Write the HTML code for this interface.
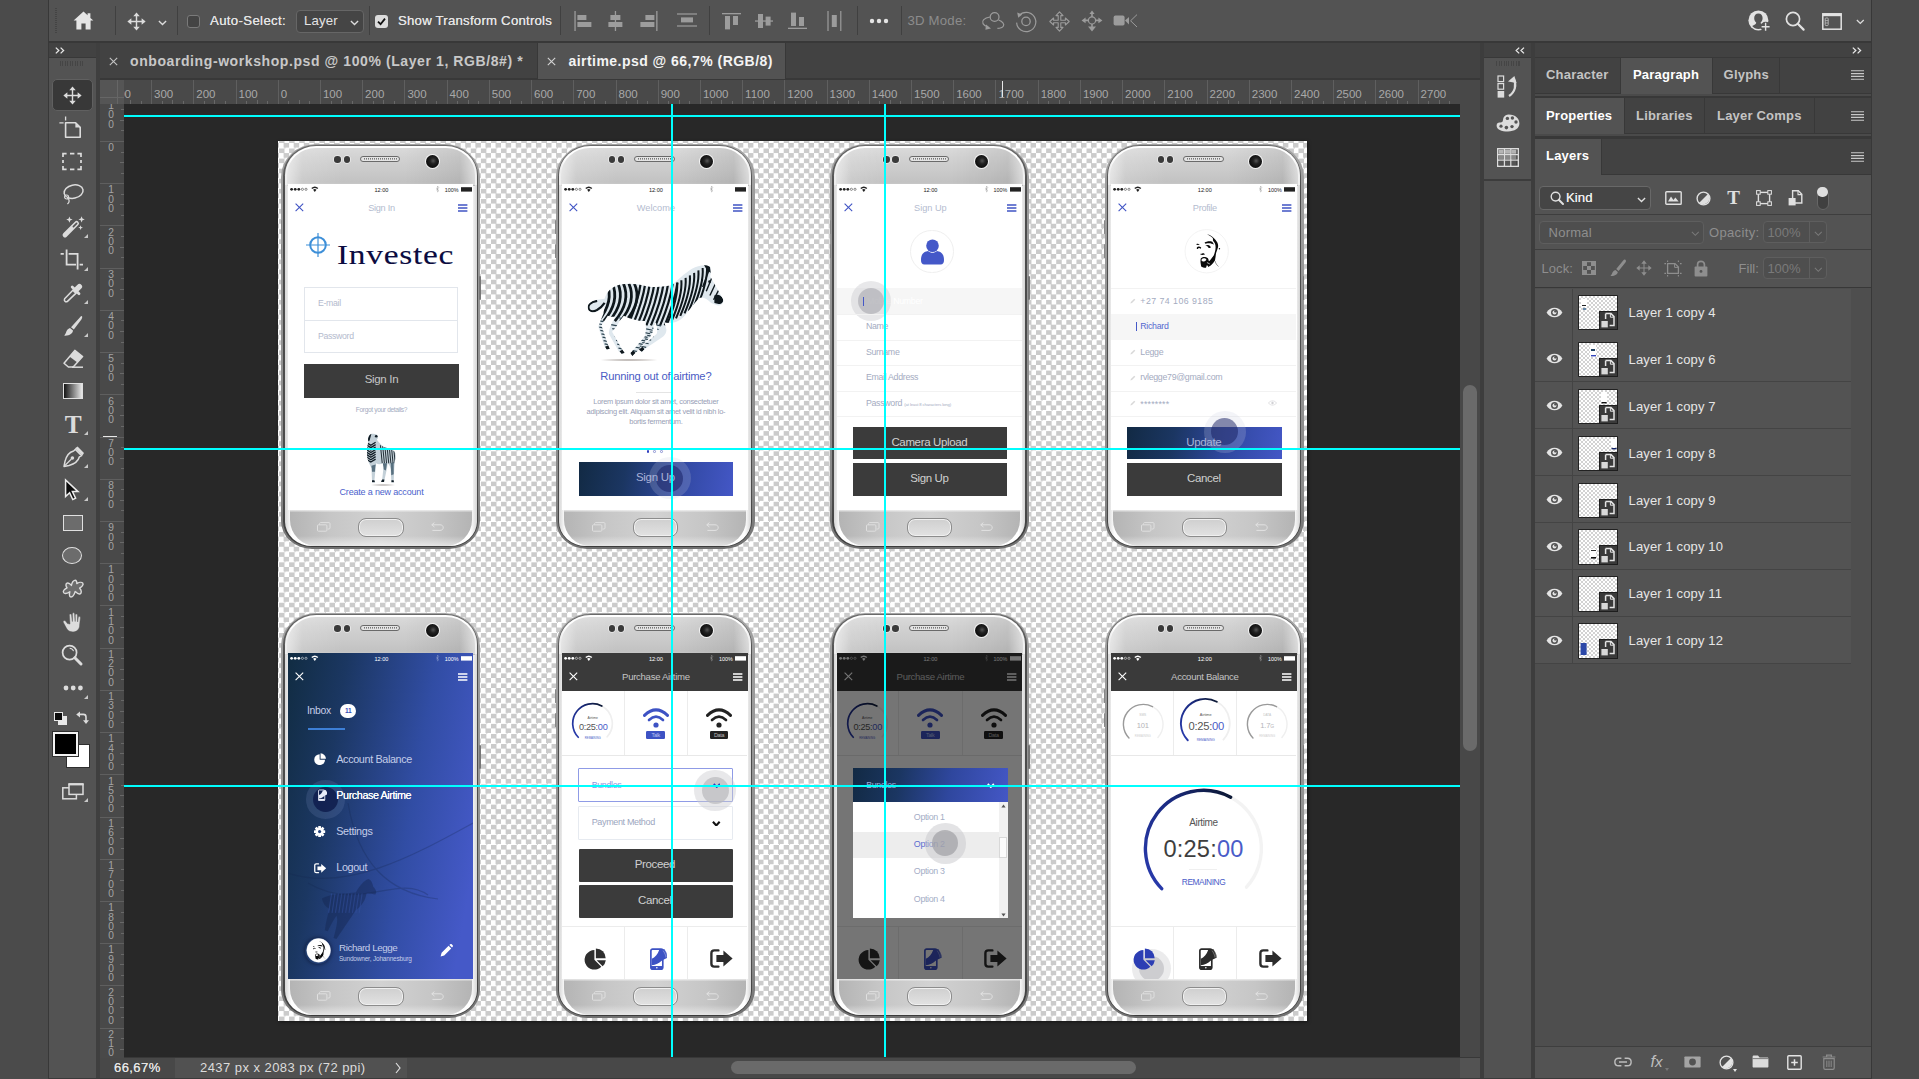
<!DOCTYPE html>
<html><head><meta charset="utf-8"><title>Photoshop</title>
<style>
html,body{margin:0;padding:0}
body{width:1919px;height:1079px;position:relative;overflow:hidden;background:#4b4b4b;font-family:"Liberation Sans",sans-serif}
#canvasclip{position:absolute;left:124px;top:104px;width:1336px;height:953px;overflow:hidden}
#canvasclip>.in{position:absolute;left:-124px;top:-104px}
</style></head>
<body>
<div style="position:absolute;left:48px;top:0px;width:1824px;height:1079px;background:#383838;"></div>
<div style="position:absolute;left:49px;top:0px;width:1822px;height:41px;background:#535353;"></div>
<div style="position:absolute;left:49px;top:43px;width:47px;height:14px;background:#424242;"></div>
<div style="position:absolute;left:49px;top:58px;width:47px;height:1021px;background:#535353;"></div>
<div style="position:absolute;left:96px;top:43px;width:4px;height:1036px;background:#3f3f3f;"></div>
<div style="position:absolute;left:100px;top:43px;width:1380px;height:35px;background:#424242;"></div>
<div style="position:absolute;left:538px;top:43px;width:247px;height:36px;background:#535353;"></div>
<div style="position:absolute;left:537px;top:43px;width:1px;height:35px;background:#383838;"></div>
<div style="position:absolute;left:785px;top:43px;width:1px;height:35px;background:#383838;"></div>
<div style="position:absolute;left:100px;top:80px;width:1360px;height:24px;background:#494949;"></div>
<div style="position:absolute;left:100px;top:104px;width:24px;height:953.6px;background:#494949;"></div>
<div style="position:absolute;left:124px;top:104px;width:1336px;height:953px;background:#282828;"></div>
<div style="position:absolute;left:1460px;top:80px;width:20px;height:977px;background:#484848;"></div>
<div style="position:absolute;left:1463px;top:385px;width:14px;height:366px;background:#6a6a6a;border-radius:7px;"></div>
<div style="position:absolute;left:100px;top:1057.6px;width:1380px;height:22px;background:#484848;"></div>
<div style="position:absolute;left:175.4px;top:1057.6px;width:232px;height:22px;background:#515151;"></div>
<div style="position:absolute;left:1460px;top:1057.6px;width:20px;height:22px;background:#535353;"></div>
<div style="position:absolute;left:731px;top:1061px;width:405px;height:13px;background:#6a6a6a;border-radius:7px;"></div>
<div style="position:absolute;left:1480px;top:43px;width:4px;height:1036px;background:#3d3d3d;"></div>
<div style="position:absolute;left:1484px;top:43px;width:47px;height:14px;background:#424242;"></div>
<div style="position:absolute;left:1484px;top:58px;width:47px;height:121px;background:#535353;"></div>
<div style="position:absolute;left:1484px;top:181px;width:47px;height:898px;background:#525252;"></div>
<div style="position:absolute;left:1531px;top:43px;width:4px;height:1036px;background:#3d3d3d;"></div>
<div style="position:absolute;left:1535px;top:43px;width:336px;height:14px;background:#424242;"></div>
<div style="position:absolute;left:1535px;top:58px;width:336px;height:35px;background:#424242;"></div>
<div style="position:absolute;left:1621px;top:58px;width:91px;height:36px;background:#535353;"></div>
<div style="position:absolute;left:1620px;top:58px;width:1px;height:35px;background:#383838;"></div>
<div style="position:absolute;left:1712px;top:58px;width:1px;height:35px;background:#383838;"></div>
<div style="position:absolute;left:1779px;top:58px;width:1px;height:35px;background:#383838;"></div>
<div style="position:absolute;left:1535px;top:94px;width:336px;height:2px;background:#4a4a4a;"></div>
<div style="position:absolute;left:1535px;top:98px;width:336px;height:35px;background:#424242;"></div>
<div style="position:absolute;left:1535px;top:98px;width:89px;height:36px;background:#535353;"></div>
<div style="position:absolute;left:1624px;top:98px;width:1px;height:35px;background:#383838;"></div>
<div style="position:absolute;left:1704px;top:98px;width:1px;height:35px;background:#383838;"></div>
<div style="position:absolute;left:1814px;top:98px;width:1px;height:35px;background:#383838;"></div>
<div style="position:absolute;left:1535px;top:134px;width:336px;height:2px;background:#4a4a4a;"></div>
<div style="position:absolute;left:1535px;top:139px;width:336px;height:35px;background:#424242;"></div>
<div style="position:absolute;left:1535px;top:139px;width:66px;height:36px;background:#535353;"></div>
<div style="position:absolute;left:1601px;top:139px;width:1px;height:35px;background:#383838;"></div>
<div style="position:absolute;left:1535px;top:175px;width:336px;height:39px;background:#535353;"></div>
<div style="position:absolute;left:1535px;top:215px;width:336px;height:34px;background:#535353;"></div>
<div style="position:absolute;left:1535px;top:250px;width:336px;height:37px;background:#535353;"></div>
<div style="position:absolute;left:1535px;top:288px;width:336px;height:758px;background:#4e4e4e;"></div>
<div style="position:absolute;left:1535px;top:1047px;width:336px;height:32px;background:#535353;"></div>
<div style="position:absolute;left:48px;top:1077.6px;width:1824px;height:1.4px;background:#3a3a3a;"></div>
<div style="position:absolute;left:0px;top:0px;width:48px;height:1079px;background:#4b4b4b;"></div>
<div style="position:absolute;left:1872px;top:0px;width:47px;height:1079px;background:#4b4b4b;"></div>
<div id="canvasclip"><div class="in"><div style="position:absolute;left:277.7px;top:141px;width:1029.4px;height:880px;background:repeating-conic-gradient(#cbcbcb 0 25%,#fff 0 50%) 1px 2px/10.1px 10.1px;box-shadow:1px 1px 3px rgba(0,0,0,.5)"></div><div style="position:absolute;left:281.2px;top:143.6px;width:199px;height:405.6px;background:linear-gradient(#a2a2a2,#949494 40%,#8a8a8a 85%,#707070);border-radius:35px 35px 31px 31px / 33px 33px 28px 28px;"><div style="position:absolute;left:2.1px;top:1.6px;width:194.8px;height:402.20000000000005px;background:linear-gradient(#6a6a6a,#4c4c4c 12%,#4c4c4c 88%,#3c3c3c);border-radius:32.8px 32.8px 28.8px 28.8px / 30.8px 30.8px 25.8px 25.8px;"></div><div style="position:absolute;left:3.6px;top:2.8px;width:191.8px;height:399.8px;background:linear-gradient(90deg,#d6d6d6,#f2f2f2 2.2%,#ffffff 3.4%,#ffffff 96.6%,#f2f2f2 97.8%,#d6d6d6);border-radius:31.3px 31.3px 27.3px 27.3px / 29.3px 29.3px 24.3px 24.3px;"></div><div style="position:absolute;left:5.6px;top:4.6px;width:187.8px;height:37.4px;background:linear-gradient(90deg,rgba(255,255,255,.18),rgba(255,255,255,0) 30%,rgba(0,0,0,0) 62%,rgba(0,0,0,.09)),linear-gradient(#dadada,#d2d2d2 25%,#cacaca 60%,#c2c2c2 90%,#cecece);border-radius:29px 29px 0 0 / 27px 27px 0 0;"></div><div style="position:absolute;left:3.6px;top:2.8px;width:191.8px;height:39px;background:linear-gradient(90deg,rgba(255,255,255,.5),rgba(255,255,255,0) 9%,rgba(255,255,255,0) 91%,rgba(255,255,255,.6));border-radius:31px 31px 0 0 / 29px 29px 0 0;"></div><div style="position:absolute;left:53.2px;top:12.6px;width:6.4px;height:6.4px;border-radius:50%;background:#3a3a3a;box-shadow:0 0 0 0.8px rgba(255,255,255,.55);"></div><div style="position:absolute;left:62.4px;top:12.6px;width:6.4px;height:6.4px;border-radius:50%;background:#3a3a3a;box-shadow:0 0 0 0.8px rgba(255,255,255,.55);"></div><div style="position:absolute;left:78.6px;top:12.4px;width:40.6px;height:6.4px;border-radius:3.4px;background:#e4e4e4;border:1px solid #6a6a6a;box-sizing:border-box;background-image:repeating-linear-gradient(90deg,#777 0,#777 0.9px,transparent 0.9px,transparent 2px);background-size:34px 1.6px;background-position:3px 1.4px;background-repeat:no-repeat;"></div><div style="position:absolute;left:144.6px;top:11.6px;width:13px;height:13px;border-radius:50%;background:radial-gradient(circle at 55% 45%,#555 0,#222 30%,#111 60%,#222 100%);box-shadow:0 0 0 1px #f4f4f4;"></div><div style="position:absolute;left:8.6px;top:366.6px;width:181.8px;height:35.4px;background:linear-gradient(90deg,#b4b4b4,#c6c6c6 22%,#d2d2d2 50%,#c6c6c6 78%,#b4b4b4);border-radius:0 0 27px 27px / 0 0 26px 26px;"></div><div style="position:absolute;left:8.6px;top:366.6px;width:181.8px;height:35.4px;background:linear-gradient(rgba(255,255,255,.7),rgba(255,255,255,0) 7%,rgba(255,255,255,0) 72%,rgba(255,255,255,.55));border-radius:0 0 27px 27px / 0 0 26px 26px;"></div><div style="position:absolute;left:77px;top:374.6px;width:45.4px;height:18.6px;border-radius:8px;border:1.2px solid #8c8c8c;box-sizing:border-box;background:linear-gradient(#cfcfcf,#e2e2e2);box-shadow:inset 0 0 0 1px #f0f0f0;"></div><svg style="position:absolute;left:36px;top:378px;" width="14" height="10" viewBox="0 0 14 10"><rect x="0.5" y="2.8" width="9.4" height="6.4" rx="1" fill="none" stroke="#e2e2e2" stroke-width="0.9"/><path d="M2.6 2.6 V1.6 C2.6 1 3 0.6 3.6 0.6 H12 C12.6 0.6 13 1 13 1.6 V6 C13 6.6 12.6 7 12 7 H10.6" fill="none" stroke="#e2e2e2" stroke-width="0.9"/></svg><svg style="position:absolute;left:150px;top:378.4px;" width="13" height="9" viewBox="0 0 13 9"><path d="M3.4 0.6 L0.8 2.8 L3.4 5 M0.8 2.8 H9 C11 2.8 12.2 4 12.2 5.6 C12.2 7.2 11 8.4 9 8.4 H1.4" fill="none" stroke="#e2e2e2" stroke-width="1"/></svg><div style="position:absolute;left:198px;top:132px;width:1.6px;height:24px;background:#777;border-radius:1px;"></div><div style="position:absolute;left:-0.6px;top:76px;width:1.4px;height:14px;background:#888;border-radius:1px;"></div><div style="position:absolute;left:-0.6px;top:100px;width:1.4px;height:14px;background:#888;border-radius:1px;"></div><div style="position:absolute;left:6.8px;top:40.8px;width:185.4px;height:326px;background:#fff;overflow:hidden"><svg style="position:absolute;left:0px;top:0px;opacity:1.0;" width="185" height="12" viewBox="0 0 185 12"><circle cx="3.6" cy="5.3" r="1.4" fill="#222"/><circle cx="7.2" cy="5.3" r="1.4" fill="#222"/><circle cx="10.8" cy="5.3" r="1.4" fill="#222"/><circle cx="14.4" cy="5.3" r="1.1" fill="none" stroke="#222" stroke-width="0.5"/><circle cx="18.0" cy="5.3" r="1.1" fill="none" stroke="#222" stroke-width="0.5"/><path d="M23.3 3.9 Q26.8 0.9 30.3 3.9 L29.3 5 Q26.8 2.9 24.3 5 Z M25.1 5.8 Q26.8 4.4 28.5 5.8 L26.8 7.9 Z" fill="#222"/><path d="M148 3.8 L151 6.6 L149.5 8 L149.5 2 L151 3.6 L148 6.4" fill="none" stroke="#222" stroke-width="0.4" opacity="0.5"/><rect x="173" y="3.2" width="11" height="4.4" fill="#222"/></svg><div style="position:absolute;left:-56.5px;width:300px;text-align:center;top:2.2px;font-size:5.6px;line-height:6.7px;color:#222;white-space:nowrap;opacity:1.0;">12:00</div><div style="position:absolute;left:-129.5px;width:300px;text-align:right;top:2.2px;font-size:5.4px;line-height:6.5px;color:#222;white-space:nowrap;opacity:1.0;">100%</div><svg style="position:absolute;left:7px;top:19px;" width="9" height="9" viewBox="0 0 9 9"><path d="M0.6 0.6 L8.2 8.2 M8.2 0.6 L0.6 8.2" stroke="#4054c4" stroke-width="1.1" fill="none"/></svg><svg style="position:absolute;left:170.5px;top:19.3px;" width="10" height="8" viewBox="0 0 10 8"><path d="M0 1 H9.4 M0 4 H9.4 M0 7 H9.4" stroke="#4054c4" stroke-width="1.3" fill="none"/></svg><div style="position:absolute;left:-56.5px;width:300px;text-align:center;top:18.5px;font-size:9.2px;line-height:11.0px;color:#b4bccf;white-space:nowrap;letter-spacing:-0.3px;">Sign In</div><svg style="position:absolute;left:18.4px;top:49px;" width="24" height="24" viewBox="0 0 24 24"><circle cx="12" cy="12" r="7.8" fill="none" stroke="#3d8fd8" stroke-width="2"/><path d="M12 0 V24 M0 12 H24" stroke="#3d8fd8" stroke-width="1.2"/></svg><div style="position:absolute;left:48.6px;top:54.6px;font-family:'Liberation Serif',serif;font-size:27.5px;line-height:32px;color:#0b0b40;letter-spacing:0.6px;-webkit-text-stroke:0.1px #0b0b40;transform:scaleX(1.215);transform-origin:0 0">Investec</div><div style="position:absolute;left:16px;top:103px;width:154px;height:66px;border:1px solid #e2e6ec;box-sizing:border-box;"></div><div style="position:absolute;left:16px;top:136px;width:154px;height:1px;background:#e2e6ec;"></div><div style="position:absolute;left:30px;text-align:left;top:113.8px;font-size:8.7px;line-height:10.4px;color:#b3bacd;white-space:nowrap;letter-spacing:-0.3px;">E-mail</div><div style="position:absolute;left:30px;text-align:left;top:146.8px;font-size:8.7px;line-height:10.4px;color:#b3bacd;white-space:nowrap;letter-spacing:-0.3px;">Password</div><div style="position:absolute;left:16px;top:180px;width:154.6px;height:33.4px;background:#3b3b3b;"></div><div style="position:absolute;left:-56.5px;width:300px;text-align:center;top:189.1px;font-size:11.5px;line-height:13.8px;color:#c6c6c6;white-space:nowrap;letter-spacing:-0.3px;">Sign In</div><div style="position:absolute;left:-56.5px;width:300px;text-align:center;top:222.0px;font-size:6.6px;line-height:7.9px;color:#a3abc0;white-space:nowrap;letter-spacing:-0.35px;">Forgot your details?</div><svg style="position:absolute;left:78.3px;top:247.8px;opacity:1;" width="36.1" height="60.2" viewBox="0 0 60 100"><defs><clipPath id="zs"><path d="M5 6 C7 2 14 2 19 5 C21 8 20 11 18 13 C22 18 26 22 28 24 C34 26 42 28 47 32 C50 36 50 42 48 48 L47 60 L46 82 L47 84 L42 84 L42 80 L41 62 C40 56 38 54 36 52 L35 60 L31 78 L30 83 L25 83 L27 78 L29 60 L28 52 C24 54 20 54 17 52 L16 60 L14 80 L15 84 L10 84 L10 80 L9 60 C6 54 3 48 2 42 C1 32 2 22 4 16 C3 12 3 9 5 6 Z"/></clipPath></defs><path d="M5 6 C7 2 14 2 19 5 C21 8 20 11 18 13 C22 18 26 22 28 24 C34 26 42 28 47 32 C50 36 50 42 48 48 L47 60 L46 82 L47 84 L42 84 L42 80 L41 62 C40 56 38 54 36 52 L35 60 L31 78 L30 83 L25 83 L27 78 L29 60 L28 52 C24 54 20 54 17 52 L16 60 L14 80 L15 84 L10 84 L10 80 L9 60 C6 54 3 48 2 42 C1 32 2 22 4 16 C3 12 3 9 5 6 Z" fill="#c3d0d8"/><g clip-path="url(#zs)"><path d="M0 17 L8 22 L16 17" stroke="#101c24" stroke-width="2.2" fill="none"/><path d="M0 21 L8 26 L16 21" stroke="#101c24" stroke-width="2.2" fill="none"/><path d="M0 25 L8 30 L16 25" stroke="#101c24" stroke-width="2.2" fill="none"/><path d="M0 29 L8 34 L16 29" stroke="#101c24" stroke-width="2.2" fill="none"/><path d="M0 33 L8 38 L16 33" stroke="#101c24" stroke-width="2.2" fill="none"/><path d="M0 37 L8 42 L16 37" stroke="#101c24" stroke-width="2.2" fill="none"/><path d="M0 41 L8 46 L16 41" stroke="#101c24" stroke-width="2.2" fill="none"/><path d="M0 45 L8 50 L16 45" stroke="#101c24" stroke-width="2.2" fill="none"/><path d="M24.0 22 L27.0 52" stroke="#101c24" stroke-width="1.5" fill="none"/><path d="M27.6 22 L30.6 52" stroke="#101c24" stroke-width="1.5" fill="none"/><path d="M31.2 22 L34.2 52" stroke="#101c24" stroke-width="1.5" fill="none"/><path d="M34.8 22 L37.8 52" stroke="#101c24" stroke-width="1.5" fill="none"/><path d="M38.4 22 L41.4 52" stroke="#101c24" stroke-width="1.5" fill="none"/><path d="M42.0 22 L45.0 52" stroke="#101c24" stroke-width="1.5" fill="none"/><path d="M45.6 22 L48.6 52" stroke="#101c24" stroke-width="1.5" fill="none"/><path d="M49.2 22 L52.2 52" stroke="#101c24" stroke-width="1.5" fill="none"/><path d="M3 16 C3 9 5 4 9 3 L6 14 Z" fill="#101c24"/><circle cx="17" cy="7" r="2.2" fill="#101c24"/><path d="M10 80 H15 V84 H10 Z M25 79 H31 V83 H25 Z M42 80 H47 V84 H42 Z" fill="#101c24"/><path d="M41 52 L46 50 L46 70 L42 72 Z M28 52 L35 52 L33 64 L29 62 Z M9 56 L16 54 L15 66 L10 66 Z" fill="#3f596a" opacity="0.8"/></g></svg><div style="position:absolute;left:81px;top:299.6px;width:28px;height:1.6px;background:radial-gradient(ellipse,rgba(90,80,75,.6) 0,rgba(138,128,122,0) 70%);"></div><div style="position:absolute;left:-56.5px;width:300px;text-align:center;top:302.2px;font-size:9px;line-height:10.8px;color:#4c5fcc;white-space:nowrap;letter-spacing:-0.18px;">Create a new account</div></div></div><div style="position:absolute;left:555.6px;top:143.6px;width:199px;height:405.6px;background:linear-gradient(#a2a2a2,#949494 40%,#8a8a8a 85%,#707070);border-radius:35px 35px 31px 31px / 33px 33px 28px 28px;"><div style="position:absolute;left:2.1px;top:1.6px;width:194.8px;height:402.20000000000005px;background:linear-gradient(#6a6a6a,#4c4c4c 12%,#4c4c4c 88%,#3c3c3c);border-radius:32.8px 32.8px 28.8px 28.8px / 30.8px 30.8px 25.8px 25.8px;"></div><div style="position:absolute;left:3.6px;top:2.8px;width:191.8px;height:399.8px;background:linear-gradient(90deg,#d6d6d6,#f2f2f2 2.2%,#ffffff 3.4%,#ffffff 96.6%,#f2f2f2 97.8%,#d6d6d6);border-radius:31.3px 31.3px 27.3px 27.3px / 29.3px 29.3px 24.3px 24.3px;"></div><div style="position:absolute;left:5.6px;top:4.6px;width:187.8px;height:37.4px;background:linear-gradient(90deg,rgba(255,255,255,.18),rgba(255,255,255,0) 30%,rgba(0,0,0,0) 62%,rgba(0,0,0,.09)),linear-gradient(#dadada,#d2d2d2 25%,#cacaca 60%,#c2c2c2 90%,#cecece);border-radius:29px 29px 0 0 / 27px 27px 0 0;"></div><div style="position:absolute;left:3.6px;top:2.8px;width:191.8px;height:39px;background:linear-gradient(90deg,rgba(255,255,255,.5),rgba(255,255,255,0) 9%,rgba(255,255,255,0) 91%,rgba(255,255,255,.6));border-radius:31px 31px 0 0 / 29px 29px 0 0;"></div><div style="position:absolute;left:53.2px;top:12.6px;width:6.4px;height:6.4px;border-radius:50%;background:#3a3a3a;box-shadow:0 0 0 0.8px rgba(255,255,255,.55);"></div><div style="position:absolute;left:62.4px;top:12.6px;width:6.4px;height:6.4px;border-radius:50%;background:#3a3a3a;box-shadow:0 0 0 0.8px rgba(255,255,255,.55);"></div><div style="position:absolute;left:78.6px;top:12.4px;width:40.6px;height:6.4px;border-radius:3.4px;background:#e4e4e4;border:1px solid #6a6a6a;box-sizing:border-box;background-image:repeating-linear-gradient(90deg,#777 0,#777 0.9px,transparent 0.9px,transparent 2px);background-size:34px 1.6px;background-position:3px 1.4px;background-repeat:no-repeat;"></div><div style="position:absolute;left:144.6px;top:11.6px;width:13px;height:13px;border-radius:50%;background:radial-gradient(circle at 55% 45%,#555 0,#222 30%,#111 60%,#222 100%);box-shadow:0 0 0 1px #f4f4f4;"></div><div style="position:absolute;left:8.6px;top:366.6px;width:181.8px;height:35.4px;background:linear-gradient(90deg,#b4b4b4,#c6c6c6 22%,#d2d2d2 50%,#c6c6c6 78%,#b4b4b4);border-radius:0 0 27px 27px / 0 0 26px 26px;"></div><div style="position:absolute;left:8.6px;top:366.6px;width:181.8px;height:35.4px;background:linear-gradient(rgba(255,255,255,.7),rgba(255,255,255,0) 7%,rgba(255,255,255,0) 72%,rgba(255,255,255,.55));border-radius:0 0 27px 27px / 0 0 26px 26px;"></div><div style="position:absolute;left:77px;top:374.6px;width:45.4px;height:18.6px;border-radius:8px;border:1.2px solid #8c8c8c;box-sizing:border-box;background:linear-gradient(#cfcfcf,#e2e2e2);box-shadow:inset 0 0 0 1px #f0f0f0;"></div><svg style="position:absolute;left:36px;top:378px;" width="14" height="10" viewBox="0 0 14 10"><rect x="0.5" y="2.8" width="9.4" height="6.4" rx="1" fill="none" stroke="#e2e2e2" stroke-width="0.9"/><path d="M2.6 2.6 V1.6 C2.6 1 3 0.6 3.6 0.6 H12 C12.6 0.6 13 1 13 1.6 V6 C13 6.6 12.6 7 12 7 H10.6" fill="none" stroke="#e2e2e2" stroke-width="0.9"/></svg><svg style="position:absolute;left:150px;top:378.4px;" width="13" height="9" viewBox="0 0 13 9"><path d="M3.4 0.6 L0.8 2.8 L3.4 5 M0.8 2.8 H9 C11 2.8 12.2 4 12.2 5.6 C12.2 7.2 11 8.4 9 8.4 H1.4" fill="none" stroke="#e2e2e2" stroke-width="1"/></svg><div style="position:absolute;left:198px;top:132px;width:1.6px;height:24px;background:#777;border-radius:1px;"></div><div style="position:absolute;left:-0.6px;top:76px;width:1.4px;height:14px;background:#888;border-radius:1px;"></div><div style="position:absolute;left:-0.6px;top:100px;width:1.4px;height:14px;background:#888;border-radius:1px;"></div><div style="position:absolute;left:6.8px;top:40.8px;width:185.4px;height:326px;background:#fff;overflow:hidden"><svg style="position:absolute;left:0px;top:0px;opacity:1.0;" width="185" height="12" viewBox="0 0 185 12"><circle cx="3.6" cy="5.3" r="1.4" fill="#222"/><circle cx="7.2" cy="5.3" r="1.4" fill="#222"/><circle cx="10.8" cy="5.3" r="1.4" fill="#222"/><circle cx="14.4" cy="5.3" r="1.1" fill="none" stroke="#222" stroke-width="0.5"/><circle cx="18.0" cy="5.3" r="1.1" fill="none" stroke="#222" stroke-width="0.5"/><path d="M23.3 3.9 Q26.8 0.9 30.3 3.9 L29.3 5 Q26.8 2.9 24.3 5 Z M25.1 5.8 Q26.8 4.4 28.5 5.8 L26.8 7.9 Z" fill="#222"/><path d="M148 3.8 L151 6.6 L149.5 8 L149.5 2 L151 3.6 L148 6.4" fill="none" stroke="#222" stroke-width="0.4" opacity="0.5"/><rect x="173" y="3.2" width="11" height="4.4" fill="#222"/></svg><div style="position:absolute;left:-56.5px;width:300px;text-align:center;top:2.2px;font-size:5.6px;line-height:6.7px;color:#222;white-space:nowrap;opacity:1.0;">12:00</div><div style="position:absolute;left:-129.5px;width:300px;text-align:right;top:2.2px;font-size:5.4px;line-height:6.5px;color:#222;white-space:nowrap;opacity:1.0;"></div><svg style="position:absolute;left:7px;top:19px;" width="9" height="9" viewBox="0 0 9 9"><path d="M0.6 0.6 L8.2 8.2 M8.2 0.6 L0.6 8.2" stroke="#4054c4" stroke-width="1.1" fill="none"/></svg><svg style="position:absolute;left:170.5px;top:19.3px;" width="10" height="8" viewBox="0 0 10 8"><path d="M0 1 H9.4 M0 4 H9.4 M0 7 H9.4" stroke="#4054c4" stroke-width="1.3" fill="none"/></svg><div style="position:absolute;left:-56.5px;width:300px;text-align:center;top:18.5px;font-size:9.2px;line-height:11.0px;color:#b4bccf;white-space:nowrap;letter-spacing:0.03px;">Welcome</div><svg style="position:absolute;left:17px;top:70.6px;" width="154.6" height="115.1" viewBox="0 0 145 108"><defs><clipPath id="zr"><path d="M135 41 C136.6 44 134 47.6 130 47.4 L124 45 C120 41 116 38.6 113 40.4 C109 44 105 50 100 56 C97 60 93 62 90 63 C86 64 83 64 80 63 L82 70 C82 74 80 76 77 78 L62 88 L59 91 L56 89 L60 85 L73 74 C74 70 73 66 72 63 L70 66 C70 72 68 76 64 80 L53 92 L50 95 L48 92 L52 88 L62 76 C63 70 63 66 62 62 C55 62 48 60 42 57 L38 62 C36 66 33 70 31 72 L40 88 L43 92 L40 93 L37 90 L28 74 C28 68 32 62 34 58 C31 58 29 58 27 57 L21 66 L27 84 L29 88 L26 89 L24 86 L18 67 L23 55 C23 52 24 50 24 48 C20 52 13 56 9 52 C6 47 11 43 17 42 L24 41 C26 35 30 30 38 28 C46 26 54 27 62 29 C72 31 80 30 88 28 C92 24 98 18 106 13 C111 10 117 9 121 10 L123 11 C124 14 124 17 123 20 C127 27 131 34 135 41 Z"/></clipPath></defs><path d="M135 41 C136.6 44 134 47.6 130 47.4 L124 45 C120 41 116 38.6 113 40.4 C109 44 105 50 100 56 C97 60 93 62 90 63 C86 64 83 64 80 63 L82 70 C82 74 80 76 77 78 L62 88 L59 91 L56 89 L60 85 L73 74 C74 70 73 66 72 63 L70 66 C70 72 68 76 64 80 L53 92 L50 95 L48 92 L52 88 L62 76 C63 70 63 66 62 62 C55 62 48 60 42 57 L38 62 C36 66 33 70 31 72 L40 88 L43 92 L40 93 L37 90 L28 74 C28 68 32 62 34 58 C31 58 29 58 27 57 L21 66 L27 84 L29 88 L26 89 L24 86 L18 67 L23 55 C23 52 24 50 24 48 C20 52 13 56 9 52 C6 47 11 43 17 42 L24 41 C26 35 30 30 38 28 C46 26 54 27 62 29 C72 31 80 30 88 28 C92 24 98 18 106 13 C111 10 117 9 121 10 L123 11 C124 14 124 17 123 20 C127 27 131 34 135 41 Z" fill="#dfe8ee"/><g clip-path="url(#zr)"><path d="M26.0 26.0 C31.0 38 28.0 50 18.0 62" stroke="#0e171c" stroke-width="2.6" fill="none"/><path d="M31.2 26.2 C36.2 38 33.2 50 23.2 62" stroke="#0e171c" stroke-width="2.6" fill="none"/><path d="M36.4 26.4 C41.4 38 38.4 50 28.4 62" stroke="#0e171c" stroke-width="2.6" fill="none"/><path d="M41.6 26.6 C46.6 38 43.6 50 33.6 62" stroke="#0e171c" stroke-width="2.6" fill="none"/><path d="M46.8 26.8 C51.8 38 48.8 50 38.8 62" stroke="#0e171c" stroke-width="2.6" fill="none"/><path d="M52.0 27.0 C57.0 38 54.0 50 44.0 62" stroke="#0e171c" stroke-width="2.6" fill="none"/><path d="M58.0 26 C56.0 40 52.0 52 46.0 66" stroke="#0e171c" stroke-width="2.1" fill="none"/><path d="M62.3 26 C60.3 40 56.3 52 50.3 66" stroke="#0e171c" stroke-width="2.1" fill="none"/><path d="M66.6 26 C64.6 40 60.6 52 54.6 66" stroke="#0e171c" stroke-width="2.1" fill="none"/><path d="M70.9 26 C68.9 40 64.9 52 58.9 66" stroke="#0e171c" stroke-width="2.1" fill="none"/><path d="M75.2 26 C73.2 40 69.2 52 63.2 66" stroke="#0e171c" stroke-width="2.1" fill="none"/><path d="M79.5 26 C77.5 40 73.5 52 67.5 66" stroke="#0e171c" stroke-width="2.1" fill="none"/><path d="M83.8 26 C81.8 40 77.8 52 71.8 66" stroke="#0e171c" stroke-width="2.1" fill="none"/><path d="M88.1 26 C86.1 40 82.1 52 76.1 66" stroke="#0e171c" stroke-width="2.1" fill="none"/><path d="M92.4 26 C90.4 40 86.4 52 80.4 66" stroke="#0e171c" stroke-width="2.1" fill="none"/><path d="M92.0 26.0 C93.0 38.0 89.0 50.0 83.0 64.0" stroke="#0e171c" stroke-width="1.9" fill="none"/><path d="M96.0 23.7 C97.0 35.7 93.0 47.7 87.0 61.7" stroke="#0e171c" stroke-width="1.9" fill="none"/><path d="M100.0 21.4 C101.0 33.4 97.0 45.4 91.0 59.4" stroke="#0e171c" stroke-width="1.9" fill="none"/><path d="M104.0 19.1 C105.0 31.1 101.0 43.1 95.0 57.1" stroke="#0e171c" stroke-width="1.9" fill="none"/><path d="M108.0 16.8 C109.0 28.8 105.0 40.8 99.0 54.8" stroke="#0e171c" stroke-width="1.9" fill="none"/><path d="M112.0 14.5 C113.0 26.5 109.0 38.5 103.0 52.5" stroke="#0e171c" stroke-width="1.9" fill="none"/><path d="M116.0 12.2 C117.0 24.2 113.0 36.2 107.0 50.2" stroke="#0e171c" stroke-width="1.9" fill="none"/><path d="M120.0 9.9 C121.0 21.9 117.0 33.9 111.0 47.9" stroke="#0e171c" stroke-width="1.9" fill="none"/><path d="M122.0 14.0 L116.0 30.0" stroke="#0e171c" stroke-width="1.3" fill="none"/><path d="M125.2 20.0 L119.4 34.0" stroke="#0e171c" stroke-width="1.3" fill="none"/><path d="M128.4 26.0 L122.8 38.0" stroke="#0e171c" stroke-width="1.3" fill="none"/><path d="M131.6 32.0 L126.2 42.0" stroke="#0e171c" stroke-width="1.3" fill="none"/><path d="M127 38 C130 36 134 38 135 41 C136 44 134 46 131 46 L127 45 Z" fill="#0e171c"/><path d="M117 9 L121 10 L123 11 L123.6 17 L120 14 Z" fill="#0e171c"/><circle cx="122.5" cy="25" r="1.3" fill="#0e171c"/><path d="M24 45 C20 51 13 55 9.6 51.6 C7 47 11 44 17 43" stroke="#0e171c" stroke-width="2" fill="none"/><path d="M56 89 L59 91 L61.5 88.4 L59.4 86 Z M48 92 L50 95 L53 92 L51 89.4 Z M40 93 L43 92 L41 88.6 L38 90.4 Z M26 89 L29 88 L27.6 84.6 L24.4 86 Z" fill="#0e171c"/><path d="M36 58 C44 60 52 62 60 62 L56 68 C48 66 40 62 36 58 Z" fill="#3c5666" opacity="0.75"/><path d="M17.0 61.4 L23.0 62.6" stroke="#2c424e" stroke-width="1.15"/><path d="M18.0 64.5 L24.0 65.7" stroke="#2c424e" stroke-width="1.15"/><path d="M19.0 67.7 L25.0 68.9" stroke="#2c424e" stroke-width="1.15"/><path d="M20.0 70.8 L26.0 72.0" stroke="#2c424e" stroke-width="1.15"/><path d="M21.0 74.0 L27.0 75.2" stroke="#2c424e" stroke-width="1.15"/><path d="M22.0 77.1 L28.0 78.3" stroke="#2c424e" stroke-width="1.15"/><path d="M23.0 80.3 L29.0 81.5" stroke="#2c424e" stroke-width="1.15"/><path d="M24.0 83.4 L30.0 84.6" stroke="#2c424e" stroke-width="1.15"/><path d="M30.0 65.4 L36.0 66.6" stroke="#2c424e" stroke-width="1.15"/><path d="M31.2 69.1 L37.2 70.3" stroke="#2c424e" stroke-width="1.15"/><path d="M32.3 72.7 L38.3 73.9" stroke="#2c424e" stroke-width="1.15"/><path d="M33.5 76.4 L39.5 77.6" stroke="#2c424e" stroke-width="1.15"/><path d="M34.7 80.1 L40.7 81.3" stroke="#2c424e" stroke-width="1.15"/><path d="M35.8 83.7 L41.8 84.9" stroke="#2c424e" stroke-width="1.15"/><path d="M37.0 87.4 L43.0 88.6" stroke="#2c424e" stroke-width="1.15"/><path d="M71.0 65.4 L77.0 66.6" stroke="#2c424e" stroke-width="1.15"/><path d="M68.7 68.7 L74.7 69.9" stroke="#2c424e" stroke-width="1.15"/><path d="M66.3 72.1 L72.3 73.3" stroke="#2c424e" stroke-width="1.15"/><path d="M64.0 75.4 L70.0 76.6" stroke="#2c424e" stroke-width="1.15"/><path d="M61.7 78.7 L67.7 79.9" stroke="#2c424e" stroke-width="1.15"/><path d="M59.3 82.1 L65.3 83.3" stroke="#2c424e" stroke-width="1.15"/><path d="M57.0 85.4 L63.0 86.6" stroke="#2c424e" stroke-width="1.15"/><path d="M63.0 69.4 L69.0 70.6" stroke="#2c424e" stroke-width="1.15"/><path d="M60.7 72.7 L66.7 73.9" stroke="#2c424e" stroke-width="1.15"/><path d="M58.3 76.1 L64.3 77.3" stroke="#2c424e" stroke-width="1.15"/><path d="M56.0 79.4 L62.0 80.6" stroke="#2c424e" stroke-width="1.15"/><path d="M53.7 82.7 L59.7 83.9" stroke="#2c424e" stroke-width="1.15"/><path d="M51.3 86.1 L57.3 87.3" stroke="#2c424e" stroke-width="1.15"/><path d="M49.0 89.4 L55.0 90.6" stroke="#2c424e" stroke-width="1.15"/></g></svg><div style="position:absolute;left:34px;top:175px;width:66px;height:2px;background:radial-gradient(ellipse,#8a807a 0,rgba(138,128,122,0) 70%);"></div><div style="position:absolute;left:-56.5px;width:300px;text-align:center;top:185.9px;font-size:11.2px;line-height:13.4px;color:#4a5cc4;white-space:nowrap;letter-spacing:-0.2px;">Running out of airtime?</div><div style="position:absolute;left:74px;top:207.5px;width:36px;height:1px;background:#e4e4e4;"></div><div style="position:absolute;left:-56.5px;width:300px;text-align:center;top:214.1px;font-size:7.45px;line-height:8.9px;color:#98a0b6;white-space:nowrap;letter-spacing:-0.28px;">Lorem ipsum dolor sit amet, consectetuer</div><div style="position:absolute;left:-56.5px;width:300px;text-align:center;top:223.9px;font-size:7.45px;line-height:8.9px;color:#98a0b6;white-space:nowrap;letter-spacing:-0.28px;">adipiscing elit. Aliquam sit amet velit id nibh lo-</div><div style="position:absolute;left:-56.5px;width:300px;text-align:center;top:233.7px;font-size:7.45px;line-height:8.9px;color:#98a0b6;white-space:nowrap;letter-spacing:-0.28px;">bortis fermentum.</div><div style="position:absolute;left:84.6px;top:266px;width:2.4px;height:2.4px;border-radius:50%;background:#3040c0;"></div><div style="position:absolute;left:91px;top:266px;width:2.2px;height:2.2px;border-radius:50%;border:0.5px solid #9aa0d8;box-sizing:border-box;"></div><div style="position:absolute;left:98px;top:266px;width:2.2px;height:2.2px;border-radius:50%;border:0.5px solid #9aa0d8;box-sizing:border-box;"></div><div style="position:absolute;left:16.2px;top:278px;width:154.4px;height:33.6px;background:linear-gradient(100deg,#122a44 0%,#1b3662 30%,#2f479e 62%,#4457c6 100%);"></div><div style="position:absolute;left:86.47500000000001px;top:273.075px;width:41.85px;height:41.85px;border-radius:50%;background:rgba(200,204,222,0.2);"></div><div style="position:absolute;left:93.9px;top:280.5px;width:27.0px;height:27.0px;border-radius:50%;background:rgba(20,28,96,0.5);"></div><div style="position:absolute;left:-57px;width:300px;text-align:center;top:287.1px;font-size:11.5px;line-height:13.8px;color:#a9b2d8;white-space:nowrap;letter-spacing:-0.3px;">Sign Up</div></div></div><div style="position:absolute;left:830.1px;top:143.6px;width:199px;height:405.6px;background:linear-gradient(#a2a2a2,#949494 40%,#8a8a8a 85%,#707070);border-radius:35px 35px 31px 31px / 33px 33px 28px 28px;"><div style="position:absolute;left:2.1px;top:1.6px;width:194.8px;height:402.20000000000005px;background:linear-gradient(#6a6a6a,#4c4c4c 12%,#4c4c4c 88%,#3c3c3c);border-radius:32.8px 32.8px 28.8px 28.8px / 30.8px 30.8px 25.8px 25.8px;"></div><div style="position:absolute;left:3.6px;top:2.8px;width:191.8px;height:399.8px;background:linear-gradient(90deg,#d6d6d6,#f2f2f2 2.2%,#ffffff 3.4%,#ffffff 96.6%,#f2f2f2 97.8%,#d6d6d6);border-radius:31.3px 31.3px 27.3px 27.3px / 29.3px 29.3px 24.3px 24.3px;"></div><div style="position:absolute;left:5.6px;top:4.6px;width:187.8px;height:37.4px;background:linear-gradient(90deg,rgba(255,255,255,.18),rgba(255,255,255,0) 30%,rgba(0,0,0,0) 62%,rgba(0,0,0,.09)),linear-gradient(#dadada,#d2d2d2 25%,#cacaca 60%,#c2c2c2 90%,#cecece);border-radius:29px 29px 0 0 / 27px 27px 0 0;"></div><div style="position:absolute;left:3.6px;top:2.8px;width:191.8px;height:39px;background:linear-gradient(90deg,rgba(255,255,255,.5),rgba(255,255,255,0) 9%,rgba(255,255,255,0) 91%,rgba(255,255,255,.6));border-radius:31px 31px 0 0 / 29px 29px 0 0;"></div><div style="position:absolute;left:53.2px;top:12.6px;width:6.4px;height:6.4px;border-radius:50%;background:#3a3a3a;box-shadow:0 0 0 0.8px rgba(255,255,255,.55);"></div><div style="position:absolute;left:62.4px;top:12.6px;width:6.4px;height:6.4px;border-radius:50%;background:#3a3a3a;box-shadow:0 0 0 0.8px rgba(255,255,255,.55);"></div><div style="position:absolute;left:78.6px;top:12.4px;width:40.6px;height:6.4px;border-radius:3.4px;background:#e4e4e4;border:1px solid #6a6a6a;box-sizing:border-box;background-image:repeating-linear-gradient(90deg,#777 0,#777 0.9px,transparent 0.9px,transparent 2px);background-size:34px 1.6px;background-position:3px 1.4px;background-repeat:no-repeat;"></div><div style="position:absolute;left:144.6px;top:11.6px;width:13px;height:13px;border-radius:50%;background:radial-gradient(circle at 55% 45%,#555 0,#222 30%,#111 60%,#222 100%);box-shadow:0 0 0 1px #f4f4f4;"></div><div style="position:absolute;left:8.6px;top:366.6px;width:181.8px;height:35.4px;background:linear-gradient(90deg,#b4b4b4,#c6c6c6 22%,#d2d2d2 50%,#c6c6c6 78%,#b4b4b4);border-radius:0 0 27px 27px / 0 0 26px 26px;"></div><div style="position:absolute;left:8.6px;top:366.6px;width:181.8px;height:35.4px;background:linear-gradient(rgba(255,255,255,.7),rgba(255,255,255,0) 7%,rgba(255,255,255,0) 72%,rgba(255,255,255,.55));border-radius:0 0 27px 27px / 0 0 26px 26px;"></div><div style="position:absolute;left:77px;top:374.6px;width:45.4px;height:18.6px;border-radius:8px;border:1.2px solid #8c8c8c;box-sizing:border-box;background:linear-gradient(#cfcfcf,#e2e2e2);box-shadow:inset 0 0 0 1px #f0f0f0;"></div><svg style="position:absolute;left:36px;top:378px;" width="14" height="10" viewBox="0 0 14 10"><rect x="0.5" y="2.8" width="9.4" height="6.4" rx="1" fill="none" stroke="#e2e2e2" stroke-width="0.9"/><path d="M2.6 2.6 V1.6 C2.6 1 3 0.6 3.6 0.6 H12 C12.6 0.6 13 1 13 1.6 V6 C13 6.6 12.6 7 12 7 H10.6" fill="none" stroke="#e2e2e2" stroke-width="0.9"/></svg><svg style="position:absolute;left:150px;top:378.4px;" width="13" height="9" viewBox="0 0 13 9"><path d="M3.4 0.6 L0.8 2.8 L3.4 5 M0.8 2.8 H9 C11 2.8 12.2 4 12.2 5.6 C12.2 7.2 11 8.4 9 8.4 H1.4" fill="none" stroke="#e2e2e2" stroke-width="1"/></svg><div style="position:absolute;left:198px;top:132px;width:1.6px;height:24px;background:#777;border-radius:1px;"></div><div style="position:absolute;left:-0.6px;top:76px;width:1.4px;height:14px;background:#888;border-radius:1px;"></div><div style="position:absolute;left:-0.6px;top:100px;width:1.4px;height:14px;background:#888;border-radius:1px;"></div><div style="position:absolute;left:6.8px;top:40.8px;width:185.4px;height:326px;background:#fff;overflow:hidden"><svg style="position:absolute;left:0px;top:0px;opacity:1.0;" width="185" height="12" viewBox="0 0 185 12"><circle cx="3.6" cy="5.3" r="1.4" fill="#222"/><circle cx="7.2" cy="5.3" r="1.4" fill="#222"/><circle cx="10.8" cy="5.3" r="1.4" fill="#222"/><circle cx="14.4" cy="5.3" r="1.1" fill="none" stroke="#222" stroke-width="0.5"/><circle cx="18.0" cy="5.3" r="1.1" fill="none" stroke="#222" stroke-width="0.5"/><path d="M23.3 3.9 Q26.8 0.9 30.3 3.9 L29.3 5 Q26.8 2.9 24.3 5 Z M25.1 5.8 Q26.8 4.4 28.5 5.8 L26.8 7.9 Z" fill="#222"/><path d="M148 3.8 L151 6.6 L149.5 8 L149.5 2 L151 3.6 L148 6.4" fill="none" stroke="#222" stroke-width="0.4" opacity="0.5"/><rect x="173" y="3.2" width="11" height="4.4" fill="#222"/></svg><div style="position:absolute;left:-56.5px;width:300px;text-align:center;top:2.2px;font-size:5.6px;line-height:6.7px;color:#222;white-space:nowrap;opacity:1.0;">12:00</div><div style="position:absolute;left:-129.5px;width:300px;text-align:right;top:2.2px;font-size:5.4px;line-height:6.5px;color:#222;white-space:nowrap;opacity:1.0;">100%</div><svg style="position:absolute;left:7px;top:19px;" width="9" height="9" viewBox="0 0 9 9"><path d="M0.6 0.6 L8.2 8.2 M8.2 0.6 L0.6 8.2" stroke="#4054c4" stroke-width="1.1" fill="none"/></svg><svg style="position:absolute;left:170.5px;top:19.3px;" width="10" height="8" viewBox="0 0 10 8"><path d="M0 1 H9.4 M0 4 H9.4 M0 7 H9.4" stroke="#4054c4" stroke-width="1.3" fill="none"/></svg><div style="position:absolute;left:-56.5px;width:300px;text-align:center;top:18.5px;font-size:9.2px;line-height:11.0px;color:#b4bccf;white-space:nowrap;letter-spacing:0px;">Sign Up</div><div style="position:absolute;left:73.4px;top:45.6px;width:43.4px;height:43.4px;border-radius:50%;border:1px solid #efefef;box-sizing:border-box;"></div><svg style="position:absolute;left:83.8px;top:54.4px;" width="23" height="26" viewBox="0 0 23 26"><circle cx="11.5" cy="6.8" r="6.3" fill="#4458c8"/><path d="M0 21 C0 14 4 12.4 7 12 C9.6 14.4 13.4 14.4 16 12 C19 12.4 23 14 23 21 C23 24 22 25.4 19.6 25.4 H3.4 C1 25.4 0 24 0 21 Z" fill="#4458c8"/></svg><div style="position:absolute;left:0px;top:104px;width:185px;height:26px;background:#f6f6f6;"></div><div style="position:absolute;left:30px;text-align:left;top:111.7px;font-size:8.8px;line-height:10.6px;color:#ffffff;white-space:nowrap;letter-spacing:-0.3px;">Mobile Number</div><div style="position:absolute;left:13.849999999999998px;top:96.25px;width:40.300000000000004px;height:40.300000000000004px;border-radius:50%;background:rgba(200,200,204,0.42);"></div><div style="position:absolute;left:21px;top:103.4px;width:26px;height:26px;border-radius:50%;background:rgba(170,170,176,0.62);"></div><div style="position:absolute;left:26.4px;top:112.6px;width:0.9px;height:8.6px;background:#4458c8;"></div><div style="position:absolute;left:0px;top:130px;width:185px;height:1px;background:#f2f2f2;"></div><div style="position:absolute;left:0px;top:155.4px;width:185px;height:1px;background:#f2f2f2;"></div><div style="position:absolute;left:0px;top:181px;width:185px;height:1px;background:#f2f2f2;"></div><div style="position:absolute;left:0px;top:206.4px;width:185px;height:1px;background:#f2f2f2;"></div><div style="position:absolute;left:0px;top:232px;width:185px;height:1px;background:#f2f2f2;"></div><div style="position:absolute;left:29px;text-align:left;top:137.1px;font-size:8.8px;line-height:10.6px;color:#a4abbf;white-space:nowrap;letter-spacing:-0.3px;">Name</div><div style="position:absolute;left:29px;text-align:left;top:162.5px;font-size:8.8px;line-height:10.6px;color:#a4abbf;white-space:nowrap;letter-spacing:-0.3px;">Surname</div><div style="position:absolute;left:29px;text-align:left;top:187.9px;font-size:8.8px;line-height:10.6px;color:#a4abbf;white-space:nowrap;letter-spacing:-0.3px;">Email Address</div><div style="position:absolute;left:29px;text-align:left;top:213.3px;font-size:8.8px;line-height:10.6px;color:#a4abbf;white-space:nowrap;letter-spacing:-0.3px;">Password <span style="font-size:4.2px;letter-spacing:-0.1px">(at least 8 characters long)</span></div><div style="position:absolute;left:16.2px;top:242.6px;width:154.4px;height:32.4px;background:#3b3b3b;"></div><div style="position:absolute;left:-57.5px;width:300px;text-align:center;top:251.5px;font-size:11.5px;line-height:13.8px;color:#d0d0d0;white-space:nowrap;letter-spacing:-0.35px;">Camera Upload</div><div style="position:absolute;left:16.2px;top:278.6px;width:154.4px;height:32.6px;background:#3b3b3b;"></div><div style="position:absolute;left:-57.5px;width:300px;text-align:center;top:287.5px;font-size:11.5px;line-height:13.8px;color:#d0d0d0;white-space:nowrap;letter-spacing:-0.35px;">Sign Up</div></div></div><div style="position:absolute;left:1104.5px;top:143.6px;width:199px;height:405.6px;background:linear-gradient(#a2a2a2,#949494 40%,#8a8a8a 85%,#707070);border-radius:35px 35px 31px 31px / 33px 33px 28px 28px;"><div style="position:absolute;left:2.1px;top:1.6px;width:194.8px;height:402.20000000000005px;background:linear-gradient(#6a6a6a,#4c4c4c 12%,#4c4c4c 88%,#3c3c3c);border-radius:32.8px 32.8px 28.8px 28.8px / 30.8px 30.8px 25.8px 25.8px;"></div><div style="position:absolute;left:3.6px;top:2.8px;width:191.8px;height:399.8px;background:linear-gradient(90deg,#d6d6d6,#f2f2f2 2.2%,#ffffff 3.4%,#ffffff 96.6%,#f2f2f2 97.8%,#d6d6d6);border-radius:31.3px 31.3px 27.3px 27.3px / 29.3px 29.3px 24.3px 24.3px;"></div><div style="position:absolute;left:5.6px;top:4.6px;width:187.8px;height:37.4px;background:linear-gradient(90deg,rgba(255,255,255,.18),rgba(255,255,255,0) 30%,rgba(0,0,0,0) 62%,rgba(0,0,0,.09)),linear-gradient(#dadada,#d2d2d2 25%,#cacaca 60%,#c2c2c2 90%,#cecece);border-radius:29px 29px 0 0 / 27px 27px 0 0;"></div><div style="position:absolute;left:3.6px;top:2.8px;width:191.8px;height:39px;background:linear-gradient(90deg,rgba(255,255,255,.5),rgba(255,255,255,0) 9%,rgba(255,255,255,0) 91%,rgba(255,255,255,.6));border-radius:31px 31px 0 0 / 29px 29px 0 0;"></div><div style="position:absolute;left:53.2px;top:12.6px;width:6.4px;height:6.4px;border-radius:50%;background:#3a3a3a;box-shadow:0 0 0 0.8px rgba(255,255,255,.55);"></div><div style="position:absolute;left:62.4px;top:12.6px;width:6.4px;height:6.4px;border-radius:50%;background:#3a3a3a;box-shadow:0 0 0 0.8px rgba(255,255,255,.55);"></div><div style="position:absolute;left:78.6px;top:12.4px;width:40.6px;height:6.4px;border-radius:3.4px;background:#e4e4e4;border:1px solid #6a6a6a;box-sizing:border-box;background-image:repeating-linear-gradient(90deg,#777 0,#777 0.9px,transparent 0.9px,transparent 2px);background-size:34px 1.6px;background-position:3px 1.4px;background-repeat:no-repeat;"></div><div style="position:absolute;left:144.6px;top:11.6px;width:13px;height:13px;border-radius:50%;background:radial-gradient(circle at 55% 45%,#555 0,#222 30%,#111 60%,#222 100%);box-shadow:0 0 0 1px #f4f4f4;"></div><div style="position:absolute;left:8.6px;top:366.6px;width:181.8px;height:35.4px;background:linear-gradient(90deg,#b4b4b4,#c6c6c6 22%,#d2d2d2 50%,#c6c6c6 78%,#b4b4b4);border-radius:0 0 27px 27px / 0 0 26px 26px;"></div><div style="position:absolute;left:8.6px;top:366.6px;width:181.8px;height:35.4px;background:linear-gradient(rgba(255,255,255,.7),rgba(255,255,255,0) 7%,rgba(255,255,255,0) 72%,rgba(255,255,255,.55));border-radius:0 0 27px 27px / 0 0 26px 26px;"></div><div style="position:absolute;left:77px;top:374.6px;width:45.4px;height:18.6px;border-radius:8px;border:1.2px solid #8c8c8c;box-sizing:border-box;background:linear-gradient(#cfcfcf,#e2e2e2);box-shadow:inset 0 0 0 1px #f0f0f0;"></div><svg style="position:absolute;left:36px;top:378px;" width="14" height="10" viewBox="0 0 14 10"><rect x="0.5" y="2.8" width="9.4" height="6.4" rx="1" fill="none" stroke="#e2e2e2" stroke-width="0.9"/><path d="M2.6 2.6 V1.6 C2.6 1 3 0.6 3.6 0.6 H12 C12.6 0.6 13 1 13 1.6 V6 C13 6.6 12.6 7 12 7 H10.6" fill="none" stroke="#e2e2e2" stroke-width="0.9"/></svg><svg style="position:absolute;left:150px;top:378.4px;" width="13" height="9" viewBox="0 0 13 9"><path d="M3.4 0.6 L0.8 2.8 L3.4 5 M0.8 2.8 H9 C11 2.8 12.2 4 12.2 5.6 C12.2 7.2 11 8.4 9 8.4 H1.4" fill="none" stroke="#e2e2e2" stroke-width="1"/></svg><div style="position:absolute;left:198px;top:132px;width:1.6px;height:24px;background:#777;border-radius:1px;"></div><div style="position:absolute;left:-0.6px;top:76px;width:1.4px;height:14px;background:#888;border-radius:1px;"></div><div style="position:absolute;left:-0.6px;top:100px;width:1.4px;height:14px;background:#888;border-radius:1px;"></div><div style="position:absolute;left:6.8px;top:40.8px;width:185.4px;height:326px;background:#fff;overflow:hidden"><svg style="position:absolute;left:0px;top:0px;opacity:1.0;" width="185" height="12" viewBox="0 0 185 12"><circle cx="3.6" cy="5.3" r="1.4" fill="#222"/><circle cx="7.2" cy="5.3" r="1.4" fill="#222"/><circle cx="10.8" cy="5.3" r="1.4" fill="#222"/><circle cx="14.4" cy="5.3" r="1.1" fill="none" stroke="#222" stroke-width="0.5"/><circle cx="18.0" cy="5.3" r="1.1" fill="none" stroke="#222" stroke-width="0.5"/><path d="M23.3 3.9 Q26.8 0.9 30.3 3.9 L29.3 5 Q26.8 2.9 24.3 5 Z M25.1 5.8 Q26.8 4.4 28.5 5.8 L26.8 7.9 Z" fill="#222"/><path d="M148 3.8 L151 6.6 L149.5 8 L149.5 2 L151 3.6 L148 6.4" fill="none" stroke="#222" stroke-width="0.4" opacity="0.5"/><rect x="173" y="3.2" width="11" height="4.4" fill="#222"/></svg><div style="position:absolute;left:-56.5px;width:300px;text-align:center;top:2.2px;font-size:5.6px;line-height:6.7px;color:#222;white-space:nowrap;opacity:1.0;">12:00</div><div style="position:absolute;left:-129.5px;width:300px;text-align:right;top:2.2px;font-size:5.4px;line-height:6.5px;color:#222;white-space:nowrap;opacity:1.0;">100%</div><svg style="position:absolute;left:7px;top:19px;" width="9" height="9" viewBox="0 0 9 9"><path d="M0.6 0.6 L8.2 8.2 M8.2 0.6 L0.6 8.2" stroke="#4054c4" stroke-width="1.1" fill="none"/></svg><svg style="position:absolute;left:170.5px;top:19.3px;" width="10" height="8" viewBox="0 0 10 8"><path d="M0 1 H9.4 M0 4 H9.4 M0 7 H9.4" stroke="#4054c4" stroke-width="1.3" fill="none"/></svg><div style="position:absolute;left:-56.5px;width:300px;text-align:center;top:18.5px;font-size:9.2px;line-height:11.0px;color:#b4bccf;white-space:nowrap;letter-spacing:-0.3px;">Profile</div><svg style="position:absolute;left:68.28681318681319px;top:40.66813186813188px;" width="51.982417582417575" height="51.982417582417575" viewBox="0 0 108 108"><circle cx="55.5" cy="54.5" r="45" fill="#fff" stroke="#efefef" stroke-width="1.6"/><path d="M56 19 C64 20 70 26 74 31 C78 36 80 40 79 46 C78 50 76 54 75 58 C74 64 74 70 72 74 C68 80 64 84 59 87 L58 84 C62 78 66 72 70 64 C72 58 74 52 74 46 C74 40 72 36 69 33 C68 31 69 29 68 27 C64 23 60 21 56 19 Z" fill="#0a0a0a"/><path d="M51 37 C55 34 62 33 67 35 C69 37 70 39 70 41 C66 38 60 37 53 39 Z" fill="#0a0a0a"/><path d="M53 43 C56 41 60 41 63 44 C64 46 64 47 63 48 C60 48 58 47 58 45 C56 43 54 44 53 43 Z" fill="#0a0a0a"/><path d="M34 40 C36 38 39 39 41 41 L35 41.4 Z" fill="#0a0a0a"/><path d="M35 47 C37 44 41 44 44 47 C44 49 43 50 42 49 C41 47 38 47 37 50 L35 50 Z" fill="#0a0a0a"/><path d="M42 60 C45 61 47 58 50 59 C51 60 52 61 51 62 C48 62 45 63 42 61 Z" fill="#0a0a0a"/><path d="M43 70 C46 65 54 66 58 69 C60 72 59 75 61 75 C64 72 68 66 72 62 L73 72 C70 78 64 84 59 87 L56 83 L54 89 C50 88 46 88 44 86 C43 80 42 75 43 70 Z" fill="#0a0a0a"/><path d="M45 71 C48 68 53 69 55 72 C53 75 49 77 45 75 Z" fill="#fff"/><path d="M56 78 L62 81" stroke="#ddd" stroke-width="1.6"/><path d="M73 75 C74 80 77 84 80 86" stroke="#0a0a0a" stroke-width="0.9" fill="none"/><circle cx="82" cy="49.4" r="1.4" fill="#0a0a0a"/></svg><div style="position:absolute;left:0px;top:104px;width:185px;height:1px;background:#f2f2f2;"></div><div style="position:absolute;left:0px;top:129.4px;width:185px;height:26px;background:#f6f6f6;"></div><div style="position:absolute;left:0px;top:181px;width:185px;height:1px;background:#f2f2f2;"></div><div style="position:absolute;left:0px;top:206.4px;width:185px;height:1px;background:#f2f2f2;"></div><div style="position:absolute;left:0px;top:232px;width:185px;height:1px;background:#f2f2f2;"></div><div style="position:absolute;left:29px;text-align:left;top:111.7px;font-size:8.8px;line-height:10.6px;color:#a4abbf;white-space:nowrap;letter-spacing:-0.3px;"><span style="letter-spacing:0.45px">+27 74 106 9185</span></div><div style="position:absolute;left:29px;text-align:left;top:162.5px;font-size:8.8px;line-height:10.6px;color:#a4abbf;white-space:nowrap;letter-spacing:-0.3px;">Legge</div><div style="position:absolute;left:29px;text-align:left;top:187.9px;font-size:8.8px;line-height:10.6px;color:#a4abbf;white-space:nowrap;letter-spacing:-0.3px;">rvlegge79@gmail.com</div><div style="position:absolute;left:29px;text-align:left;top:213.3px;font-size:8.8px;line-height:10.6px;color:#a4abbf;white-space:nowrap;letter-spacing:-0.3px;"><span style="letter-spacing:0.2px;position:relative;top:1.5px">********</span></div><div style="position:absolute;left:29px;text-align:left;top:137.1px;font-size:8.8px;line-height:10.6px;color:#5568d0;white-space:nowrap;letter-spacing:-0.3px;">Richard</div><div style="position:absolute;left:24.4px;top:138px;width:0.9px;height:8.6px;background:#4458c8;"></div><svg style="position:absolute;left:19px;top:114.0px;" width="6" height="6" viewBox="0 0 6 6"><path d="M0.4 5.6 L0.9 4 L4.2 0.7 L5.3 1.8 L2 5.1 Z" fill="#d8d8d8"/></svg><svg style="position:absolute;left:19px;top:164.8px;" width="6" height="6" viewBox="0 0 6 6"><path d="M0.4 5.6 L0.9 4 L4.2 0.7 L5.3 1.8 L2 5.1 Z" fill="#d8d8d8"/></svg><svg style="position:absolute;left:19px;top:190.2px;" width="6" height="6" viewBox="0 0 6 6"><path d="M0.4 5.6 L0.9 4 L4.2 0.7 L5.3 1.8 L2 5.1 Z" fill="#d8d8d8"/></svg><svg style="position:absolute;left:19px;top:215.6px;" width="6" height="6" viewBox="0 0 6 6"><path d="M0.4 5.6 L0.9 4 L4.2 0.7 L5.3 1.8 L2 5.1 Z" fill="#d8d8d8"/></svg><svg style="position:absolute;left:157px;top:215.4px;" width="9" height="6" viewBox="0 0 9 6"><path d="M0.4 3 C2.4 0.2 6.6 0.2 8.6 3 C6.6 5.8 2.4 5.8 0.4 3 Z" fill="none" stroke="#d0d0d4" stroke-width="0.6"/><circle cx="4.5" cy="3" r="1.2" fill="#d0d0d4"/></svg><div style="position:absolute;left:16.2px;top:242.6px;width:154.4px;height:32.4px;background:linear-gradient(100deg,#122a44 0%,#1b3662 30%,#2f479e 62%,#4457c6 100%);"></div><div style="position:absolute;left:92.675px;top:226.67499999999998px;width:41.85px;height:41.85px;border-radius:50%;background:rgba(200,204,222,0.22);"></div><div style="position:absolute;left:100.1px;top:234.1px;width:27.0px;height:27.0px;border-radius:50%;background:rgba(20,28,96,0.5);"></div><div style="position:absolute;left:-57.5px;width:300px;text-align:center;top:251.5px;font-size:11.5px;line-height:13.8px;color:#a9b2d8;white-space:nowrap;letter-spacing:-0.35px;">Update</div><div style="position:absolute;left:16.2px;top:278.6px;width:154.4px;height:32.6px;background:#3b3b3b;"></div><div style="position:absolute;left:-57.5px;width:300px;text-align:center;top:287.5px;font-size:11.5px;line-height:13.8px;color:#d0d0d0;white-space:nowrap;letter-spacing:-0.35px;">Cancel</div></div></div><div style="position:absolute;left:281.2px;top:612.7px;width:199px;height:405.6px;background:linear-gradient(#a2a2a2,#949494 40%,#8a8a8a 85%,#707070);border-radius:35px 35px 31px 31px / 33px 33px 28px 28px;"><div style="position:absolute;left:2.1px;top:1.6px;width:194.8px;height:402.20000000000005px;background:linear-gradient(#6a6a6a,#4c4c4c 12%,#4c4c4c 88%,#3c3c3c);border-radius:32.8px 32.8px 28.8px 28.8px / 30.8px 30.8px 25.8px 25.8px;"></div><div style="position:absolute;left:3.6px;top:2.8px;width:191.8px;height:399.8px;background:linear-gradient(90deg,#d6d6d6,#f2f2f2 2.2%,#ffffff 3.4%,#ffffff 96.6%,#f2f2f2 97.8%,#d6d6d6);border-radius:31.3px 31.3px 27.3px 27.3px / 29.3px 29.3px 24.3px 24.3px;"></div><div style="position:absolute;left:5.6px;top:4.6px;width:187.8px;height:37.4px;background:linear-gradient(90deg,rgba(255,255,255,.18),rgba(255,255,255,0) 30%,rgba(0,0,0,0) 62%,rgba(0,0,0,.09)),linear-gradient(#dadada,#d2d2d2 25%,#cacaca 60%,#c2c2c2 90%,#cecece);border-radius:29px 29px 0 0 / 27px 27px 0 0;"></div><div style="position:absolute;left:3.6px;top:2.8px;width:191.8px;height:39px;background:linear-gradient(90deg,rgba(255,255,255,.5),rgba(255,255,255,0) 9%,rgba(255,255,255,0) 91%,rgba(255,255,255,.6));border-radius:31px 31px 0 0 / 29px 29px 0 0;"></div><div style="position:absolute;left:53.2px;top:12.6px;width:6.4px;height:6.4px;border-radius:50%;background:#3a3a3a;box-shadow:0 0 0 0.8px rgba(255,255,255,.55);"></div><div style="position:absolute;left:62.4px;top:12.6px;width:6.4px;height:6.4px;border-radius:50%;background:#3a3a3a;box-shadow:0 0 0 0.8px rgba(255,255,255,.55);"></div><div style="position:absolute;left:78.6px;top:12.4px;width:40.6px;height:6.4px;border-radius:3.4px;background:#e4e4e4;border:1px solid #6a6a6a;box-sizing:border-box;background-image:repeating-linear-gradient(90deg,#777 0,#777 0.9px,transparent 0.9px,transparent 2px);background-size:34px 1.6px;background-position:3px 1.4px;background-repeat:no-repeat;"></div><div style="position:absolute;left:144.6px;top:11.6px;width:13px;height:13px;border-radius:50%;background:radial-gradient(circle at 55% 45%,#555 0,#222 30%,#111 60%,#222 100%);box-shadow:0 0 0 1px #f4f4f4;"></div><div style="position:absolute;left:8.6px;top:366.6px;width:181.8px;height:35.4px;background:linear-gradient(90deg,#b4b4b4,#c6c6c6 22%,#d2d2d2 50%,#c6c6c6 78%,#b4b4b4);border-radius:0 0 27px 27px / 0 0 26px 26px;"></div><div style="position:absolute;left:8.6px;top:366.6px;width:181.8px;height:35.4px;background:linear-gradient(rgba(255,255,255,.7),rgba(255,255,255,0) 7%,rgba(255,255,255,0) 72%,rgba(255,255,255,.55));border-radius:0 0 27px 27px / 0 0 26px 26px;"></div><div style="position:absolute;left:77px;top:374.6px;width:45.4px;height:18.6px;border-radius:8px;border:1.2px solid #8c8c8c;box-sizing:border-box;background:linear-gradient(#cfcfcf,#e2e2e2);box-shadow:inset 0 0 0 1px #f0f0f0;"></div><svg style="position:absolute;left:36px;top:378px;" width="14" height="10" viewBox="0 0 14 10"><rect x="0.5" y="2.8" width="9.4" height="6.4" rx="1" fill="none" stroke="#e2e2e2" stroke-width="0.9"/><path d="M2.6 2.6 V1.6 C2.6 1 3 0.6 3.6 0.6 H12 C12.6 0.6 13 1 13 1.6 V6 C13 6.6 12.6 7 12 7 H10.6" fill="none" stroke="#e2e2e2" stroke-width="0.9"/></svg><svg style="position:absolute;left:150px;top:378.4px;" width="13" height="9" viewBox="0 0 13 9"><path d="M3.4 0.6 L0.8 2.8 L3.4 5 M0.8 2.8 H9 C11 2.8 12.2 4 12.2 5.6 C12.2 7.2 11 8.4 9 8.4 H1.4" fill="none" stroke="#e2e2e2" stroke-width="1"/></svg><div style="position:absolute;left:198px;top:132px;width:1.6px;height:24px;background:#777;border-radius:1px;"></div><div style="position:absolute;left:-0.6px;top:76px;width:1.4px;height:14px;background:#888;border-radius:1px;"></div><div style="position:absolute;left:-0.6px;top:100px;width:1.4px;height:14px;background:#888;border-radius:1px;"></div><div style="position:absolute;left:6.8px;top:40.8px;width:185.4px;height:326px;background:#fff;overflow:hidden"><div style="position:absolute;left:0px;top:0px;width:185px;height:326px;background:linear-gradient(100deg,#112c42 0%,#1b3762 25%,#314da4 62%,#4559c8 92%);"></div><svg style="position:absolute;left:0px;top:150px;" width="185" height="176" viewBox="0 0 185 176"><path d="M60 0 C70 60 100 90 150 96 M0 70 C60 90 130 50 185 20 M20 80 C70 110 110 70 140 92" fill="none" stroke="#16264e" stroke-width="1.2" opacity="0.28"/></svg><svg style="position:absolute;left:29px;top:226px;" width="66" height="62" viewBox="0 0 136 128"><path d="M10 40 C30 30 60 30 80 28 C88 14 96 4 106 0 C112 2 114 8 116 16 C122 22 124 28 120 32 C114 32 108 28 102 30 C100 44 92 56 80 64 C70 80 56 100 40 124 L34 122 C40 100 44 84 40 76 C34 84 28 96 22 108 L16 106 C18 90 22 74 26 62 C18 58 12 50 10 40 Z" fill="#14244c" opacity="0.42"/><path d="M30 30 L24 70" stroke="#3350a0" stroke-width="2.4" opacity="0.5"/><path d="M37 30 L31 70" stroke="#3350a0" stroke-width="2.4" opacity="0.5"/><path d="M44 30 L38 70" stroke="#3350a0" stroke-width="2.4" opacity="0.5"/><path d="M51 30 L45 70" stroke="#3350a0" stroke-width="2.4" opacity="0.5"/><path d="M58 30 L52 70" stroke="#3350a0" stroke-width="2.4" opacity="0.5"/><path d="M65 30 L59 70" stroke="#3350a0" stroke-width="2.4" opacity="0.5"/><path d="M72 30 L66 70" stroke="#3350a0" stroke-width="2.4" opacity="0.5"/><path d="M79 30 L73 70" stroke="#3350a0" stroke-width="2.4" opacity="0.5"/><path d="M86 30 L80 70" stroke="#3350a0" stroke-width="2.4" opacity="0.5"/><path d="M93 30 L87 70" stroke="#3350a0" stroke-width="2.4" opacity="0.5"/></svg><svg style="position:absolute;left:0px;top:0px;opacity:1.0;" width="185" height="12" viewBox="0 0 185 12"><circle cx="3.6" cy="5.3" r="1.4" fill="#fff"/><circle cx="7.2" cy="5.3" r="1.4" fill="#fff"/><circle cx="10.8" cy="5.3" r="1.4" fill="#fff"/><circle cx="14.4" cy="5.3" r="1.1" fill="none" stroke="#fff" stroke-width="0.5"/><circle cx="18.0" cy="5.3" r="1.1" fill="none" stroke="#fff" stroke-width="0.5"/><path d="M23.3 3.9 Q26.8 0.9 30.3 3.9 L29.3 5 Q26.8 2.9 24.3 5 Z M25.1 5.8 Q26.8 4.4 28.5 5.8 L26.8 7.9 Z" fill="#fff"/><path d="M148 3.8 L151 6.6 L149.5 8 L149.5 2 L151 3.6 L148 6.4" fill="none" stroke="#fff" stroke-width="0.4" opacity="0.5"/><rect x="173" y="3.2" width="11" height="4.4" fill="#fff"/></svg><div style="position:absolute;left:-56.5px;width:300px;text-align:center;top:2.2px;font-size:5.6px;line-height:6.7px;color:#fff;white-space:nowrap;opacity:1.0;">12:00</div><div style="position:absolute;left:-129.5px;width:300px;text-align:right;top:2.2px;font-size:5.4px;line-height:6.5px;color:#fff;white-space:nowrap;opacity:1.0;">100%</div><svg style="position:absolute;left:7px;top:19px;" width="9" height="9" viewBox="0 0 9 9"><path d="M0.6 0.6 L8.2 8.2 M8.2 0.6 L0.6 8.2" stroke="#fff" stroke-width="1.1" fill="none"/></svg><svg style="position:absolute;left:170.5px;top:19.3px;" width="10" height="8" viewBox="0 0 10 8"><path d="M0 1 H9.4 M0 4 H9.4 M0 7 H9.4" stroke="#fff" stroke-width="1.3" fill="none"/></svg><div style="position:absolute;left:-56.5px;width:300px;text-align:center;top:18.5px;font-size:9.2px;line-height:11.0px;color:#fff;white-space:nowrap;letter-spacing:-0.3px;"></div><div style="position:absolute;left:19px;text-align:left;top:51.8px;font-size:10.4px;line-height:12.5px;color:#c4cde8;white-space:nowrap;letter-spacing:-0.3px;">Inbox</div><div style="position:absolute;left:52px;top:50.6px;width:16.4px;height:14px;background:#fff;border-radius:7px;"></div><div style="position:absolute;left:-89.8px;width:300px;text-align:center;top:53.8px;font-size:6.6px;line-height:7.9px;color:#3a50b8;white-space:nowrap;font-weight:bold;letter-spacing:-0.2px;">11</div><div style="position:absolute;left:20px;top:74.6px;width:36.6px;height:1.6px;background:#3d7fd6;"></div><svg style="position:absolute;left:26.400000000000002px;top:99.39999999999999px;" width="12.4" height="12.4" viewBox="0 0 22 22"><path d="M10 2.2 A9.6 9.6 0 1 0 19.6 11.8 L10 11.8 Z" fill="#fff"/><path d="M11.6 0.6 A9.6 9.6 0 0 1 21.2 10.2 L11.6 10.2 Z" fill="#fff"/><path d="M10 11.8 L17.2 18.6" stroke="#fff" stroke-width="1.1" opacity="0.9"/></svg><div style="position:absolute;left:48.3px;text-align:left;top:99.1px;font-size:10.8px;line-height:13.0px;color:#c4cde8;white-space:nowrap;letter-spacing:-0.36px;">Account Balance</div><div style="position:absolute;left:18.279999999999998px;top:126.78px;width:38.440000000000005px;height:38.440000000000005px;border-radius:50%;background:rgba(120,140,190,0.2);"></div><div style="position:absolute;left:25.1px;top:133.6px;width:24.8px;height:24.8px;border-radius:50%;background:rgba(14,28,76,0.85);"></div><svg style="position:absolute;left:29.57608695652174px;top:135.4px;" width="9.517241379310345" height="12.4" viewBox="0 0 18.4 22"><rect x="0.9" y="0.9" width="12.2" height="20.6" rx="1.7" fill="none" stroke="#e8ecf8" stroke-width="1.7"/><rect x="0.9" y="18.2" width="12.2" height="3.3" fill="#e8ecf8"/><path d="M1.8 17.6 L1.8 10.8 C5 9.4 8 6.2 9.4 1.8 L14.6 0.8 C16.6 3.2 18.2 6.4 18.2 9.4 C15.6 11 13.4 11.6 11.6 13 C9.4 14.8 6 17.4 1.8 17.4 Z" fill="#e8ecf8"/><path d="M13.4 2.4 C15 4.6 16.2 7.2 16.4 9.6 M15.2 1.6 C16.6 3.6 17.6 6.4 17.6 9" stroke="#fff" stroke-width="0.45" fill="none" opacity="0.75"/><circle cx="7" cy="19.9" r="0.8" fill="#fff"/></svg><div style="position:absolute;left:48.3px;text-align:left;top:135.3px;font-size:10.8px;line-height:13.0px;color:#ffffff;white-space:nowrap;letter-spacing:-0.42px;text-shadow:0 0 0.6px #fff;">Purchase Airtime</div><svg style="position:absolute;left:26.4px;top:172.4px;" width="11.2" height="11.2" viewBox="0 0 12 12"><g transform="translate(6,6)"><rect x="-1.5" y="-6" width="3" height="12" rx="0.6" transform="rotate(0)" fill="#fff"/><rect x="-1.5" y="-6" width="3" height="12" rx="0.6" transform="rotate(45)" fill="#fff"/><rect x="-1.5" y="-6" width="3" height="12" rx="0.6" transform="rotate(90)" fill="#fff"/><rect x="-1.5" y="-6" width="3" height="12" rx="0.6" transform="rotate(135)" fill="#fff"/><circle r="4.2" fill="#fff"/><circle r="1.7" fill="#25427c"/></g></svg><div style="position:absolute;left:48.3px;text-align:left;top:171.3px;font-size:10.8px;line-height:13.0px;color:#c4cde8;white-space:nowrap;letter-spacing:-0.36px;">Settings</div><svg style="position:absolute;left:26.400000000000002px;top:209.5px;" width="12.4" height="10.6" viewBox="0 0 23 19"><path d="M8.4 1.4 H4.2 C2.4 1.4 1.4 2.4 1.4 4.2 V14.8 C1.4 16.6 2.4 17.6 4.2 17.6 H8.4" fill="none" stroke="#fff" stroke-width="2.4" stroke-linecap="round"/><path d="M6.4 6 H13.4 V1.4 L22.6 9.5 L13.4 17.6 V13 H6.4 Z" fill="#fff"/></svg><div style="position:absolute;left:48.3px;text-align:left;top:207.7px;font-size:10.8px;line-height:13.0px;color:#c4cde8;white-space:nowrap;letter-spacing:-0.36px;">Logout</div><div style="position:absolute;left:17.4px;top:284.4px;width:25.8px;height:25.8px;border-radius:50%;box-shadow:0 0 4px rgba(0,0,20,0.6);"></div><svg style="position:absolute;left:15.662637362637364px;top:282.9263736263736px;" width="28.483516483516485" height="28.483516483516485" viewBox="0 0 108 108"><circle cx="55.5" cy="54.5" r="45" fill="#fff" stroke="#fff" stroke-width="1.6"/><path d="M56 19 C64 20 70 26 74 31 C78 36 80 40 79 46 C78 50 76 54 75 58 C74 64 74 70 72 74 C68 80 64 84 59 87 L58 84 C62 78 66 72 70 64 C72 58 74 52 74 46 C74 40 72 36 69 33 C68 31 69 29 68 27 C64 23 60 21 56 19 Z" fill="#0a0a0a"/><path d="M51 37 C55 34 62 33 67 35 C69 37 70 39 70 41 C66 38 60 37 53 39 Z" fill="#0a0a0a"/><path d="M53 43 C56 41 60 41 63 44 C64 46 64 47 63 48 C60 48 58 47 58 45 C56 43 54 44 53 43 Z" fill="#0a0a0a"/><path d="M34 40 C36 38 39 39 41 41 L35 41.4 Z" fill="#0a0a0a"/><path d="M35 47 C37 44 41 44 44 47 C44 49 43 50 42 49 C41 47 38 47 37 50 L35 50 Z" fill="#0a0a0a"/><path d="M42 60 C45 61 47 58 50 59 C51 60 52 61 51 62 C48 62 45 63 42 61 Z" fill="#0a0a0a"/><path d="M43 70 C46 65 54 66 58 69 C60 72 59 75 61 75 C64 72 68 66 72 62 L73 72 C70 78 64 84 59 87 L56 83 L54 89 C50 88 46 88 44 86 C43 80 42 75 43 70 Z" fill="#0a0a0a"/><path d="M45 71 C48 68 53 69 55 72 C53 75 49 77 45 75 Z" fill="#fff"/><path d="M56 78 L62 81" stroke="#ddd" stroke-width="1.6"/><path d="M73 75 C74 80 77 84 80 86" stroke="#0a0a0a" stroke-width="0.9" fill="none"/><circle cx="82" cy="49.4" r="1.4" fill="#0a0a0a"/></svg><div style="position:absolute;left:51px;text-align:left;top:288.1px;font-size:9.9px;line-height:11.9px;color:#c4cde8;white-space:nowrap;letter-spacing:-0.45px;">Richard Legge</div><div style="position:absolute;left:51px;text-align:left;top:301.9px;font-size:6.5px;line-height:7.8px;color:#c4cde8;white-space:nowrap;letter-spacing:-0.2px;">Sundowner, Johannesburg</div><svg style="position:absolute;left:152px;top:290.6px;" width="13" height="13" viewBox="0 0 13 13"><path d="M0.6 12.4 L1.6 8.8 L8.6 1.8 L11.2 4.4 L4.2 11.4 Z M9.4 1 L10.2 0.3 C10.8 -0.1 11.4 0 11.9 0.5 L12.5 1.1 C13 1.6 13.1 2.2 12.7 2.8 L12 3.6 Z" fill="#fff"/></svg></div></div><div style="position:absolute;left:555.6px;top:612.7px;width:199px;height:405.6px;background:linear-gradient(#a2a2a2,#949494 40%,#8a8a8a 85%,#707070);border-radius:35px 35px 31px 31px / 33px 33px 28px 28px;"><div style="position:absolute;left:2.1px;top:1.6px;width:194.8px;height:402.20000000000005px;background:linear-gradient(#6a6a6a,#4c4c4c 12%,#4c4c4c 88%,#3c3c3c);border-radius:32.8px 32.8px 28.8px 28.8px / 30.8px 30.8px 25.8px 25.8px;"></div><div style="position:absolute;left:3.6px;top:2.8px;width:191.8px;height:399.8px;background:linear-gradient(90deg,#d6d6d6,#f2f2f2 2.2%,#ffffff 3.4%,#ffffff 96.6%,#f2f2f2 97.8%,#d6d6d6);border-radius:31.3px 31.3px 27.3px 27.3px / 29.3px 29.3px 24.3px 24.3px;"></div><div style="position:absolute;left:5.6px;top:4.6px;width:187.8px;height:37.4px;background:linear-gradient(90deg,rgba(255,255,255,.18),rgba(255,255,255,0) 30%,rgba(0,0,0,0) 62%,rgba(0,0,0,.09)),linear-gradient(#dadada,#d2d2d2 25%,#cacaca 60%,#c2c2c2 90%,#cecece);border-radius:29px 29px 0 0 / 27px 27px 0 0;"></div><div style="position:absolute;left:3.6px;top:2.8px;width:191.8px;height:39px;background:linear-gradient(90deg,rgba(255,255,255,.5),rgba(255,255,255,0) 9%,rgba(255,255,255,0) 91%,rgba(255,255,255,.6));border-radius:31px 31px 0 0 / 29px 29px 0 0;"></div><div style="position:absolute;left:53.2px;top:12.6px;width:6.4px;height:6.4px;border-radius:50%;background:#3a3a3a;box-shadow:0 0 0 0.8px rgba(255,255,255,.55);"></div><div style="position:absolute;left:62.4px;top:12.6px;width:6.4px;height:6.4px;border-radius:50%;background:#3a3a3a;box-shadow:0 0 0 0.8px rgba(255,255,255,.55);"></div><div style="position:absolute;left:78.6px;top:12.4px;width:40.6px;height:6.4px;border-radius:3.4px;background:#e4e4e4;border:1px solid #6a6a6a;box-sizing:border-box;background-image:repeating-linear-gradient(90deg,#777 0,#777 0.9px,transparent 0.9px,transparent 2px);background-size:34px 1.6px;background-position:3px 1.4px;background-repeat:no-repeat;"></div><div style="position:absolute;left:144.6px;top:11.6px;width:13px;height:13px;border-radius:50%;background:radial-gradient(circle at 55% 45%,#555 0,#222 30%,#111 60%,#222 100%);box-shadow:0 0 0 1px #f4f4f4;"></div><div style="position:absolute;left:8.6px;top:366.6px;width:181.8px;height:35.4px;background:linear-gradient(90deg,#b4b4b4,#c6c6c6 22%,#d2d2d2 50%,#c6c6c6 78%,#b4b4b4);border-radius:0 0 27px 27px / 0 0 26px 26px;"></div><div style="position:absolute;left:8.6px;top:366.6px;width:181.8px;height:35.4px;background:linear-gradient(rgba(255,255,255,.7),rgba(255,255,255,0) 7%,rgba(255,255,255,0) 72%,rgba(255,255,255,.55));border-radius:0 0 27px 27px / 0 0 26px 26px;"></div><div style="position:absolute;left:77px;top:374.6px;width:45.4px;height:18.6px;border-radius:8px;border:1.2px solid #8c8c8c;box-sizing:border-box;background:linear-gradient(#cfcfcf,#e2e2e2);box-shadow:inset 0 0 0 1px #f0f0f0;"></div><svg style="position:absolute;left:36px;top:378px;" width="14" height="10" viewBox="0 0 14 10"><rect x="0.5" y="2.8" width="9.4" height="6.4" rx="1" fill="none" stroke="#e2e2e2" stroke-width="0.9"/><path d="M2.6 2.6 V1.6 C2.6 1 3 0.6 3.6 0.6 H12 C12.6 0.6 13 1 13 1.6 V6 C13 6.6 12.6 7 12 7 H10.6" fill="none" stroke="#e2e2e2" stroke-width="0.9"/></svg><svg style="position:absolute;left:150px;top:378.4px;" width="13" height="9" viewBox="0 0 13 9"><path d="M3.4 0.6 L0.8 2.8 L3.4 5 M0.8 2.8 H9 C11 2.8 12.2 4 12.2 5.6 C12.2 7.2 11 8.4 9 8.4 H1.4" fill="none" stroke="#e2e2e2" stroke-width="1"/></svg><div style="position:absolute;left:198px;top:132px;width:1.6px;height:24px;background:#777;border-radius:1px;"></div><div style="position:absolute;left:-0.6px;top:76px;width:1.4px;height:14px;background:#888;border-radius:1px;"></div><div style="position:absolute;left:-0.6px;top:100px;width:1.4px;height:14px;background:#888;border-radius:1px;"></div><div style="position:absolute;left:6.8px;top:40.8px;width:185.4px;height:326px;background:#fff;overflow:hidden"><div style="position:absolute;left:0px;top:37px;width:185px;height:289px;background:#fff;"></div><div style="position:absolute;left:0px;top:37px;width:185px;height:65.4px;background:#fff;"></div><div style="position:absolute;left:61.5px;top:37px;width:1px;height:65px;background:#ececec;"></div><div style="position:absolute;left:125px;top:37px;width:1px;height:65px;background:#ececec;"></div><div style="position:absolute;left:0px;top:102px;width:185px;height:1px;background:#e8e8e8;"></div><svg style="position:absolute;left:9.100000000000001px;top:48.8px;" width="43.0" height="43.0" viewBox="0 0 43.0 43.0"><defs><linearGradient id="gsn" x1="0" y1="1" x2="1" y2="0"><stop offset="0" stop-color="#2a3cb0"/><stop offset="0.6" stop-color="#1a2a80"/><stop offset="1" stop-color="#0c1830"/></linearGradient></defs><path d="M30.80 4.02 A19.8 19.8 0 0 1 36.21 34.75" fill="none" stroke="#efefef" stroke-width="1.7" stroke-linecap="round"/><path d="M7.26 35.25 A19.8 19.8 0 0 1 30.80 4.02" fill="none" stroke="url(#gsn)" stroke-width="1.7" stroke-linecap="round"/></svg><div style="position:absolute;left:-119.7px;width:300px;text-align:center;top:62.2px;font-size:3.4px;line-height:4.1px;color:#555;white-space:nowrap;">Airtime</div><div style="position:absolute;left:-119.2px;width:300px;text-align:center;top:68.1px;font-size:9.2px;line-height:11.0px;color:#555;white-space:nowrap;letter-spacing:-0.3px;"><span style="color:#555">0:25:</span><span style="color:#4a5cc8">00</span></div><div style="position:absolute;left:-119.7px;width:300px;text-align:center;top:83.5px;font-size:2.8px;line-height:3.4px;color:#4a5cc8;white-space:nowrap;">REMAINING</div><svg style="position:absolute;left:80.3px;top:54.4px;" width="26" height="20" viewBox="0 0 26 20"><path d="M1.5 7.4 Q13 -3.6 24.5 7.4" fill="none" stroke="#3d52c4" stroke-width="3" stroke-linecap="round"/><path d="M6 12 Q13 5.4 20 12" fill="none" stroke="#3d52c4" stroke-width="2.6" stroke-linecap="round"/><circle cx="13" cy="17" r="2.6" fill="#3d52c4"/></svg><div style="position:absolute;left:83.89999999999999px;top:78.0px;width:18.8px;height:7.6px;background:#3d52c4;border-radius:1.2px;"></div><div style="position:absolute;left:-56.7px;width:300px;text-align:center;top:78.6px;font-size:5.4px;line-height:6.5px;color:#b8c2f0;white-space:nowrap;letter-spacing:-0.3px;">Talk</div><svg style="position:absolute;left:143.7px;top:54.4px;" width="26" height="20" viewBox="0 0 26 20"><path d="M1.5 7.4 Q13 -3.6 24.5 7.4" fill="none" stroke="#222" stroke-width="3" stroke-linecap="round"/><path d="M6 12 Q13 5.4 20 12" fill="none" stroke="#222" stroke-width="2.6" stroke-linecap="round"/><circle cx="13" cy="17" r="2.6" fill="#222"/></svg><div style="position:absolute;left:147.29999999999998px;top:78.0px;width:18.8px;height:7.6px;background:#222;border-radius:1.2px;"></div><div style="position:absolute;left:6.699999999999989px;width:300px;text-align:center;top:78.6px;font-size:5.4px;line-height:6.5px;color:#bbb;white-space:nowrap;letter-spacing:-0.3px;">Data</div><div style="position:absolute;left:16px;top:114.2px;width:154.8px;height:34.4px;border:1px solid #8f9be6;box-sizing:border-box;border-radius:1px;"></div><div style="position:absolute;left:29.3px;text-align:left;top:126.7px;font-size:8.8px;line-height:10.6px;color:#8a96e0;white-space:nowrap;letter-spacing:-0.3px;">Bundles</div><div style="position:absolute;left:16px;top:153px;width:154.8px;height:33.4px;border:1px solid #e6eaf0;box-sizing:border-box;border-radius:1px;"></div><div style="position:absolute;left:29.3px;text-align:left;top:163.2px;font-size:9px;line-height:10.8px;color:#9ca6c0;white-space:nowrap;letter-spacing:-0.35px;">Payment Method</div><svg style="position:absolute;left:150.0px;top:167.15px;" width="8.6" height="5.8" viewBox="0 0 8 5.5"><path d="M0.8 0.8 L4 4.2 L7.2 0.8" fill="none" stroke="#111" stroke-width="2"/></svg><div style="position:absolute;left:16.2px;top:195.7px;width:154.4px;height:32.6px;background:#3b3b3b;border-radius:1px;"></div><div style="position:absolute;left:16.2px;top:231.8px;width:154.4px;height:32.8px;background:#3b3b3b;border-radius:1px;"></div><div style="position:absolute;left:0px;top:272.2px;width:185px;height:1px;background:#ececec;"></div><div style="position:absolute;left:61.5px;top:273px;width:1px;height:53px;background:#ececec;"></div><div style="position:absolute;left:125px;top:273px;width:1px;height:53px;background:#ececec;"></div><div style="position:absolute;left:132.03px;top:116.42999999999999px;width:41.54px;height:41.54px;border-radius:50%;background:rgba(205,205,208,0.45);"></div><div style="position:absolute;left:139.4px;top:123.79999999999998px;width:26.8px;height:26.8px;border-radius:50%;background:rgba(185,185,188,0.7);"></div><svg style="position:absolute;left:150.5px;top:129.2px;" width="7.6" height="5.3" viewBox="0 0 8 5.5"><path d="M0.8 0.8 L4 4.2 L7.2 0.8" fill="none" stroke="#2a3cb8" stroke-width="1.8"/></svg><div style="position:absolute;left:-57.5px;width:300px;text-align:center;top:204.7px;font-size:11.5px;line-height:13.8px;color:#d0d0d0;white-space:nowrap;letter-spacing:-0.35px;">Proceed</div><div style="position:absolute;left:-57.5px;width:300px;text-align:center;top:240.9px;font-size:11.5px;line-height:13.8px;color:#d0d0d0;white-space:nowrap;letter-spacing:-0.35px;">Cancel</div><svg style="position:absolute;left:21.599999999999998px;top:294.09999999999997px;" width="22" height="22" viewBox="0 0 22 22"><path d="M10.4 11.8 L10.4 2.0 A9.8 9.8 0 1 0 17.33 18.73 Z" fill="#2e2e2e"/><path d="M11.9 10.3 L11.9 0.5 A9.8 9.8 0 0 1 21.700000000000003 10.3 Z" fill="#2e2e2e"/><path d="M12.600000000000001 12.200000000000001 L21.8 12.200000000000001 A9.8 9.8 0 0 1 18.63 18.13 Z" fill="#2e2e2e"/></svg><svg style="position:absolute;left:87.13260869565217px;top:294.4px;" width="17.97701149425287" height="22" viewBox="0 0 18.4 22"><rect x="0.9" y="0.9" width="12.2" height="20.6" rx="1.7" fill="none" stroke="#3d52c4" stroke-width="1.7"/><rect x="0.9" y="18.2" width="12.2" height="3.3" fill="#3d52c4"/><path d="M1.8 17.6 L1.8 10.8 C5 9.4 8 6.2 9.4 1.8 L14.6 0.8 C16.6 3.2 18.2 6.4 18.2 9.4 C15.6 11 13.4 11.6 11.6 13 C9.4 14.8 6 17.4 1.8 17.4 Z" fill="#3d52c4"/><path d="M13.4 2.4 C15 4.6 16.2 7.2 16.4 9.6 M15.2 1.6 C16.6 3.6 17.6 6.4 17.6 9" stroke="#fff" stroke-width="0.45" fill="none" opacity="0.75"/><circle cx="7" cy="19.9" r="0.8" fill="#fff"/></svg><svg style="position:absolute;left:147.5px;top:295.9px;" width="23" height="19" viewBox="0 0 23 19"><path d="M8.4 1.4 H4.2 C2.4 1.4 1.4 2.4 1.4 4.2 V14.8 C1.4 16.6 2.4 17.6 4.2 17.6 H8.4" fill="none" stroke="#2c2c2c" stroke-width="2.4" stroke-linecap="round"/><path d="M6.4 6 H13.4 V1.4 L22.6 9.5 L13.4 17.6 V13 H6.4 Z" fill="#2c2c2c"/></svg><div style="position:absolute;left:0px;top:0px;width:185.4px;height:37.6px;background:#3a3a3a;"></div><svg style="position:absolute;left:0px;top:0px;opacity:1.0;" width="185" height="12" viewBox="0 0 185 12"><circle cx="3.6" cy="5.3" r="1.4" fill="#fff"/><circle cx="7.2" cy="5.3" r="1.4" fill="#fff"/><circle cx="10.8" cy="5.3" r="1.4" fill="#fff"/><circle cx="14.4" cy="5.3" r="1.1" fill="none" stroke="#fff" stroke-width="0.5"/><circle cx="18.0" cy="5.3" r="1.1" fill="none" stroke="#fff" stroke-width="0.5"/><path d="M23.3 3.9 Q26.8 0.9 30.3 3.9 L29.3 5 Q26.8 2.9 24.3 5 Z M25.1 5.8 Q26.8 4.4 28.5 5.8 L26.8 7.9 Z" fill="#fff"/><path d="M148 3.8 L151 6.6 L149.5 8 L149.5 2 L151 3.6 L148 6.4" fill="none" stroke="#fff" stroke-width="0.4" opacity="0.5"/><rect x="173" y="3.2" width="11" height="4.4" fill="#fff"/></svg><div style="position:absolute;left:-56.5px;width:300px;text-align:center;top:2.2px;font-size:5.6px;line-height:6.7px;color:#fff;white-space:nowrap;opacity:1.0;">12:00</div><div style="position:absolute;left:-129.5px;width:300px;text-align:right;top:2.2px;font-size:5.4px;line-height:6.5px;color:#fff;white-space:nowrap;opacity:1.0;">100%</div><svg style="position:absolute;left:7px;top:19px;" width="9" height="9" viewBox="0 0 9 9"><path d="M0.6 0.6 L8.2 8.2 M8.2 0.6 L0.6 8.2" stroke="#fff" stroke-width="1.1" fill="none"/></svg><svg style="position:absolute;left:170.5px;top:19.3px;" width="10" height="8" viewBox="0 0 10 8"><path d="M0 1 H9.4 M0 4 H9.4 M0 7 H9.4" stroke="#fff" stroke-width="1.3" fill="none"/></svg><div style="position:absolute;left:-56.5px;width:300px;text-align:center;top:17.2px;font-size:9.6px;line-height:11.5px;color:#c4c4c4;white-space:nowrap;letter-spacing:-0.3px;">Purchase Airtime</div></div></div><div style="position:absolute;left:830.1px;top:612.7px;width:199px;height:405.6px;background:linear-gradient(#a2a2a2,#949494 40%,#8a8a8a 85%,#707070);border-radius:35px 35px 31px 31px / 33px 33px 28px 28px;"><div style="position:absolute;left:2.1px;top:1.6px;width:194.8px;height:402.20000000000005px;background:linear-gradient(#6a6a6a,#4c4c4c 12%,#4c4c4c 88%,#3c3c3c);border-radius:32.8px 32.8px 28.8px 28.8px / 30.8px 30.8px 25.8px 25.8px;"></div><div style="position:absolute;left:3.6px;top:2.8px;width:191.8px;height:399.8px;background:linear-gradient(90deg,#d6d6d6,#f2f2f2 2.2%,#ffffff 3.4%,#ffffff 96.6%,#f2f2f2 97.8%,#d6d6d6);border-radius:31.3px 31.3px 27.3px 27.3px / 29.3px 29.3px 24.3px 24.3px;"></div><div style="position:absolute;left:5.6px;top:4.6px;width:187.8px;height:37.4px;background:linear-gradient(90deg,rgba(255,255,255,.18),rgba(255,255,255,0) 30%,rgba(0,0,0,0) 62%,rgba(0,0,0,.09)),linear-gradient(#dadada,#d2d2d2 25%,#cacaca 60%,#c2c2c2 90%,#cecece);border-radius:29px 29px 0 0 / 27px 27px 0 0;"></div><div style="position:absolute;left:3.6px;top:2.8px;width:191.8px;height:39px;background:linear-gradient(90deg,rgba(255,255,255,.5),rgba(255,255,255,0) 9%,rgba(255,255,255,0) 91%,rgba(255,255,255,.6));border-radius:31px 31px 0 0 / 29px 29px 0 0;"></div><div style="position:absolute;left:53.2px;top:12.6px;width:6.4px;height:6.4px;border-radius:50%;background:#3a3a3a;box-shadow:0 0 0 0.8px rgba(255,255,255,.55);"></div><div style="position:absolute;left:62.4px;top:12.6px;width:6.4px;height:6.4px;border-radius:50%;background:#3a3a3a;box-shadow:0 0 0 0.8px rgba(255,255,255,.55);"></div><div style="position:absolute;left:78.6px;top:12.4px;width:40.6px;height:6.4px;border-radius:3.4px;background:#e4e4e4;border:1px solid #6a6a6a;box-sizing:border-box;background-image:repeating-linear-gradient(90deg,#777 0,#777 0.9px,transparent 0.9px,transparent 2px);background-size:34px 1.6px;background-position:3px 1.4px;background-repeat:no-repeat;"></div><div style="position:absolute;left:144.6px;top:11.6px;width:13px;height:13px;border-radius:50%;background:radial-gradient(circle at 55% 45%,#555 0,#222 30%,#111 60%,#222 100%);box-shadow:0 0 0 1px #f4f4f4;"></div><div style="position:absolute;left:8.6px;top:366.6px;width:181.8px;height:35.4px;background:linear-gradient(90deg,#b4b4b4,#c6c6c6 22%,#d2d2d2 50%,#c6c6c6 78%,#b4b4b4);border-radius:0 0 27px 27px / 0 0 26px 26px;"></div><div style="position:absolute;left:8.6px;top:366.6px;width:181.8px;height:35.4px;background:linear-gradient(rgba(255,255,255,.7),rgba(255,255,255,0) 7%,rgba(255,255,255,0) 72%,rgba(255,255,255,.55));border-radius:0 0 27px 27px / 0 0 26px 26px;"></div><div style="position:absolute;left:77px;top:374.6px;width:45.4px;height:18.6px;border-radius:8px;border:1.2px solid #8c8c8c;box-sizing:border-box;background:linear-gradient(#cfcfcf,#e2e2e2);box-shadow:inset 0 0 0 1px #f0f0f0;"></div><svg style="position:absolute;left:36px;top:378px;" width="14" height="10" viewBox="0 0 14 10"><rect x="0.5" y="2.8" width="9.4" height="6.4" rx="1" fill="none" stroke="#e2e2e2" stroke-width="0.9"/><path d="M2.6 2.6 V1.6 C2.6 1 3 0.6 3.6 0.6 H12 C12.6 0.6 13 1 13 1.6 V6 C13 6.6 12.6 7 12 7 H10.6" fill="none" stroke="#e2e2e2" stroke-width="0.9"/></svg><svg style="position:absolute;left:150px;top:378.4px;" width="13" height="9" viewBox="0 0 13 9"><path d="M3.4 0.6 L0.8 2.8 L3.4 5 M0.8 2.8 H9 C11 2.8 12.2 4 12.2 5.6 C12.2 7.2 11 8.4 9 8.4 H1.4" fill="none" stroke="#e2e2e2" stroke-width="1"/></svg><div style="position:absolute;left:198px;top:132px;width:1.6px;height:24px;background:#777;border-radius:1px;"></div><div style="position:absolute;left:-0.6px;top:76px;width:1.4px;height:14px;background:#888;border-radius:1px;"></div><div style="position:absolute;left:-0.6px;top:100px;width:1.4px;height:14px;background:#888;border-radius:1px;"></div><div style="position:absolute;left:6.8px;top:40.8px;width:185.4px;height:326px;background:#fff;overflow:hidden"><div style="position:absolute;left:0px;top:37px;width:185px;height:289px;background:#fff;"></div><div style="position:absolute;left:0px;top:37px;width:185px;height:65.4px;background:#fff;"></div><div style="position:absolute;left:61.5px;top:37px;width:1px;height:65px;background:#ececec;"></div><div style="position:absolute;left:125px;top:37px;width:1px;height:65px;background:#ececec;"></div><div style="position:absolute;left:0px;top:102px;width:185px;height:1px;background:#e8e8e8;"></div><svg style="position:absolute;left:9.100000000000001px;top:48.8px;" width="43.0" height="43.0" viewBox="0 0 43.0 43.0"><defs><linearGradient id="gsn" x1="0" y1="1" x2="1" y2="0"><stop offset="0" stop-color="#2a3cb0"/><stop offset="0.6" stop-color="#1a2a80"/><stop offset="1" stop-color="#0c1830"/></linearGradient></defs><path d="M30.80 4.02 A19.8 19.8 0 0 1 36.21 34.75" fill="none" stroke="#efefef" stroke-width="1.7" stroke-linecap="round"/><path d="M7.26 35.25 A19.8 19.8 0 0 1 30.80 4.02" fill="none" stroke="url(#gsn)" stroke-width="1.7" stroke-linecap="round"/></svg><div style="position:absolute;left:-119.7px;width:300px;text-align:center;top:62.2px;font-size:3.4px;line-height:4.1px;color:#555;white-space:nowrap;">Airtime</div><div style="position:absolute;left:-119.2px;width:300px;text-align:center;top:68.1px;font-size:9.2px;line-height:11.0px;color:#555;white-space:nowrap;letter-spacing:-0.3px;"><span style="color:#555">0:25:</span><span style="color:#4a5cc8">00</span></div><div style="position:absolute;left:-119.7px;width:300px;text-align:center;top:83.5px;font-size:2.8px;line-height:3.4px;color:#4a5cc8;white-space:nowrap;">REMAINING</div><svg style="position:absolute;left:80.3px;top:54.4px;" width="26" height="20" viewBox="0 0 26 20"><path d="M1.5 7.4 Q13 -3.6 24.5 7.4" fill="none" stroke="#3d52c4" stroke-width="3" stroke-linecap="round"/><path d="M6 12 Q13 5.4 20 12" fill="none" stroke="#3d52c4" stroke-width="2.6" stroke-linecap="round"/><circle cx="13" cy="17" r="2.6" fill="#3d52c4"/></svg><div style="position:absolute;left:83.89999999999999px;top:78.0px;width:18.8px;height:7.6px;background:#3d52c4;border-radius:1.2px;"></div><div style="position:absolute;left:-56.7px;width:300px;text-align:center;top:78.6px;font-size:5.4px;line-height:6.5px;color:#b8c2f0;white-space:nowrap;letter-spacing:-0.3px;">Talk</div><svg style="position:absolute;left:143.7px;top:54.4px;" width="26" height="20" viewBox="0 0 26 20"><path d="M1.5 7.4 Q13 -3.6 24.5 7.4" fill="none" stroke="#222" stroke-width="3" stroke-linecap="round"/><path d="M6 12 Q13 5.4 20 12" fill="none" stroke="#222" stroke-width="2.6" stroke-linecap="round"/><circle cx="13" cy="17" r="2.6" fill="#222"/></svg><div style="position:absolute;left:147.29999999999998px;top:78.0px;width:18.8px;height:7.6px;background:#222;border-radius:1.2px;"></div><div style="position:absolute;left:6.699999999999989px;width:300px;text-align:center;top:78.6px;font-size:5.4px;line-height:6.5px;color:#bbb;white-space:nowrap;letter-spacing:-0.3px;">Data</div><div style="position:absolute;left:16px;top:114.2px;width:154.8px;height:34.4px;border:1px solid #8f9be6;box-sizing:border-box;border-radius:1px;"></div><div style="position:absolute;left:29.3px;text-align:left;top:126.7px;font-size:8.8px;line-height:10.6px;color:#8a96e0;white-space:nowrap;letter-spacing:-0.3px;">Bundles</div><div style="position:absolute;left:16px;top:153px;width:154.8px;height:33.4px;border:1px solid #e6eaf0;box-sizing:border-box;border-radius:1px;"></div><div style="position:absolute;left:29.3px;text-align:left;top:163.2px;font-size:9px;line-height:10.8px;color:#9ca6c0;white-space:nowrap;letter-spacing:-0.35px;">Payment Method</div><svg style="position:absolute;left:150.0px;top:167.15px;" width="8.6" height="5.8" viewBox="0 0 8 5.5"><path d="M0.8 0.8 L4 4.2 L7.2 0.8" fill="none" stroke="#111" stroke-width="2"/></svg><div style="position:absolute;left:16.2px;top:195.7px;width:154.4px;height:32.6px;background:#3b3b3b;border-radius:1px;"></div><div style="position:absolute;left:16.2px;top:231.8px;width:154.4px;height:32.8px;background:#3b3b3b;border-radius:1px;"></div><div style="position:absolute;left:0px;top:272.2px;width:185px;height:1px;background:#ececec;"></div><div style="position:absolute;left:61.5px;top:273px;width:1px;height:53px;background:#ececec;"></div><div style="position:absolute;left:125px;top:273px;width:1px;height:53px;background:#ececec;"></div><svg style="position:absolute;left:150.5px;top:129.2px;" width="7.6" height="5.3" viewBox="0 0 8 5.5"><path d="M0.8 0.8 L4 4.2 L7.2 0.8" fill="none" stroke="#2a3cb8" stroke-width="1.8"/></svg><svg style="position:absolute;left:21.599999999999998px;top:294.09999999999997px;" width="22" height="22" viewBox="0 0 22 22"><path d="M10.4 11.8 L10.4 2.0 A9.8 9.8 0 1 0 17.33 18.73 Z" fill="#2e2e2e"/><path d="M11.9 10.3 L11.9 0.5 A9.8 9.8 0 0 1 21.700000000000003 10.3 Z" fill="#2e2e2e"/><path d="M12.600000000000001 12.200000000000001 L21.8 12.200000000000001 A9.8 9.8 0 0 1 18.63 18.13 Z" fill="#2e2e2e"/></svg><svg style="position:absolute;left:87.13260869565217px;top:294.4px;" width="17.97701149425287" height="22" viewBox="0 0 18.4 22"><rect x="0.9" y="0.9" width="12.2" height="20.6" rx="1.7" fill="none" stroke="#3d52c4" stroke-width="1.7"/><rect x="0.9" y="18.2" width="12.2" height="3.3" fill="#3d52c4"/><path d="M1.8 17.6 L1.8 10.8 C5 9.4 8 6.2 9.4 1.8 L14.6 0.8 C16.6 3.2 18.2 6.4 18.2 9.4 C15.6 11 13.4 11.6 11.6 13 C9.4 14.8 6 17.4 1.8 17.4 Z" fill="#3d52c4"/><path d="M13.4 2.4 C15 4.6 16.2 7.2 16.4 9.6 M15.2 1.6 C16.6 3.6 17.6 6.4 17.6 9" stroke="#fff" stroke-width="0.45" fill="none" opacity="0.75"/><circle cx="7" cy="19.9" r="0.8" fill="#fff"/></svg><svg style="position:absolute;left:147.5px;top:295.9px;" width="23" height="19" viewBox="0 0 23 19"><path d="M8.4 1.4 H4.2 C2.4 1.4 1.4 2.4 1.4 4.2 V14.8 C1.4 16.6 2.4 17.6 4.2 17.6 H8.4" fill="none" stroke="#2c2c2c" stroke-width="2.4" stroke-linecap="round"/><path d="M6.4 6 H13.4 V1.4 L22.6 9.5 L13.4 17.6 V13 H6.4 Z" fill="#2c2c2c"/></svg><div style="position:absolute;left:0px;top:0px;width:185.4px;height:37.6px;background:#3a3a3a;"></div><svg style="position:absolute;left:0px;top:0px;opacity:1.0;" width="185" height="12" viewBox="0 0 185 12"><circle cx="3.6" cy="5.3" r="1.4" fill="#fff"/><circle cx="7.2" cy="5.3" r="1.4" fill="#fff"/><circle cx="10.8" cy="5.3" r="1.4" fill="#fff"/><circle cx="14.4" cy="5.3" r="1.1" fill="none" stroke="#fff" stroke-width="0.5"/><circle cx="18.0" cy="5.3" r="1.1" fill="none" stroke="#fff" stroke-width="0.5"/><path d="M23.3 3.9 Q26.8 0.9 30.3 3.9 L29.3 5 Q26.8 2.9 24.3 5 Z M25.1 5.8 Q26.8 4.4 28.5 5.8 L26.8 7.9 Z" fill="#fff"/><path d="M148 3.8 L151 6.6 L149.5 8 L149.5 2 L151 3.6 L148 6.4" fill="none" stroke="#fff" stroke-width="0.4" opacity="0.5"/><rect x="173" y="3.2" width="11" height="4.4" fill="#fff"/></svg><div style="position:absolute;left:-56.5px;width:300px;text-align:center;top:2.2px;font-size:5.6px;line-height:6.7px;color:#fff;white-space:nowrap;opacity:1.0;">12:00</div><div style="position:absolute;left:-129.5px;width:300px;text-align:right;top:2.2px;font-size:5.4px;line-height:6.5px;color:#fff;white-space:nowrap;opacity:1.0;">100%</div><svg style="position:absolute;left:7px;top:19px;" width="9" height="9" viewBox="0 0 9 9"><path d="M0.6 0.6 L8.2 8.2 M8.2 0.6 L0.6 8.2" stroke="#fff" stroke-width="1.1" fill="none"/></svg><svg style="position:absolute;left:170.5px;top:19.3px;" width="10" height="8" viewBox="0 0 10 8"><path d="M0 1 H9.4 M0 4 H9.4 M0 7 H9.4" stroke="#fff" stroke-width="1.3" fill="none"/></svg><div style="position:absolute;left:-56.5px;width:300px;text-align:center;top:17.2px;font-size:9.6px;line-height:11.5px;color:#c4c4c4;white-space:nowrap;letter-spacing:-0.3px;">Purchase Airtime</div><div style="position:absolute;left:0px;top:0px;width:185px;height:326px;background:rgba(0,0,0,0.54);"></div><div style="position:absolute;left:16px;top:114.2px;width:154.8px;height:34.2px;background:linear-gradient(100deg,#122a44 0%,#1b3662 30%,#2f479e 62%,#4457c6 100%);"></div><div style="position:absolute;left:29.3px;text-align:left;top:126.7px;font-size:8.8px;line-height:10.6px;color:#9fb0dc;white-space:nowrap;letter-spacing:-0.3px;">Bundles</div><svg style="position:absolute;left:150.5px;top:129.2px;" width="7.6" height="5.3" viewBox="0 0 8 5.5"><path d="M0.8 0.8 L4 4.2 L7.2 0.8" fill="none" stroke="#fff" stroke-width="1.8"/></svg><div style="position:absolute;left:16px;top:148.4px;width:154.8px;height:116.6px;background:#fff;"></div><div style="position:absolute;left:16px;top:178.4px;width:146px;height:26px;background:#ededed;"></div><div style="position:absolute;left:162px;top:148.4px;width:8.8px;height:116.6px;background:#f1f1f1;"></div><div style="position:absolute;left:162.6px;top:184px;width:7.6px;height:20.4px;background:#fbfbfb;border:0.5px solid #d8d8d8;box-sizing:border-box;"></div><svg style="position:absolute;left:164px;top:150.6px;" width="5" height="4" viewBox="0 0 5 4"><path d="M0.4 3.4 L2.5 0.6 L4.6 3.4 Z" fill="#555"/></svg><svg style="position:absolute;left:164px;top:259.6px;" width="5" height="4" viewBox="0 0 5 4"><path d="M0.4 0.6 L2.5 3.4 L4.6 0.6 Z" fill="#555"/></svg><div style="position:absolute;left:-57.7px;width:300px;text-align:center;top:158.3px;font-size:8.9px;line-height:10.7px;color:#a4adc6;white-space:nowrap;letter-spacing:-0.35px;">Option 1</div><div style="position:absolute;left:-57.7px;width:300px;text-align:center;top:185.6px;font-size:8.9px;line-height:10.7px;color:#5a6cd0;white-space:nowrap;letter-spacing:-0.35px;">Option 2</div><div style="position:absolute;left:-57.7px;width:300px;text-align:center;top:213.0px;font-size:8.9px;line-height:10.7px;color:#a4adc6;white-space:nowrap;letter-spacing:-0.35px;">Option 3</div><div style="position:absolute;left:-57.7px;width:300px;text-align:center;top:240.3px;font-size:8.9px;line-height:10.7px;color:#a4adc6;white-space:nowrap;letter-spacing:-0.35px;">Option 4</div><div style="position:absolute;left:88.44999999999999px;top:169.85px;width:40.300000000000004px;height:40.300000000000004px;border-radius:50%;background:rgba(200,200,204,0.5);"></div><div style="position:absolute;left:95.6px;top:177px;width:26px;height:26px;border-radius:50%;background:rgba(160,160,164,0.7);"></div></div></div><div style="position:absolute;left:1104.5px;top:612.7px;width:199px;height:405.6px;background:linear-gradient(#a2a2a2,#949494 40%,#8a8a8a 85%,#707070);border-radius:35px 35px 31px 31px / 33px 33px 28px 28px;"><div style="position:absolute;left:2.1px;top:1.6px;width:194.8px;height:402.20000000000005px;background:linear-gradient(#6a6a6a,#4c4c4c 12%,#4c4c4c 88%,#3c3c3c);border-radius:32.8px 32.8px 28.8px 28.8px / 30.8px 30.8px 25.8px 25.8px;"></div><div style="position:absolute;left:3.6px;top:2.8px;width:191.8px;height:399.8px;background:linear-gradient(90deg,#d6d6d6,#f2f2f2 2.2%,#ffffff 3.4%,#ffffff 96.6%,#f2f2f2 97.8%,#d6d6d6);border-radius:31.3px 31.3px 27.3px 27.3px / 29.3px 29.3px 24.3px 24.3px;"></div><div style="position:absolute;left:5.6px;top:4.6px;width:187.8px;height:37.4px;background:linear-gradient(90deg,rgba(255,255,255,.18),rgba(255,255,255,0) 30%,rgba(0,0,0,0) 62%,rgba(0,0,0,.09)),linear-gradient(#dadada,#d2d2d2 25%,#cacaca 60%,#c2c2c2 90%,#cecece);border-radius:29px 29px 0 0 / 27px 27px 0 0;"></div><div style="position:absolute;left:3.6px;top:2.8px;width:191.8px;height:39px;background:linear-gradient(90deg,rgba(255,255,255,.5),rgba(255,255,255,0) 9%,rgba(255,255,255,0) 91%,rgba(255,255,255,.6));border-radius:31px 31px 0 0 / 29px 29px 0 0;"></div><div style="position:absolute;left:53.2px;top:12.6px;width:6.4px;height:6.4px;border-radius:50%;background:#3a3a3a;box-shadow:0 0 0 0.8px rgba(255,255,255,.55);"></div><div style="position:absolute;left:62.4px;top:12.6px;width:6.4px;height:6.4px;border-radius:50%;background:#3a3a3a;box-shadow:0 0 0 0.8px rgba(255,255,255,.55);"></div><div style="position:absolute;left:78.6px;top:12.4px;width:40.6px;height:6.4px;border-radius:3.4px;background:#e4e4e4;border:1px solid #6a6a6a;box-sizing:border-box;background-image:repeating-linear-gradient(90deg,#777 0,#777 0.9px,transparent 0.9px,transparent 2px);background-size:34px 1.6px;background-position:3px 1.4px;background-repeat:no-repeat;"></div><div style="position:absolute;left:144.6px;top:11.6px;width:13px;height:13px;border-radius:50%;background:radial-gradient(circle at 55% 45%,#555 0,#222 30%,#111 60%,#222 100%);box-shadow:0 0 0 1px #f4f4f4;"></div><div style="position:absolute;left:8.6px;top:366.6px;width:181.8px;height:35.4px;background:linear-gradient(90deg,#b4b4b4,#c6c6c6 22%,#d2d2d2 50%,#c6c6c6 78%,#b4b4b4);border-radius:0 0 27px 27px / 0 0 26px 26px;"></div><div style="position:absolute;left:8.6px;top:366.6px;width:181.8px;height:35.4px;background:linear-gradient(rgba(255,255,255,.7),rgba(255,255,255,0) 7%,rgba(255,255,255,0) 72%,rgba(255,255,255,.55));border-radius:0 0 27px 27px / 0 0 26px 26px;"></div><div style="position:absolute;left:77px;top:374.6px;width:45.4px;height:18.6px;border-radius:8px;border:1.2px solid #8c8c8c;box-sizing:border-box;background:linear-gradient(#cfcfcf,#e2e2e2);box-shadow:inset 0 0 0 1px #f0f0f0;"></div><svg style="position:absolute;left:36px;top:378px;" width="14" height="10" viewBox="0 0 14 10"><rect x="0.5" y="2.8" width="9.4" height="6.4" rx="1" fill="none" stroke="#e2e2e2" stroke-width="0.9"/><path d="M2.6 2.6 V1.6 C2.6 1 3 0.6 3.6 0.6 H12 C12.6 0.6 13 1 13 1.6 V6 C13 6.6 12.6 7 12 7 H10.6" fill="none" stroke="#e2e2e2" stroke-width="0.9"/></svg><svg style="position:absolute;left:150px;top:378.4px;" width="13" height="9" viewBox="0 0 13 9"><path d="M3.4 0.6 L0.8 2.8 L3.4 5 M0.8 2.8 H9 C11 2.8 12.2 4 12.2 5.6 C12.2 7.2 11 8.4 9 8.4 H1.4" fill="none" stroke="#e2e2e2" stroke-width="1"/></svg><div style="position:absolute;left:198px;top:132px;width:1.6px;height:24px;background:#777;border-radius:1px;"></div><div style="position:absolute;left:-0.6px;top:76px;width:1.4px;height:14px;background:#888;border-radius:1px;"></div><div style="position:absolute;left:-0.6px;top:100px;width:1.4px;height:14px;background:#888;border-radius:1px;"></div><div style="position:absolute;left:6.8px;top:40.8px;width:185.4px;height:326px;background:#fff;overflow:hidden"><div style="position:absolute;left:0px;top:37px;width:185px;height:289px;background:#fff;"></div><div style="position:absolute;left:61.5px;top:37px;width:1px;height:65px;background:#ececec;"></div><div style="position:absolute;left:125px;top:37px;width:1px;height:65px;background:#ececec;"></div><div style="position:absolute;left:0px;top:102px;width:185px;height:1px;background:#e8e8e8;"></div><svg style="position:absolute;left:10.3px;top:49.099999999999994px;" width="42.4" height="42.4" viewBox="0 0 42.4 42.4"><path d="M30.50 3.72 A19.8 19.8 0 0 1 35.91 34.45" fill="none" stroke="#efefef" stroke-width="1.4" stroke-linecap="round"/><path d="M6.96 34.95 A19.8 19.8 0 0 1 30.50 3.72" fill="none" stroke="#9a9a9a" stroke-width="1.4" stroke-linecap="round"/></svg><div style="position:absolute;left:-118.5px;width:300px;text-align:center;top:60.7px;font-size:3.2px;line-height:3.8px;color:#c4c4c4;white-space:nowrap;">SMS</div><div style="position:absolute;left:-118.5px;width:300px;text-align:center;top:67.8px;font-size:7.6px;line-height:9.1px;color:#b4b4b8;white-space:nowrap;letter-spacing:-0.2px;">101</div><div style="position:absolute;left:-118.5px;width:300px;text-align:center;top:81.9px;font-size:2.8px;line-height:3.4px;color:#d0d0d0;white-space:nowrap;">REMAINING</div><svg style="position:absolute;left:68.10000000000001px;top:43.7px;" width="52.599999999999994" height="52.599999999999994" viewBox="0 0 52.599999999999994 52.599999999999994"><defs><linearGradient id="g8a" x1="0" y1="1" x2="1" y2="0"><stop offset="0" stop-color="#2a3cb0"/><stop offset="0.6" stop-color="#1a2a80"/><stop offset="1" stop-color="#0c1830"/></linearGradient></defs><path d="M37.76 4.76 A24.4 24.4 0 0 1 44.43 42.63" fill="none" stroke="#efefef" stroke-width="1.9" stroke-linecap="round"/><path d="M8.75 43.25 A24.4 24.4 0 0 1 37.76 4.76" fill="none" stroke="url(#g8a)" stroke-width="1.9" stroke-linecap="round"/></svg><div style="position:absolute;left:-55.599999999999994px;width:300px;text-align:center;top:59.3px;font-size:3.8px;line-height:4.6px;color:#555;white-space:nowrap;">Airtime</div><div style="position:absolute;left:-55.099999999999994px;width:300px;text-align:center;top:66.5px;font-size:11.2px;line-height:13.4px;color:#555;white-space:nowrap;letter-spacing:-0.3px;"><span style="color:#555">0:25:</span><span style="color:#4a5cc8">00</span></div><div style="position:absolute;left:-55.599999999999994px;width:300px;text-align:center;top:85.1px;font-size:3.2px;line-height:3.8px;color:#4a5cc8;white-space:nowrap;">REMAINING</div><svg style="position:absolute;left:134.70000000000002px;top:49.099999999999994px;" width="42.4" height="42.4" viewBox="0 0 42.4 42.4"><path d="M30.50 3.72 A19.8 19.8 0 0 1 35.91 34.45" fill="none" stroke="#efefef" stroke-width="1.4" stroke-linecap="round"/><path d="M6.96 34.95 A19.8 19.8 0 0 1 30.50 3.72" fill="none" stroke="#9a9a9a" stroke-width="1.4" stroke-linecap="round"/></svg><div style="position:absolute;left:5.900000000000006px;width:300px;text-align:center;top:60.7px;font-size:3.2px;line-height:3.8px;color:#c4c4c4;white-space:nowrap;">DATA</div><div style="position:absolute;left:5.900000000000006px;width:300px;text-align:center;top:67.8px;font-size:7.6px;line-height:9.1px;color:#b4b4b8;white-space:nowrap;letter-spacing:-0.2px;">1.7<span style="font-size:5px">G</span></div><div style="position:absolute;left:5.900000000000006px;width:300px;text-align:center;top:81.9px;font-size:2.8px;line-height:3.4px;color:#d0d0d0;white-space:nowrap;">REMAINING</div><svg style="position:absolute;left:30.800000000000004px;top:133.2px;" width="122.8" height="122.8" viewBox="0 0 122.8 122.8"><defs><linearGradient id="g8b" x1="0" y1="1" x2="1" y2="0"><stop offset="0" stop-color="#2a3cb0"/><stop offset="0.6" stop-color="#1a2a80"/><stop offset="1" stop-color="#0c1830"/></linearGradient></defs><path d="M88.63 10.19 A58 58 0 0 1 104.50 100.21" fill="none" stroke="#f3f3f3" stroke-width="3.4" stroke-linecap="round"/><path d="M19.68 101.69 A58 58 0 0 1 88.63 10.19" fill="none" stroke="url(#g8b)" stroke-width="3.4" stroke-linecap="round"/></svg><div style="position:absolute;left:-57.8px;width:300px;text-align:center;top:163.4px;font-size:10px;line-height:12.0px;color:#555;white-space:nowrap;letter-spacing:-0.4px;">Airtime</div><div style="position:absolute;left:-57.8px;width:300px;text-align:center;top:181.2px;font-size:23.6px;line-height:28.3px;color:#444;white-space:nowrap;letter-spacing:0.2px;"><span style="color:#3e3e3e">0:25:</span><span style="color:#4a5cc8">00</span></div><div style="position:absolute;left:78px;top:215.6px;width:28px;height:1px;background:#efefef;"></div><div style="position:absolute;left:-57.8px;width:300px;text-align:center;top:223.2px;font-size:8.4px;line-height:10.1px;color:#4a5cc8;white-space:nowrap;letter-spacing:-0.45px;">REMAINING</div><div style="position:absolute;left:0px;top:272.2px;width:185px;height:1px;background:#ececec;"></div><div style="position:absolute;left:61.5px;top:273px;width:1px;height:53px;background:#ececec;"></div><div style="position:absolute;left:125px;top:273px;width:1px;height:53px;background:#ececec;"></div><div style="position:absolute;left:20.47px;top:295.47px;width:39.06px;height:39.06px;border-radius:50%;background:rgba(205,205,208,0.4);"></div><div style="position:absolute;left:27.4px;top:302.4px;width:25.2px;height:25.2px;border-radius:50%;background:rgba(185,185,190,0.6);"></div><svg style="position:absolute;left:22.2px;top:294.09999999999997px;" width="22" height="22" viewBox="0 0 22 22"><path d="M10.4 11.8 L10.4 2.0 A9.8 9.8 0 1 0 17.33 18.73 Z" fill="#2c3eb4"/><path d="M11.9 10.3 L11.9 0.5 A9.8 9.8 0 0 1 21.700000000000003 10.3 Z" fill="#2c3eb4"/><path d="M12.600000000000001 12.200000000000001 L21.8 12.200000000000001 A9.8 9.8 0 0 1 18.63 18.13 Z" fill="#2c3eb4"/></svg><svg style="position:absolute;left:87.53260869565217px;top:294.4px;" width="17.97701149425287" height="22" viewBox="0 0 18.4 22"><rect x="0.9" y="0.9" width="12.2" height="20.6" rx="1.7" fill="none" stroke="#2a2a2a" stroke-width="1.7"/><rect x="0.9" y="18.2" width="12.2" height="3.3" fill="#2a2a2a"/><path d="M1.8 17.6 L1.8 10.8 C5 9.4 8 6.2 9.4 1.8 L14.6 0.8 C16.6 3.2 18.2 6.4 18.2 9.4 C15.6 11 13.4 11.6 11.6 13 C9.4 14.8 6 17.4 1.8 17.4 Z" fill="#2a2a2a"/><path d="M13.4 2.4 C15 4.6 16.2 7.2 16.4 9.6 M15.2 1.6 C16.6 3.6 17.6 6.4 17.6 9" stroke="#fff" stroke-width="0.45" fill="none" opacity="0.75"/><circle cx="7" cy="19.9" r="0.8" fill="#fff"/></svg><svg style="position:absolute;left:147.5px;top:295.9px;" width="23" height="19" viewBox="0 0 23 19"><path d="M8.4 1.4 H4.2 C2.4 1.4 1.4 2.4 1.4 4.2 V14.8 C1.4 16.6 2.4 17.6 4.2 17.6 H8.4" fill="none" stroke="#2c2c2c" stroke-width="2.4" stroke-linecap="round"/><path d="M6.4 6 H13.4 V1.4 L22.6 9.5 L13.4 17.6 V13 H6.4 Z" fill="#2c2c2c"/></svg><div style="position:absolute;left:0px;top:0px;width:185.4px;height:37.6px;background:#3a3a3a;"></div><svg style="position:absolute;left:0px;top:0px;opacity:1.0;" width="185" height="12" viewBox="0 0 185 12"><circle cx="3.6" cy="5.3" r="1.4" fill="#fff"/><circle cx="7.2" cy="5.3" r="1.4" fill="#fff"/><circle cx="10.8" cy="5.3" r="1.4" fill="#fff"/><circle cx="14.4" cy="5.3" r="1.1" fill="none" stroke="#fff" stroke-width="0.5"/><circle cx="18.0" cy="5.3" r="1.1" fill="none" stroke="#fff" stroke-width="0.5"/><path d="M23.3 3.9 Q26.8 0.9 30.3 3.9 L29.3 5 Q26.8 2.9 24.3 5 Z M25.1 5.8 Q26.8 4.4 28.5 5.8 L26.8 7.9 Z" fill="#fff"/><path d="M148 3.8 L151 6.6 L149.5 8 L149.5 2 L151 3.6 L148 6.4" fill="none" stroke="#fff" stroke-width="0.4" opacity="0.5"/><rect x="173" y="3.2" width="11" height="4.4" fill="#fff"/></svg><div style="position:absolute;left:-56.5px;width:300px;text-align:center;top:2.2px;font-size:5.6px;line-height:6.7px;color:#fff;white-space:nowrap;opacity:1.0;">12:00</div><div style="position:absolute;left:-129.5px;width:300px;text-align:right;top:2.2px;font-size:5.4px;line-height:6.5px;color:#fff;white-space:nowrap;opacity:1.0;">100%</div><svg style="position:absolute;left:7px;top:19px;" width="9" height="9" viewBox="0 0 9 9"><path d="M0.6 0.6 L8.2 8.2 M8.2 0.6 L0.6 8.2" stroke="#fff" stroke-width="1.1" fill="none"/></svg><svg style="position:absolute;left:170.5px;top:19.3px;" width="10" height="8" viewBox="0 0 10 8"><path d="M0 1 H9.4 M0 4 H9.4 M0 7 H9.4" stroke="#fff" stroke-width="1.3" fill="none"/></svg><div style="position:absolute;left:-56.5px;width:300px;text-align:center;top:17.2px;font-size:9.6px;line-height:11.5px;color:#c4c4c4;white-space:nowrap;letter-spacing:-0.3px;">Account Balance</div></div></div><div style="position:absolute;left:124px;top:115px;width:1336px;height:2px;background:#00ffff;"></div>
<div style="position:absolute;left:124px;top:448px;width:1336px;height:2px;background:#00ffff;"></div>
<div style="position:absolute;left:124px;top:785px;width:1336px;height:2px;background:#00ffff;"></div>
<div style="position:absolute;left:671px;top:104px;width:2px;height:953px;background:#00ffff;"></div>
<div style="position:absolute;left:883.5px;top:104px;width:2px;height:953px;background:#00ffff;"></div></div></div>
<div style="position:absolute;left:100px;top:80px;width:1360px;height:24px;overflow:hidden;font-size:11.5px;line-height:12px;color:#a8a8a8"><div style="position:absolute;left:24px;top:0;width:1336px;height:24px;overflow:hidden"><div style="position:absolute;left:-24px;top:0"><span style="position:absolute;left:11.8px;top:8px">400</span><i style="position:absolute;left:19.4px;top:21px;width:1px;height:3px;background:#686868"></i><i style="position:absolute;left:29.9px;top:20px;width:1px;height:4px;background:#686868"></i><i style="position:absolute;left:40.5px;top:21px;width:1px;height:3px;background:#686868"></i><i style="position:absolute;left:51.0px;top:0;width:1px;height:24px;background:#5f5f5f"></i><span style="position:absolute;left:54.0px;top:8px">300</span><i style="position:absolute;left:61.6px;top:21px;width:1px;height:3px;background:#686868"></i><i style="position:absolute;left:72.1px;top:20px;width:1px;height:4px;background:#686868"></i><i style="position:absolute;left:82.7px;top:21px;width:1px;height:3px;background:#686868"></i><i style="position:absolute;left:93.3px;top:0;width:1px;height:24px;background:#5f5f5f"></i><span style="position:absolute;left:96.3px;top:8px">200</span><i style="position:absolute;left:103.8px;top:21px;width:1px;height:3px;background:#686868"></i><i style="position:absolute;left:114.4px;top:20px;width:1px;height:4px;background:#686868"></i><i style="position:absolute;left:124.9px;top:21px;width:1px;height:3px;background:#686868"></i><i style="position:absolute;left:135.5px;top:0;width:1px;height:24px;background:#5f5f5f"></i><span style="position:absolute;left:138.5px;top:8px">100</span><i style="position:absolute;left:146.0px;top:21px;width:1px;height:3px;background:#686868"></i><i style="position:absolute;left:156.6px;top:20px;width:1px;height:4px;background:#686868"></i><i style="position:absolute;left:167.1px;top:21px;width:1px;height:3px;background:#686868"></i><i style="position:absolute;left:177.7px;top:0;width:1px;height:24px;background:#5f5f5f"></i><span style="position:absolute;left:180.7px;top:8px">0</span><i style="position:absolute;left:188.3px;top:21px;width:1px;height:3px;background:#686868"></i><i style="position:absolute;left:198.8px;top:20px;width:1px;height:4px;background:#686868"></i><i style="position:absolute;left:209.4px;top:21px;width:1px;height:3px;background:#686868"></i><i style="position:absolute;left:219.9px;top:0;width:1px;height:24px;background:#5f5f5f"></i><span style="position:absolute;left:222.9px;top:8px">100</span><i style="position:absolute;left:230.5px;top:21px;width:1px;height:3px;background:#686868"></i><i style="position:absolute;left:241.0px;top:20px;width:1px;height:4px;background:#686868"></i><i style="position:absolute;left:251.6px;top:21px;width:1px;height:3px;background:#686868"></i><i style="position:absolute;left:262.1px;top:0;width:1px;height:24px;background:#5f5f5f"></i><span style="position:absolute;left:265.1px;top:8px">200</span><i style="position:absolute;left:272.7px;top:21px;width:1px;height:3px;background:#686868"></i><i style="position:absolute;left:283.2px;top:20px;width:1px;height:4px;background:#686868"></i><i style="position:absolute;left:293.8px;top:21px;width:1px;height:3px;background:#686868"></i><i style="position:absolute;left:304.4px;top:0;width:1px;height:24px;background:#5f5f5f"></i><span style="position:absolute;left:307.4px;top:8px">300</span><i style="position:absolute;left:314.9px;top:21px;width:1px;height:3px;background:#686868"></i><i style="position:absolute;left:325.5px;top:20px;width:1px;height:4px;background:#686868"></i><i style="position:absolute;left:336.0px;top:21px;width:1px;height:3px;background:#686868"></i><i style="position:absolute;left:346.6px;top:0;width:1px;height:24px;background:#5f5f5f"></i><span style="position:absolute;left:349.6px;top:8px">400</span><i style="position:absolute;left:357.1px;top:21px;width:1px;height:3px;background:#686868"></i><i style="position:absolute;left:367.7px;top:20px;width:1px;height:4px;background:#686868"></i><i style="position:absolute;left:378.2px;top:21px;width:1px;height:3px;background:#686868"></i><i style="position:absolute;left:388.8px;top:0;width:1px;height:24px;background:#5f5f5f"></i><span style="position:absolute;left:391.8px;top:8px">500</span><i style="position:absolute;left:399.4px;top:21px;width:1px;height:3px;background:#686868"></i><i style="position:absolute;left:409.9px;top:20px;width:1px;height:4px;background:#686868"></i><i style="position:absolute;left:420.5px;top:21px;width:1px;height:3px;background:#686868"></i><i style="position:absolute;left:431.0px;top:0;width:1px;height:24px;background:#5f5f5f"></i><span style="position:absolute;left:434.0px;top:8px">600</span><i style="position:absolute;left:441.6px;top:21px;width:1px;height:3px;background:#686868"></i><i style="position:absolute;left:452.1px;top:20px;width:1px;height:4px;background:#686868"></i><i style="position:absolute;left:462.7px;top:21px;width:1px;height:3px;background:#686868"></i><i style="position:absolute;left:473.2px;top:0;width:1px;height:24px;background:#5f5f5f"></i><span style="position:absolute;left:476.2px;top:8px">700</span><i style="position:absolute;left:483.8px;top:21px;width:1px;height:3px;background:#686868"></i><i style="position:absolute;left:494.4px;top:20px;width:1px;height:4px;background:#686868"></i><i style="position:absolute;left:504.9px;top:21px;width:1px;height:3px;background:#686868"></i><i style="position:absolute;left:515.5px;top:0;width:1px;height:24px;background:#5f5f5f"></i><span style="position:absolute;left:518.5px;top:8px">800</span><i style="position:absolute;left:526.0px;top:21px;width:1px;height:3px;background:#686868"></i><i style="position:absolute;left:536.6px;top:20px;width:1px;height:4px;background:#686868"></i><i style="position:absolute;left:547.1px;top:21px;width:1px;height:3px;background:#686868"></i><i style="position:absolute;left:557.7px;top:0;width:1px;height:24px;background:#5f5f5f"></i><span style="position:absolute;left:560.7px;top:8px">900</span><i style="position:absolute;left:568.2px;top:21px;width:1px;height:3px;background:#686868"></i><i style="position:absolute;left:578.8px;top:20px;width:1px;height:4px;background:#686868"></i><i style="position:absolute;left:589.3px;top:21px;width:1px;height:3px;background:#686868"></i><i style="position:absolute;left:599.9px;top:0;width:1px;height:24px;background:#5f5f5f"></i><span style="position:absolute;left:602.9px;top:8px">1000</span><i style="position:absolute;left:610.5px;top:21px;width:1px;height:3px;background:#686868"></i><i style="position:absolute;left:621.0px;top:20px;width:1px;height:4px;background:#686868"></i><i style="position:absolute;left:631.6px;top:21px;width:1px;height:3px;background:#686868"></i><i style="position:absolute;left:642.1px;top:0;width:1px;height:24px;background:#5f5f5f"></i><span style="position:absolute;left:645.1px;top:8px">1100</span><i style="position:absolute;left:652.7px;top:21px;width:1px;height:3px;background:#686868"></i><i style="position:absolute;left:663.2px;top:20px;width:1px;height:4px;background:#686868"></i><i style="position:absolute;left:673.8px;top:21px;width:1px;height:3px;background:#686868"></i><i style="position:absolute;left:684.3px;top:0;width:1px;height:24px;background:#5f5f5f"></i><span style="position:absolute;left:687.3px;top:8px">1200</span><i style="position:absolute;left:694.9px;top:21px;width:1px;height:3px;background:#686868"></i><i style="position:absolute;left:705.4px;top:20px;width:1px;height:4px;background:#686868"></i><i style="position:absolute;left:716.0px;top:21px;width:1px;height:3px;background:#686868"></i><i style="position:absolute;left:726.6px;top:0;width:1px;height:24px;background:#5f5f5f"></i><span style="position:absolute;left:729.6px;top:8px">1300</span><i style="position:absolute;left:737.1px;top:21px;width:1px;height:3px;background:#686868"></i><i style="position:absolute;left:747.7px;top:20px;width:1px;height:4px;background:#686868"></i><i style="position:absolute;left:758.2px;top:21px;width:1px;height:3px;background:#686868"></i><i style="position:absolute;left:768.8px;top:0;width:1px;height:24px;background:#5f5f5f"></i><span style="position:absolute;left:771.8px;top:8px">1400</span><i style="position:absolute;left:779.3px;top:21px;width:1px;height:3px;background:#686868"></i><i style="position:absolute;left:789.9px;top:20px;width:1px;height:4px;background:#686868"></i><i style="position:absolute;left:800.4px;top:21px;width:1px;height:3px;background:#686868"></i><i style="position:absolute;left:811.0px;top:0;width:1px;height:24px;background:#5f5f5f"></i><span style="position:absolute;left:814.0px;top:8px">1500</span><i style="position:absolute;left:821.6px;top:21px;width:1px;height:3px;background:#686868"></i><i style="position:absolute;left:832.1px;top:20px;width:1px;height:4px;background:#686868"></i><i style="position:absolute;left:842.7px;top:21px;width:1px;height:3px;background:#686868"></i><i style="position:absolute;left:853.2px;top:0;width:1px;height:24px;background:#5f5f5f"></i><span style="position:absolute;left:856.2px;top:8px">1600</span><i style="position:absolute;left:863.8px;top:21px;width:1px;height:3px;background:#686868"></i><i style="position:absolute;left:874.3px;top:20px;width:1px;height:4px;background:#686868"></i><i style="position:absolute;left:884.9px;top:21px;width:1px;height:3px;background:#686868"></i><i style="position:absolute;left:895.4px;top:0;width:1px;height:24px;background:#5f5f5f"></i><span style="position:absolute;left:898.4px;top:8px">1700</span><i style="position:absolute;left:906.0px;top:21px;width:1px;height:3px;background:#686868"></i><i style="position:absolute;left:916.6px;top:20px;width:1px;height:4px;background:#686868"></i><i style="position:absolute;left:927.1px;top:21px;width:1px;height:3px;background:#686868"></i><i style="position:absolute;left:937.7px;top:0;width:1px;height:24px;background:#5f5f5f"></i><span style="position:absolute;left:940.7px;top:8px">1800</span><i style="position:absolute;left:948.2px;top:21px;width:1px;height:3px;background:#686868"></i><i style="position:absolute;left:958.8px;top:20px;width:1px;height:4px;background:#686868"></i><i style="position:absolute;left:969.3px;top:21px;width:1px;height:3px;background:#686868"></i><i style="position:absolute;left:979.9px;top:0;width:1px;height:24px;background:#5f5f5f"></i><span style="position:absolute;left:982.9px;top:8px">1900</span><i style="position:absolute;left:990.4px;top:21px;width:1px;height:3px;background:#686868"></i><i style="position:absolute;left:1001.0px;top:20px;width:1px;height:4px;background:#686868"></i><i style="position:absolute;left:1011.5px;top:21px;width:1px;height:3px;background:#686868"></i><i style="position:absolute;left:1022.1px;top:0;width:1px;height:24px;background:#5f5f5f"></i><span style="position:absolute;left:1025.1px;top:8px">2000</span><i style="position:absolute;left:1032.7px;top:21px;width:1px;height:3px;background:#686868"></i><i style="position:absolute;left:1043.2px;top:20px;width:1px;height:4px;background:#686868"></i><i style="position:absolute;left:1053.8px;top:21px;width:1px;height:3px;background:#686868"></i><i style="position:absolute;left:1064.3px;top:0;width:1px;height:24px;background:#5f5f5f"></i><span style="position:absolute;left:1067.3px;top:8px">2100</span><i style="position:absolute;left:1074.9px;top:21px;width:1px;height:3px;background:#686868"></i><i style="position:absolute;left:1085.4px;top:20px;width:1px;height:4px;background:#686868"></i><i style="position:absolute;left:1096.0px;top:21px;width:1px;height:3px;background:#686868"></i><i style="position:absolute;left:1106.5px;top:0;width:1px;height:24px;background:#5f5f5f"></i><span style="position:absolute;left:1109.5px;top:8px">2200</span><i style="position:absolute;left:1117.1px;top:21px;width:1px;height:3px;background:#686868"></i><i style="position:absolute;left:1127.6px;top:20px;width:1px;height:4px;background:#686868"></i><i style="position:absolute;left:1138.2px;top:21px;width:1px;height:3px;background:#686868"></i><i style="position:absolute;left:1148.8px;top:0;width:1px;height:24px;background:#5f5f5f"></i><span style="position:absolute;left:1151.8px;top:8px">2300</span><i style="position:absolute;left:1159.3px;top:21px;width:1px;height:3px;background:#686868"></i><i style="position:absolute;left:1169.9px;top:20px;width:1px;height:4px;background:#686868"></i><i style="position:absolute;left:1180.4px;top:21px;width:1px;height:3px;background:#686868"></i><i style="position:absolute;left:1191.0px;top:0;width:1px;height:24px;background:#5f5f5f"></i><span style="position:absolute;left:1194.0px;top:8px">2400</span><i style="position:absolute;left:1201.5px;top:21px;width:1px;height:3px;background:#686868"></i><i style="position:absolute;left:1212.1px;top:20px;width:1px;height:4px;background:#686868"></i><i style="position:absolute;left:1222.6px;top:21px;width:1px;height:3px;background:#686868"></i><i style="position:absolute;left:1233.2px;top:0;width:1px;height:24px;background:#5f5f5f"></i><span style="position:absolute;left:1236.2px;top:8px">2500</span><i style="position:absolute;left:1243.8px;top:21px;width:1px;height:3px;background:#686868"></i><i style="position:absolute;left:1254.3px;top:20px;width:1px;height:4px;background:#686868"></i><i style="position:absolute;left:1264.9px;top:21px;width:1px;height:3px;background:#686868"></i><i style="position:absolute;left:1275.4px;top:0;width:1px;height:24px;background:#5f5f5f"></i><span style="position:absolute;left:1278.4px;top:8px">2600</span><i style="position:absolute;left:1286.0px;top:21px;width:1px;height:3px;background:#686868"></i><i style="position:absolute;left:1296.5px;top:20px;width:1px;height:4px;background:#686868"></i><i style="position:absolute;left:1307.1px;top:21px;width:1px;height:3px;background:#686868"></i><i style="position:absolute;left:1317.6px;top:0;width:1px;height:24px;background:#5f5f5f"></i><span style="position:absolute;left:1320.6px;top:8px">2700</span><i style="position:absolute;left:1328.2px;top:21px;width:1px;height:3px;background:#686868"></i><i style="position:absolute;left:1338.8px;top:20px;width:1px;height:4px;background:#686868"></i><i style="position:absolute;left:1349.3px;top:21px;width:1px;height:3px;background:#686868"></i><i style="position:absolute;left:1359.9px;top:0;width:1px;height:24px;background:#5f5f5f"></i><span style="position:absolute;left:1362.9px;top:8px">2800</span><i style="position:absolute;left:1370.4px;top:21px;width:1px;height:3px;background:#686868"></i><i style="position:absolute;left:1381.0px;top:20px;width:1px;height:4px;background:#686868"></i><i style="position:absolute;left:1391.5px;top:21px;width:1px;height:3px;background:#686868"></i></div></div></div>
<div style="position:absolute;left:100px;top:104px;width:24px;height:953px;overflow:hidden;font-size:10.2px;line-height:10px;color:#a4a4a4"><span style="position:absolute;left:7px;width:8px;text-align:center;top:-45.2px">2</span><span style="position:absolute;left:7px;width:8px;text-align:center;top:-35.9px">0</span><span style="position:absolute;left:7px;width:8px;text-align:center;top:-26.6px">0</span><i style="position:absolute;left:21px;top:-36.9px;width:3px;height:1px;background:#686868"></i><i style="position:absolute;left:20px;top:-26.3px;width:4px;height:1px;background:#686868"></i><i style="position:absolute;left:21px;top:-15.8px;width:3px;height:1px;background:#686868"></i><span style="position:absolute;left:7px;width:8px;text-align:center;top:-3.0px">1</span><span style="position:absolute;left:7px;width:8px;text-align:center;top:6.3px">0</span><span style="position:absolute;left:7px;width:8px;text-align:center;top:15.6px">0</span><i style="position:absolute;left:21px;top:5.3px;width:3px;height:1px;background:#686868"></i><i style="position:absolute;left:20px;top:15.9px;width:4px;height:1px;background:#686868"></i><i style="position:absolute;left:21px;top:26.4px;width:3px;height:1px;background:#686868"></i><i style="position:absolute;left:0;top:37.0px;width:24px;height:1px;background:#5f5f5f"></i><span style="position:absolute;left:7px;width:8px;text-align:center;top:39.2px">0</span><i style="position:absolute;left:21px;top:47.6px;width:3px;height:1px;background:#686868"></i><i style="position:absolute;left:20px;top:58.1px;width:4px;height:1px;background:#686868"></i><i style="position:absolute;left:21px;top:68.7px;width:3px;height:1px;background:#686868"></i><i style="position:absolute;left:0;top:79.2px;width:24px;height:1px;background:#5f5f5f"></i><span style="position:absolute;left:7px;width:8px;text-align:center;top:81.4px">1</span><span style="position:absolute;left:7px;width:8px;text-align:center;top:90.7px">0</span><span style="position:absolute;left:7px;width:8px;text-align:center;top:100.0px">0</span><i style="position:absolute;left:21px;top:89.8px;width:3px;height:1px;background:#686868"></i><i style="position:absolute;left:20px;top:100.3px;width:4px;height:1px;background:#686868"></i><i style="position:absolute;left:21px;top:110.9px;width:3px;height:1px;background:#686868"></i><i style="position:absolute;left:0;top:121.4px;width:24px;height:1px;background:#5f5f5f"></i><span style="position:absolute;left:7px;width:8px;text-align:center;top:123.6px">2</span><span style="position:absolute;left:7px;width:8px;text-align:center;top:132.9px">0</span><span style="position:absolute;left:7px;width:8px;text-align:center;top:142.2px">0</span><i style="position:absolute;left:21px;top:132.0px;width:3px;height:1px;background:#686868"></i><i style="position:absolute;left:20px;top:142.6px;width:4px;height:1px;background:#686868"></i><i style="position:absolute;left:21px;top:153.1px;width:3px;height:1px;background:#686868"></i><i style="position:absolute;left:0;top:163.7px;width:24px;height:1px;background:#5f5f5f"></i><span style="position:absolute;left:7px;width:8px;text-align:center;top:165.9px">3</span><span style="position:absolute;left:7px;width:8px;text-align:center;top:175.2px">0</span><span style="position:absolute;left:7px;width:8px;text-align:center;top:184.5px">0</span><i style="position:absolute;left:21px;top:174.2px;width:3px;height:1px;background:#686868"></i><i style="position:absolute;left:20px;top:184.8px;width:4px;height:1px;background:#686868"></i><i style="position:absolute;left:21px;top:195.3px;width:3px;height:1px;background:#686868"></i><i style="position:absolute;left:0;top:205.9px;width:24px;height:1px;background:#5f5f5f"></i><span style="position:absolute;left:7px;width:8px;text-align:center;top:208.1px">4</span><span style="position:absolute;left:7px;width:8px;text-align:center;top:217.4px">0</span><span style="position:absolute;left:7px;width:8px;text-align:center;top:226.7px">0</span><i style="position:absolute;left:21px;top:216.4px;width:3px;height:1px;background:#686868"></i><i style="position:absolute;left:20px;top:227.0px;width:4px;height:1px;background:#686868"></i><i style="position:absolute;left:21px;top:237.5px;width:3px;height:1px;background:#686868"></i><i style="position:absolute;left:0;top:248.1px;width:24px;height:1px;background:#5f5f5f"></i><span style="position:absolute;left:7px;width:8px;text-align:center;top:250.3px">5</span><span style="position:absolute;left:7px;width:8px;text-align:center;top:259.6px">0</span><span style="position:absolute;left:7px;width:8px;text-align:center;top:268.9px">0</span><i style="position:absolute;left:21px;top:258.7px;width:3px;height:1px;background:#686868"></i><i style="position:absolute;left:20px;top:269.2px;width:4px;height:1px;background:#686868"></i><i style="position:absolute;left:21px;top:279.8px;width:3px;height:1px;background:#686868"></i><i style="position:absolute;left:0;top:290.3px;width:24px;height:1px;background:#5f5f5f"></i><span style="position:absolute;left:7px;width:8px;text-align:center;top:292.5px">6</span><span style="position:absolute;left:7px;width:8px;text-align:center;top:301.8px">0</span><span style="position:absolute;left:7px;width:8px;text-align:center;top:311.1px">0</span><i style="position:absolute;left:21px;top:300.9px;width:3px;height:1px;background:#686868"></i><i style="position:absolute;left:20px;top:311.4px;width:4px;height:1px;background:#686868"></i><i style="position:absolute;left:21px;top:322.0px;width:3px;height:1px;background:#686868"></i><i style="position:absolute;left:0;top:332.5px;width:24px;height:1px;background:#5f5f5f"></i><span style="position:absolute;left:7px;width:8px;text-align:center;top:334.7px">7</span><span style="position:absolute;left:7px;width:8px;text-align:center;top:344.0px">0</span><span style="position:absolute;left:7px;width:8px;text-align:center;top:353.3px">0</span><i style="position:absolute;left:21px;top:343.1px;width:3px;height:1px;background:#686868"></i><i style="position:absolute;left:20px;top:353.6px;width:4px;height:1px;background:#686868"></i><i style="position:absolute;left:21px;top:364.2px;width:3px;height:1px;background:#686868"></i><i style="position:absolute;left:0;top:374.8px;width:24px;height:1px;background:#5f5f5f"></i><span style="position:absolute;left:7px;width:8px;text-align:center;top:377.0px">8</span><span style="position:absolute;left:7px;width:8px;text-align:center;top:386.3px">0</span><span style="position:absolute;left:7px;width:8px;text-align:center;top:395.6px">0</span><i style="position:absolute;left:21px;top:385.3px;width:3px;height:1px;background:#686868"></i><i style="position:absolute;left:20px;top:395.9px;width:4px;height:1px;background:#686868"></i><i style="position:absolute;left:21px;top:406.4px;width:3px;height:1px;background:#686868"></i><i style="position:absolute;left:0;top:417.0px;width:24px;height:1px;background:#5f5f5f"></i><span style="position:absolute;left:7px;width:8px;text-align:center;top:419.2px">9</span><span style="position:absolute;left:7px;width:8px;text-align:center;top:428.5px">0</span><span style="position:absolute;left:7px;width:8px;text-align:center;top:437.8px">0</span><i style="position:absolute;left:21px;top:427.5px;width:3px;height:1px;background:#686868"></i><i style="position:absolute;left:20px;top:438.1px;width:4px;height:1px;background:#686868"></i><i style="position:absolute;left:21px;top:448.6px;width:3px;height:1px;background:#686868"></i><i style="position:absolute;left:0;top:459.2px;width:24px;height:1px;background:#5f5f5f"></i><span style="position:absolute;left:7px;width:8px;text-align:center;top:461.4px">1</span><span style="position:absolute;left:7px;width:8px;text-align:center;top:470.7px">0</span><span style="position:absolute;left:7px;width:8px;text-align:center;top:480.0px">0</span><span style="position:absolute;left:7px;width:8px;text-align:center;top:489.3px">0</span><i style="position:absolute;left:21px;top:469.8px;width:3px;height:1px;background:#686868"></i><i style="position:absolute;left:20px;top:480.3px;width:4px;height:1px;background:#686868"></i><i style="position:absolute;left:21px;top:490.9px;width:3px;height:1px;background:#686868"></i><i style="position:absolute;left:0;top:501.4px;width:24px;height:1px;background:#5f5f5f"></i><span style="position:absolute;left:7px;width:8px;text-align:center;top:503.6px">1</span><span style="position:absolute;left:7px;width:8px;text-align:center;top:512.9px">1</span><span style="position:absolute;left:7px;width:8px;text-align:center;top:522.2px">0</span><span style="position:absolute;left:7px;width:8px;text-align:center;top:531.5px">0</span><i style="position:absolute;left:21px;top:512.0px;width:3px;height:1px;background:#686868"></i><i style="position:absolute;left:20px;top:522.5px;width:4px;height:1px;background:#686868"></i><i style="position:absolute;left:21px;top:533.1px;width:3px;height:1px;background:#686868"></i><i style="position:absolute;left:0;top:543.6px;width:24px;height:1px;background:#5f5f5f"></i><span style="position:absolute;left:7px;width:8px;text-align:center;top:545.8px">1</span><span style="position:absolute;left:7px;width:8px;text-align:center;top:555.1px">2</span><span style="position:absolute;left:7px;width:8px;text-align:center;top:564.4px">0</span><span style="position:absolute;left:7px;width:8px;text-align:center;top:573.7px">0</span><i style="position:absolute;left:21px;top:554.2px;width:3px;height:1px;background:#686868"></i><i style="position:absolute;left:20px;top:564.8px;width:4px;height:1px;background:#686868"></i><i style="position:absolute;left:21px;top:575.3px;width:3px;height:1px;background:#686868"></i><i style="position:absolute;left:0;top:585.9px;width:24px;height:1px;background:#5f5f5f"></i><span style="position:absolute;left:7px;width:8px;text-align:center;top:588.1px">1</span><span style="position:absolute;left:7px;width:8px;text-align:center;top:597.4px">3</span><span style="position:absolute;left:7px;width:8px;text-align:center;top:606.7px">0</span><span style="position:absolute;left:7px;width:8px;text-align:center;top:616.0px">0</span><i style="position:absolute;left:21px;top:596.4px;width:3px;height:1px;background:#686868"></i><i style="position:absolute;left:20px;top:607.0px;width:4px;height:1px;background:#686868"></i><i style="position:absolute;left:21px;top:617.5px;width:3px;height:1px;background:#686868"></i><i style="position:absolute;left:0;top:628.1px;width:24px;height:1px;background:#5f5f5f"></i><span style="position:absolute;left:7px;width:8px;text-align:center;top:630.3px">1</span><span style="position:absolute;left:7px;width:8px;text-align:center;top:639.6px">4</span><span style="position:absolute;left:7px;width:8px;text-align:center;top:648.9px">0</span><span style="position:absolute;left:7px;width:8px;text-align:center;top:658.2px">0</span><i style="position:absolute;left:21px;top:638.6px;width:3px;height:1px;background:#686868"></i><i style="position:absolute;left:20px;top:649.2px;width:4px;height:1px;background:#686868"></i><i style="position:absolute;left:21px;top:659.7px;width:3px;height:1px;background:#686868"></i><i style="position:absolute;left:0;top:670.3px;width:24px;height:1px;background:#5f5f5f"></i><span style="position:absolute;left:7px;width:8px;text-align:center;top:672.5px">1</span><span style="position:absolute;left:7px;width:8px;text-align:center;top:681.8px">5</span><span style="position:absolute;left:7px;width:8px;text-align:center;top:691.1px">0</span><span style="position:absolute;left:7px;width:8px;text-align:center;top:700.4px">0</span><i style="position:absolute;left:21px;top:680.9px;width:3px;height:1px;background:#686868"></i><i style="position:absolute;left:20px;top:691.4px;width:4px;height:1px;background:#686868"></i><i style="position:absolute;left:21px;top:702.0px;width:3px;height:1px;background:#686868"></i><i style="position:absolute;left:0;top:712.5px;width:24px;height:1px;background:#5f5f5f"></i><span style="position:absolute;left:7px;width:8px;text-align:center;top:714.7px">1</span><span style="position:absolute;left:7px;width:8px;text-align:center;top:724.0px">6</span><span style="position:absolute;left:7px;width:8px;text-align:center;top:733.3px">0</span><span style="position:absolute;left:7px;width:8px;text-align:center;top:742.6px">0</span><i style="position:absolute;left:21px;top:723.1px;width:3px;height:1px;background:#686868"></i><i style="position:absolute;left:20px;top:733.6px;width:4px;height:1px;background:#686868"></i><i style="position:absolute;left:21px;top:744.2px;width:3px;height:1px;background:#686868"></i><i style="position:absolute;left:0;top:754.7px;width:24px;height:1px;background:#5f5f5f"></i><span style="position:absolute;left:7px;width:8px;text-align:center;top:756.9px">1</span><span style="position:absolute;left:7px;width:8px;text-align:center;top:766.2px">7</span><span style="position:absolute;left:7px;width:8px;text-align:center;top:775.5px">0</span><span style="position:absolute;left:7px;width:8px;text-align:center;top:784.8px">0</span><i style="position:absolute;left:21px;top:765.3px;width:3px;height:1px;background:#686868"></i><i style="position:absolute;left:20px;top:775.9px;width:4px;height:1px;background:#686868"></i><i style="position:absolute;left:21px;top:786.4px;width:3px;height:1px;background:#686868"></i><i style="position:absolute;left:0;top:797.0px;width:24px;height:1px;background:#5f5f5f"></i><span style="position:absolute;left:7px;width:8px;text-align:center;top:799.2px">1</span><span style="position:absolute;left:7px;width:8px;text-align:center;top:808.5px">8</span><span style="position:absolute;left:7px;width:8px;text-align:center;top:817.8px">0</span><span style="position:absolute;left:7px;width:8px;text-align:center;top:827.1px">0</span><i style="position:absolute;left:21px;top:807.5px;width:3px;height:1px;background:#686868"></i><i style="position:absolute;left:20px;top:818.1px;width:4px;height:1px;background:#686868"></i><i style="position:absolute;left:21px;top:828.6px;width:3px;height:1px;background:#686868"></i><i style="position:absolute;left:0;top:839.2px;width:24px;height:1px;background:#5f5f5f"></i><span style="position:absolute;left:7px;width:8px;text-align:center;top:841.4px">1</span><span style="position:absolute;left:7px;width:8px;text-align:center;top:850.7px">9</span><span style="position:absolute;left:7px;width:8px;text-align:center;top:860.0px">0</span><span style="position:absolute;left:7px;width:8px;text-align:center;top:869.3px">0</span><i style="position:absolute;left:21px;top:849.7px;width:3px;height:1px;background:#686868"></i><i style="position:absolute;left:20px;top:860.3px;width:4px;height:1px;background:#686868"></i><i style="position:absolute;left:21px;top:870.8px;width:3px;height:1px;background:#686868"></i><i style="position:absolute;left:0;top:881.4px;width:24px;height:1px;background:#5f5f5f"></i><span style="position:absolute;left:7px;width:8px;text-align:center;top:883.6px">2</span><span style="position:absolute;left:7px;width:8px;text-align:center;top:892.9px">0</span><span style="position:absolute;left:7px;width:8px;text-align:center;top:902.2px">0</span><span style="position:absolute;left:7px;width:8px;text-align:center;top:911.5px">0</span><i style="position:absolute;left:21px;top:892.0px;width:3px;height:1px;background:#686868"></i><i style="position:absolute;left:20px;top:902.5px;width:4px;height:1px;background:#686868"></i><i style="position:absolute;left:21px;top:913.1px;width:3px;height:1px;background:#686868"></i><i style="position:absolute;left:0;top:923.6px;width:24px;height:1px;background:#5f5f5f"></i><span style="position:absolute;left:7px;width:8px;text-align:center;top:925.8px">2</span><span style="position:absolute;left:7px;width:8px;text-align:center;top:935.1px">1</span><span style="position:absolute;left:7px;width:8px;text-align:center;top:944.4px">0</span><span style="position:absolute;left:7px;width:8px;text-align:center;top:953.7px">0</span><i style="position:absolute;left:21px;top:934.2px;width:3px;height:1px;background:#686868"></i><i style="position:absolute;left:20px;top:944.7px;width:4px;height:1px;background:#686868"></i><i style="position:absolute;left:21px;top:955.3px;width:3px;height:1px;background:#686868"></i><i style="position:absolute;left:0;top:965.8px;width:24px;height:1px;background:#5f5f5f"></i><span style="position:absolute;left:7px;width:8px;text-align:center;top:968.0px">2</span><span style="position:absolute;left:7px;width:8px;text-align:center;top:977.3px">2</span><span style="position:absolute;left:7px;width:8px;text-align:center;top:986.6px">0</span><span style="position:absolute;left:7px;width:8px;text-align:center;top:995.9px">0</span><i style="position:absolute;left:21px;top:976.4px;width:3px;height:1px;background:#686868"></i><i style="position:absolute;left:20px;top:986.9px;width:4px;height:1px;background:#686868"></i><i style="position:absolute;left:21px;top:997.5px;width:3px;height:1px;background:#686868"></i></div>
<div style="position:absolute;left:100px;top:80px;width:24px;height:24px;background:#555;background-image:linear-gradient(#666,#666),linear-gradient(#666,#666);background-size:24px 1px,1px 24px;background-position:0 17px,17px 0;background-repeat:no-repeat;"></div>
<div style="position:absolute;left:1002px;top:81px;width:1px;height:16px;background:#e8e8e8;"></div>
<div style="position:absolute;left:103px;top:436px;width:14px;height:1px;background:#e8e8e8;"></div>
<div style="position:absolute;left:55px;top:8px;width:2px;height:25px;background:transparent;background-image:repeating-linear-gradient(#444 0,#444 1px,transparent 1px,transparent 2px);"></div>
<svg style="position:absolute;left:73px;top:11px;overflow:visible;" width="21" height="19" viewBox="0 0 21 19"><path d="M10.5 0.6 L0.6 9.6 H3.4 V18.4 H8.4 V12.4 H12.6 V18.4 H17.6 V9.6 H20.4 L17.4 6.9 V2.2 H14.6 V4.3 Z" fill="#e6e6e6"/></svg>
<div style="position:absolute;left:115px;top:6px;width:1px;height:29px;background:#404040;"></div>
<svg style="position:absolute;left:126.5px;top:11.5px;overflow:visible;" width="19" height="19" viewBox="0 0 20 20"><path d="M10 3.4 V16.6 M3.4 10 H16.6" stroke="#dcdcdc" stroke-width="1.5" fill="none"/><path d="M10 0.4 L13.4 4.6 H6.6 Z M10 19.6 L13.4 15.4 H6.6 Z M0.4 10 L4.6 6.6 V13.4 Z M19.6 10 L15.4 6.6 V13.4 Z" fill="#dcdcdc"/></svg>
<svg style="position:absolute;left:157.5px;top:20.15px;overflow:visible;" width="9" height="5.5" viewBox="0 0 10 6"><path d="M1 1 L5 5 L9 1" fill="none" stroke="#dcdcdc" stroke-width="1.5"/></svg>
<div style="position:absolute;left:177px;top:6px;width:1px;height:29px;background:#404040;"></div>
<div style="position:absolute;left:187px;top:15px;width:13px;height:13px;background:#444;border:1px solid #7a7a7a;border-radius:3px;box-sizing:border-box;"></div>
<div style="position:absolute;left:210px;top:14px;font-size:13.2px;line-height:13.2px;color:#e4e4e4;font-weight:normal;white-space:nowrap;letter-spacing:0.35px;text-shadow:0 0 .4px #e4e4e4;">Auto-Select:</div>
<div style="position:absolute;left:295.5px;top:9.5px;width:68px;height:23px;background:#454545;border:1px solid #666;border-radius:4px;box-sizing:border-box;"></div>
<div style="position:absolute;left:304px;top:14px;font-size:13.2px;line-height:13.2px;color:#e4e4e4;font-weight:normal;white-space:nowrap;letter-spacing:0.15px;">Layer</div>
<svg style="position:absolute;left:349.5px;top:20.15px;overflow:visible;" width="9" height="5.5" viewBox="0 0 10 6"><path d="M1 1 L5 5 L9 1" fill="none" stroke="#dcdcdc" stroke-width="1.5"/></svg>
<div style="position:absolute;left:369px;top:6px;width:1px;height:29px;background:#404040;"></div>
<div style="position:absolute;left:375px;top:15px;width:13px;height:13px;background:#dcdcdc;border-radius:3px;"></div>
<svg style="position:absolute;left:377px;top:17px;overflow:visible;" width="9" height="9" viewBox="0 0 9 9"><path d="M1 4.6 L3.6 7.2 L8 1.6" fill="none" stroke="#111" stroke-width="1.8"/></svg>
<div style="position:absolute;left:398px;top:14px;font-size:13.2px;line-height:13.2px;color:#e4e4e4;font-weight:normal;white-space:nowrap;letter-spacing:0.23px;text-shadow:0 0 .4px #e4e4e4;">Show Transform Controls</div>
<div style="position:absolute;left:560px;top:6px;width:1px;height:29px;background:#404040;"></div>
<svg style="position:absolute;left:574px;top:11px;overflow:visible;" width="18" height="20" viewBox="0 0 18 20"><rect x="0.4" y="0" width="1.3" height="20" fill="#9c9c9c"/><rect x="3.4" y="4" width="9" height="5" fill="#9c9c9c"/><rect x="3.4" y="11" width="14" height="5" fill="#9c9c9c"/></svg>
<svg style="position:absolute;left:608px;top:11px;overflow:visible;" width="15" height="20" viewBox="0 0 15 20"><rect x="6.8" y="0" width="1.3" height="20" fill="#9c9c9c"/><rect x="2.4" y="4" width="10" height="5" fill="#9c9c9c"/><rect x="0.4" y="11" width="14" height="5" fill="#9c9c9c"/></svg>
<svg style="position:absolute;left:640px;top:11px;overflow:visible;" width="18" height="20" viewBox="0 0 18 20"><rect x="16.2" y="0" width="1.3" height="20" fill="#9c9c9c"/><rect x="5.4" y="4" width="9" height="5" fill="#9c9c9c"/><rect x="0.4" y="11" width="14" height="5" fill="#9c9c9c"/></svg>
<svg style="position:absolute;left:677px;top:13px;overflow:visible;" width="20" height="14" viewBox="0 0 20 14"><rect x="0" y="0.4" width="20" height="1.2" fill="#9c9c9c"/><rect x="0" y="12.4" width="20" height="1.2" fill="#9c9c9c"/><rect x="4" y="4.4" width="12" height="5" fill="#9c9c9c"/></svg>
<div style="position:absolute;left:709px;top:6px;width:1px;height:29px;background:#404040;"></div>
<svg style="position:absolute;left:722px;top:13px;overflow:visible;" width="19" height="17" viewBox="0 0 19 17"><rect x="0" y="0" width="19" height="1.3" fill="#9c9c9c"/><rect x="3" y="3" width="5" height="13.4" fill="#9c9c9c"/><rect x="11" y="3" width="5" height="9" fill="#9c9c9c"/></svg>
<svg style="position:absolute;left:755px;top:13px;overflow:visible;" width="18" height="16" viewBox="0 0 18 16"><rect x="0" y="7.4" width="18" height="1.3" fill="#9c9c9c"/><rect x="3" y="1" width="5" height="14" fill="#9c9c9c"/><rect x="10.6" y="3.6" width="5" height="9" fill="#9c9c9c"/></svg>
<svg style="position:absolute;left:788px;top:12px;overflow:visible;" width="19" height="17" viewBox="0 0 19 17"><rect x="0" y="15.7" width="19" height="1.3" fill="#9c9c9c"/><rect x="3" y="0.6" width="5" height="13.4" fill="#9c9c9c"/><rect x="11" y="5" width="5" height="9" fill="#9c9c9c"/></svg>
<svg style="position:absolute;left:827px;top:11px;overflow:visible;" width="15" height="20" viewBox="0 0 15 20"><rect x="0.4" y="0" width="1.2" height="20" fill="#9c9c9c"/><rect x="13.2" y="0" width="1.2" height="20" fill="#9c9c9c"/><rect x="4.8" y="4" width="5" height="12" fill="#9c9c9c"/></svg>
<div style="position:absolute;left:856.5px;top:6px;width:1px;height:29px;background:#404040;"></div>
<svg style="position:absolute;left:869px;top:18px;overflow:visible;" width="20" height="6" viewBox="0 0 20 6"><circle cx="3" cy="3" r="2.2" fill="#e4e4e4"/><circle cx="10" cy="3" r="2.2" fill="#e4e4e4"/><circle cx="17" cy="3" r="2.2" fill="#e4e4e4"/></svg>
<div style="position:absolute;left:901px;top:6px;width:1px;height:29px;background:#404040;"></div>
<div style="position:absolute;left:907.5px;top:14px;font-size:13.2px;line-height:13.2px;color:#8c8c8c;font-weight:normal;white-space:nowrap;letter-spacing:0.2px;">3D Mode:</div>
<svg style="position:absolute;left:981px;top:11px;overflow:visible;" width="24" height="20" viewBox="0 0 24 20"><circle cx="13.6" cy="6" r="4.4" fill="none" stroke="#9c9c9c" stroke-width="1.2"/><path d="M9 6 C3 7 0.6 10 2 12.6 C3 14.4 5 15.6 7 16 M17.6 9 C21.6 10.4 23.6 13 22.4 15 C21.4 16.6 19 17.4 16.4 17.4" fill="none" stroke="#9c9c9c" stroke-width="1.2"/><path d="M5 13.4 L10 17.6 L4.4 18.8 Z" fill="#9c9c9c"/></svg>
<svg style="position:absolute;left:1015px;top:10px;overflow:visible;" width="22" height="22" viewBox="0 0 22 22"><circle cx="11" cy="11.4" r="4.2" fill="none" stroke="#9c9c9c" stroke-width="1.3"/><path d="M4 5.6 A9.6 9.6 0 1 1 1.6 12.6" fill="none" stroke="#9c9c9c" stroke-width="1.2"/><path d="M2.2 2.6 L7.2 4.4 L3.2 7.8 Z" fill="#9c9c9c"/></svg>
<svg style="position:absolute;left:1048.6px;top:10.6px;overflow:visible;" width="21" height="21" viewBox="0 0 21 21"><path d="M10.5 0.8 L14 4.6 H11.8 V9.2 H16.4 V7 L20.2 10.5 L16.4 14 V11.8 H11.8 V16.4 H14 L10.5 20.2 L7 16.4 H9.2 V11.8 H4.6 V14 L0.8 10.5 L4.6 7 V9.2 H9.2 V4.6 H7 Z" fill="none" stroke="#9c9c9c" stroke-width="1.1" stroke-linejoin="round"/></svg>
<svg style="position:absolute;left:1081px;top:10px;overflow:visible;" width="22" height="22" viewBox="0 0 22 22"><circle cx="11" cy="10.4" r="3.6" fill="none" stroke="#9c9c9c" stroke-width="1.2"/><path d="M11 0.6 L13.6 4 H8.4 Z M0.6 10.4 L4.6 7.6 V13.2 Z M21.4 10.4 L17.4 7.6 V13.2 Z M11 21.4 L7 16.6 H15 Z" fill="#9c9c9c"/><path d="M11 3 V7 M3 10.4 H7.4 M14.6 10.4 H19 M11 14 V17" stroke="#9c9c9c" stroke-width="1.6"/></svg>
<svg style="position:absolute;left:1113px;top:14px;overflow:visible;" width="25" height="14" viewBox="0 0 25 14"><rect x="0.6" y="1.6" width="11" height="10" rx="1.8" fill="#9c9c9c"/><path d="M12 6.6 L16 3 V10.4 Z" fill="#9c9c9c"/><path d="M24 0.6 L17.6 6.8 L24 13" fill="none" stroke="#9c9c9c" stroke-width="1"/></svg>
<svg style="position:absolute;left:1748px;top:10px;overflow:visible;" width="23" height="22" viewBox="0 0 23 22"><circle cx="10.4" cy="10.4" r="10" fill="#e2e2e2"/><path d="M10.4 3.4 C13 3.4 14.6 5.4 14.6 8 C14.6 10 13.8 11.6 12.6 12.6 C12.6 14 13.6 14.8 16.6 16 C15 18 13 19 10.4 19 C7.8 19 5.8 18 4.2 16 C7.2 14.8 8.2 14 8.2 12.6 C7 11.6 6.2 10 6.2 8 C6.2 5.4 7.8 3.4 10.4 3.4 Z" fill="#535353"/><circle cx="17.6" cy="16.8" r="5" fill="#535353"/><path d="M17.6 12.8 V20.8 M13.6 16.8 H21.6" stroke="#e2e2e2" stroke-width="1.4"/></svg>
<svg style="position:absolute;left:1785px;top:11px;overflow:visible;" width="20" height="20" viewBox="0 0 20 20"><circle cx="8" cy="8" r="6.6" fill="none" stroke="#e2e2e2" stroke-width="1.7"/><path d="M12.8 12.8 L18.6 18.6" stroke="#e2e2e2" stroke-width="2.2" stroke-linecap="round"/></svg>
<svg style="position:absolute;left:1822px;top:12.6px;overflow:visible;" width="20" height="17" viewBox="0 0 20 17"><rect x="0.8" y="0.8" width="18.4" height="15.4" fill="none" stroke="#e2e2e2" stroke-width="1.5"/><rect x="0.8" y="0.8" width="18.4" height="2.4" fill="#e2e2e2"/><rect x="3.2" y="5" width="3" height="7.6" rx="0.8" fill="none" stroke="#bbb" stroke-width="0.9"/><path d="M3.2 7.6 H6.2 M3.2 10 H6.2" stroke="#bbb" stroke-width="0.8"/></svg>
<svg style="position:absolute;left:1855.7px;top:19.450000000000003px;overflow:visible;" width="8.6" height="5.3" viewBox="0 0 10 6"><path d="M1 1 L5 5 L9 1" fill="none" stroke="#dcdcdc" stroke-width="1.5"/></svg>
<svg style="position:absolute;left:109px;top:56.6px" width="9" height="9" viewBox="0 0 9 9"><path d="M0.8 0.8 L8.2 8.2 M8.2 0.8 L0.8 8.2" stroke="#c4c4c4" stroke-width="1.1"/></svg>
<div style="position:absolute;left:130px;top:53.7px;font-size:14px;line-height:14px;color:#c8c8c8;font-weight:bold;white-space:nowrap;letter-spacing:0.59px;">onboarding-workshop.psd @ 100% (Layer 1, RGB/8#) *</div>
<svg style="position:absolute;left:547.4px;top:56.6px" width="9" height="9" viewBox="0 0 9 9"><path d="M0.8 0.8 L8.2 8.2 M8.2 0.8 L0.8 8.2" stroke="#d4d4d4" stroke-width="1.1"/></svg>
<div style="position:absolute;left:568.4px;top:53.7px;font-size:14px;line-height:14px;color:#f4f4f4;font-weight:bold;white-space:nowrap;letter-spacing:0.47px;">airtime.psd @ 66,7% (RGB/8)</div>
<svg style="position:absolute;left:55px;top:46.6px;overflow:visible;" width="10" height="7" viewBox="0 0 10 7"><path d="M0.8 0.6 L3.8 3.5 L0.8 6.4 M5.6 0.6 L8.6 3.5 L5.6 6.4" fill="none" stroke="#e8e8e8" stroke-width="1.3"/></svg>
<div style="position:absolute;left:60px;top:61.4px;width:25px;height:5px;background:transparent;background-image:repeating-linear-gradient(90deg,#454545 0,#454545 1px,transparent 1px,transparent 2.5px);"></div>
<div style="position:absolute;left:114px;top:1061px;font-size:13px;line-height:13px;color:#e4e4e4;font-weight:normal;white-space:nowrap;letter-spacing:0.43px;text-shadow:0 0 .4px #e4e4e4;">66,67%</div>
<div style="position:absolute;left:200px;top:1061px;font-size:13px;line-height:13px;color:#dcdcdc;font-weight:normal;white-space:nowrap;letter-spacing:0.45px;">2437 px x 2083 px (72 ppi)</div>
<svg style="position:absolute;left:395px;top:1062px;overflow:visible;" width="6" height="12" viewBox="0 0 6 12"><path d="M1 1 L5 6 L1 11" fill="none" stroke="#ddd" stroke-width="1.2"/></svg>
<div style="position:absolute;left:52px;top:79px;width:41px;height:32px;background:#383838;border:1px solid #606060;border-radius:5px;box-sizing:border-box;"></div>
<svg style="position:absolute;left:63.099999999999994px;top:85.9px;overflow:visible;" width="19" height="19" viewBox="0 0 20 20"><path d="M10 3.4 V16.6 M3.4 10 H16.6" stroke="#dcdcdc" stroke-width="1.5" fill="none"/><path d="M10 0.4 L13.4 4.6 H6.6 Z M10 19.6 L13.4 15.4 H6.6 Z M0.4 10 L4.6 6.6 V13.4 Z M19.6 10 L15.4 6.6 V13.4 Z" fill="#dcdcdc"/></svg>
<svg style="position:absolute;left:59.39999999999999px;top:116.0px;overflow:visible;" width="22" height="22" viewBox="0 0 22 22"><path d="M6.6 0.4 V4.6 M0.4 6.8 H4.6" stroke="#dcdcdc" stroke-width="1.3" fill="none"/><path d="M6.6 6.8 H16.6 L21.2 11.4 V21.2 H6.6 Z" fill="none" stroke="#dcdcdc" stroke-width="1.6" stroke-linejoin="round"/><path d="M16.4 6.8 V11.6 H21.2 Z" fill="#dcdcdc"/></svg>
<svg style="position:absolute;left:62.199999999999996px;top:151.5px;overflow:visible;" width="20" height="19" viewBox="0 0 20 19"><path d="M1 5 V1.6 H4.6 M8 1.6 H12.4 M15.4 1.6 H19 V5 M19 8 V11 M19 14 V17.4 H15.4 M12.4 17.4 H8 M4.6 17.4 H1 V14 M1 11 V8" fill="none" stroke="#dcdcdc" stroke-width="1.7"/></svg>
<svg style="position:absolute;left:61.599999999999994px;top:183.0px;overflow:visible;" width="22" height="22" viewBox="0 0 22 22"><ellipse cx="11.6" cy="8.6" rx="9.6" ry="6.6" fill="none" stroke="#dcdcdc" stroke-width="1.5" transform="rotate(-12 11.6 8.6)"/><circle cx="4.6" cy="14" r="2" fill="none" stroke="#dcdcdc" stroke-width="1.2"/><path d="M6 15.4 C7.6 17 7.6 19.4 5.4 21" fill="none" stroke="#dcdcdc" stroke-width="1.3"/></svg>
<svg style="position:absolute;left:61.599999999999994px;top:216.0px;overflow:visible;" width="22" height="22" viewBox="0 0 22 22"><path d="M3 19 L14.6 7.4" stroke="#dcdcdc" stroke-width="4.8" stroke-linecap="round"/><path d="M11.4 10.6 L14.6 7.4" stroke="#535353" stroke-width="1.7" stroke-linecap="round"/><path d="M7.4 0.3999999999999999 L8.30 2.70 L10.600000000000001 3.6 L8.30 4.50 L7.4 6.800000000000001 L6.50 4.50 L4.2 3.6 L6.50 2.70 Z" fill="#dcdcdc"/><path d="M19.6 0.19999999999999973 L20.50 2.50 L22.8 3.4 L20.50 4.30 L19.6 6.6 L18.70 4.30 L16.400000000000002 3.4 L18.70 2.50 Z" fill="#dcdcdc"/><path d="M18.6 9.2 L19.27 10.93 L21.0 11.6 L19.27 12.27 L18.6 14.0 L17.93 12.27 L16.200000000000003 11.6 L17.93 10.93 Z" fill="#dcdcdc"/></svg>
<svg style="position:absolute;left:84.4px;top:234px;overflow:visible;" width="4" height="4" viewBox="0 0 4 4"><path d="M4 0 V4 H0 Z" fill="#c8c8c8"/></svg>
<svg style="position:absolute;left:59.89999999999999px;top:249.0px;overflow:visible;" width="23" height="22" viewBox="0 0 23 22"><path d="M6.6 0.4 V15.6 H16 M8.6 4.8 H17.6 V20.6 M0.6 4.8 H3.8 M19.6 15.6 H23" fill="none" stroke="#dcdcdc" stroke-width="1.8"/></svg>
<svg style="position:absolute;left:84.4px;top:267px;overflow:visible;" width="4" height="4" viewBox="0 0 4 4"><path d="M4 0 V4 H0 Z" fill="#c8c8c8"/></svg>
<svg style="position:absolute;left:61.599999999999994px;top:282.0px;overflow:visible;" width="22" height="22" viewBox="0 0 22 22"><path d="M5.2 19.6 C3.6 20.4 1.6 18.6 2.6 16.8 L11.6 7.6 L14.6 10.6 Z" fill="none" stroke="#dcdcdc" stroke-width="1.5" stroke-linejoin="round"/><path d="M10.2 5 L17 11.8" stroke="#dcdcdc" stroke-width="2.8" stroke-linecap="round"/><path d="M13.6 8.4 L17.4 4.6" stroke="#dcdcdc" stroke-width="5.4" stroke-linecap="round"/></svg>
<svg style="position:absolute;left:84.4px;top:300px;overflow:visible;" width="4" height="4" viewBox="0 0 4 4"><path d="M4 0 V4 H0 Z" fill="#c8c8c8"/></svg>
<svg style="position:absolute;left:61.599999999999994px;top:315.0px;overflow:visible;" width="22" height="22" viewBox="0 0 22 22"><path d="M20 1.2 C20.6 1.8 20 3.6 19 5 L11.8 14.6 L9 12.2 L17.4 3 C18.4 1.8 19.4 0.8 20 1.2 Z" fill="#dcdcdc"/><path d="M8 13 L11 15.6 C10.8 18.6 7.6 21 2 20.6 C4.8 18.4 3.6 14.6 8 13 Z" fill="#dcdcdc"/></svg>
<svg style="position:absolute;left:84.4px;top:333px;overflow:visible;" width="4" height="4" viewBox="0 0 4 4"><path d="M4 0 V4 H0 Z" fill="#c8c8c8"/></svg>
<svg style="position:absolute;left:61.599999999999994px;top:348.0px;overflow:visible;" width="22" height="22" viewBox="0 0 22 22"><path d="M12.8 2.4 L20.6 8.6 L11.2 19 H6.4 L2 15.2 Z" fill="none" stroke="#dcdcdc" stroke-width="1.5" stroke-linejoin="round"/><path d="M12.8 2.4 L20.6 8.6 L15.4 14.4 L7.4 8.4 Z" fill="#dcdcdc"/><path d="M10 19.2 H21" stroke="#dcdcdc" stroke-width="1.5"/></svg>
<div style="position:absolute;left:63px;top:382.6px;width:19.6px;height:16px;background:linear-gradient(90deg,#161616,#e8e8e8);border:1.5px solid #e0e0e0;box-sizing:border-box;"></div>
<div style="position:absolute;left:62.6px;top:411.2px;width:21px;text-align:center;font-family:'Liberation Serif',serif;font-size:25.4px;line-height:26px;color:#dcdcdc;font-weight:bold">T</div>
<svg style="position:absolute;left:84.4px;top:431px;overflow:visible;" width="4" height="4" viewBox="0 0 4 4"><path d="M4 0 V4 H0 Z" fill="#c8c8c8"/></svg>
<svg style="position:absolute;left:61.599999999999994px;top:446.0px;overflow:visible;" width="22" height="22" viewBox="0 0 22 22"><path d="M13.4 3.4 L19.6 9.6 L17.4 10.8 C16.4 14.6 13.4 17.8 7 19.4 L2 20.4 L3 15.4 C4.6 9 7.8 6 11.6 5 Z" fill="none" stroke="#dcdcdc" stroke-width="1.5" stroke-linejoin="round"/><path d="M13 2.2 L15.6 0.6 L22 7 L20.4 9.6 Z" fill="#dcdcdc"/><circle cx="10.4" cy="12" r="1.8" fill="#dcdcdc"/><path d="M2.4 20 L9.4 13" stroke="#dcdcdc" stroke-width="1.1"/></svg>
<svg style="position:absolute;left:84.4px;top:464px;overflow:visible;" width="4" height="4" viewBox="0 0 4 4"><path d="M4 0 V4 H0 Z" fill="#c8c8c8"/></svg>
<svg style="position:absolute;left:60.99999999999999px;top:479.0px;overflow:visible;" width="22" height="22" viewBox="0 0 22 22"><path d="M4.6 1 V17.6 L8.6 13.8 L11.8 20.6 L14.6 19.2 L11.4 12.6 H17 Z" fill="#0c0c0c" stroke="#ececec" stroke-width="1.5" stroke-linejoin="miter"/></svg>
<svg style="position:absolute;left:84.4px;top:497px;overflow:visible;" width="4" height="4" viewBox="0 0 4 4"><path d="M4 0 V4 H0 Z" fill="#c8c8c8"/></svg>
<div style="position:absolute;left:63px;top:514.6px;width:19.8px;height:16px;background:#6c6c6c;border:1.5px solid #e0e0e0;box-sizing:border-box;"></div>
<div style="position:absolute;left:62.2px;top:547.2px;width:20px;height:17px;background:#6c6c6c;border:1.5px solid #e0e0e0;box-sizing:border-box;border-radius:50%;"></div>
<svg style="position:absolute;left:61.599999999999994px;top:578.5px;overflow:visible;" width="22" height="19" viewBox="0 0 22 19"><path d="M12.6 1.4 C14.2 0.8 15 2.6 14.8 4.6 C16.4 3.6 19.6 2.6 20.8 4.2 C22 6 19.4 8 17.6 9.2 C19.4 10.8 20 13.8 18.2 14.8 C16.2 15.8 14.4 13.6 13.2 12.4 C12.6 14.6 11.4 18 9 18 C6.8 17.8 7.4 14.6 7.8 12.8 C5.8 14 2.8 15.2 1.6 13.6 C0.4 11.8 3.2 9.8 5 8.8 C3.8 7.4 3.4 5 5 4.2 C6.8 3.4 8.4 5.2 9.4 6.4 C9.8 4.4 10.8 2 12.6 1.4 Z" fill="#6c6c6c" stroke="#dcdcdc" stroke-width="1.4" stroke-linejoin="round"/></svg>
<svg style="position:absolute;left:61.99999999999999px;top:610.6px;overflow:visible;" width="20" height="22" viewBox="0 0 20 21"><path d="M5.4 12 L3.6 9.6 C2.6 8.2 0.6 9.4 1.4 11 L4.4 16.6 C5.8 19.2 7.8 20.4 11 20.4 C14.8 20.4 17.6 18 17.6 13.6 L18.4 6.4 C18.6 4.8 16.4 4.6 16.2 6.2 L15.6 10.4 L15.4 3.6 C15.4 2 13.2 2 13.2 3.6 V10 L12.6 2.4 C12.6 0.8 10.4 0.8 10.4 2.4 V10 L9.6 3.6 C9.4 2 7.2 2.2 7.4 3.8 L8 12.6 Z" fill="#dcdcdc" stroke="#535353" stroke-width="0.45"/></svg>
<svg style="position:absolute;left:60.99999999999999px;top:644.0px;overflow:visible;" width="22" height="22" viewBox="0 0 22 22"><circle cx="8.6" cy="8.6" r="7" fill="none" stroke="#dcdcdc" stroke-width="1.7"/><path d="M8.6 4.2 A4.4 4.4 0 0 1 12.6 7.2" fill="none" stroke="#dcdcdc" stroke-width="1.1"/><path d="M13.8 13.8 L20 20" stroke="#dcdcdc" stroke-width="3" stroke-linecap="round"/></svg>
<svg style="position:absolute;left:62.6px;top:684.6px;overflow:visible;" width="20" height="6" viewBox="0 0 20 6"><circle cx="3" cy="3" r="2.4" fill="#dcdcdc"/><circle cx="10.2" cy="3" r="2.4" fill="#dcdcdc"/><circle cx="17.4" cy="3" r="2.4" fill="#dcdcdc"/></svg>
<svg style="position:absolute;left:84.4px;top:695px;overflow:visible;" width="4" height="4" viewBox="0 0 4 4"><path d="M4 0 V4 H0 Z" fill="#c8c8c8"/></svg>
<div style="position:absolute;left:58.2px;top:716.4px;width:8.6px;height:8.6px;background:#e8e8e8;"></div>
<div style="position:absolute;left:54.2px;top:712.2px;width:8.4px;height:8.4px;background:#0c0c0c;border:1.5px solid #e8e8e8;box-sizing:border-box;"></div>
<svg style="position:absolute;left:76px;top:711px;overflow:visible;" width="13" height="13" viewBox="0 0 13 13"><path d="M3 3.4 H7.4 C9.2 3.4 10 4.2 10 6 V10" fill="none" stroke="#dcdcdc" stroke-width="1.6"/><path d="M0.2 3.4 L4 0.4 V6.4 Z M10 13 L7 9.2 H13 Z" fill="#dcdcdc"/></svg>
<div style="position:absolute;left:66.4px;top:744px;width:24px;height:24.2px;background:#fff;border:1px solid #2e2e2e;box-sizing:border-box;"></div>
<div style="position:absolute;left:53.4px;top:731.6px;width:24.2px;height:24.2px;background:#000;border:2px solid #f4f4f4;box-sizing:border-box;box-shadow:0 0 0 1px #2e2e2e;"></div>
<svg style="position:absolute;left:61.6px;top:782.6px;overflow:visible;" width="22" height="17" viewBox="0 0 22 17"><rect x="0.8" y="4.8" width="13.6" height="11" fill="none" stroke="#dcdcdc" stroke-width="1.5"/><rect x="7" y="1.4" width="14" height="10" fill="#535353" stroke="#dcdcdc" stroke-width="1.5"/><path d="M6.4 1.2 H21.6" stroke="#dcdcdc" stroke-width="2.2"/></svg>
<svg style="position:absolute;left:84.4px;top:798px;overflow:visible;" width="4" height="4" viewBox="0 0 4 4"><path d="M4 0 V4 H0 Z" fill="#c8c8c8"/></svg>
<div style="position:absolute;left:1496px;top:61.4px;width:25px;height:5px;background:transparent;background-image:repeating-linear-gradient(90deg,#454545 0,#454545 1px,transparent 1px,transparent 2.5px);"></div>
<svg style="position:absolute;left:1515px;top:46.6px;overflow:visible;" width="10" height="7" viewBox="0 0 10 7"><path d="M4.2 0.6 L1.2 3.5 L4.2 6.4 M9 0.6 L6 3.5 L9 6.4" fill="none" stroke="#e8e8e8" stroke-width="1.3"/></svg>
<svg style="position:absolute;left:1851.6px;top:46.6px;overflow:visible;" width="10" height="7" viewBox="0 0 10 7"><path d="M0.8 0.6 L3.8 3.5 L0.8 6.4 M5.6 0.6 L8.6 3.5 L5.6 6.4" fill="none" stroke="#e8e8e8" stroke-width="1.3"/></svg>
<svg style="position:absolute;left:1497px;top:75px;overflow:visible;" width="22" height="24" viewBox="0 0 22 24"><rect x="1" y="1" width="5.6" height="5.6" fill="none" stroke="#dcdcdc" stroke-width="1.2"/><rect x="1" y="8.6" width="5.6" height="5.6" fill="none" stroke="#dcdcdc" stroke-width="1.2"/><rect x="0.6" y="16" width="6.6" height="6.6" fill="#dcdcdc"/><path d="M12 21 C18 17 20 10 16.6 3.6" fill="none" stroke="#dcdcdc" stroke-width="2.2"/><path d="M11 6.6 L17.4 1 L19.6 8 Z" fill="#dcdcdc"/></svg>
<svg style="position:absolute;left:1495.6px;top:113.6px;overflow:visible;" width="24" height="18" viewBox="0 0 24 18"><path d="M12.6 0.6 C19.6 0.6 23.4 4.6 23.4 9.6 C23.4 14.6 18.6 17.4 12 17.4 C5.4 17.4 0.6 15.4 0.6 11.4 C0.6 9 2.6 8.6 4.6 8.6 C7.6 8.6 6.6 5.6 7.6 3.6 C8.6 1.6 10.6 0.6 12.6 0.6 Z" fill="#dcdcdc"/><circle cx="11.4" cy="4.4" r="1.7" fill="#535353"/><circle cx="16.4" cy="4" r="1.7" fill="#535353"/><circle cx="20" cy="8" r="1.7" fill="#535353"/><circle cx="16" cy="12.6" r="1.7" fill="#535353"/><circle cx="10.4" cy="13.6" r="1.8" fill="#535353"/><circle cx="5" cy="12.2" r="1.6" fill="#535353"/></svg>
<svg style="position:absolute;left:1497px;top:147.6px;overflow:visible;" width="22" height="19" viewBox="0 0 22 19"><rect x="0.7" y="0.7" width="20.6" height="17.6" fill="#3a3a3a" stroke="#dcdcdc" stroke-width="1.4"/><rect x="1.6" y="1.6" width="5" height="4.2" fill="#b4b4b4"/><rect x="8.0" y="1.6" width="5" height="4.2" fill="#b4b4b4"/><rect x="14.4" y="1.6" width="5" height="4.2" fill="#b4b4b4"/><rect x="1.6" y="7.199999999999999" width="5" height="4.2" fill="#888"/><rect x="8.0" y="7.199999999999999" width="5" height="4.2" fill="#888"/><rect x="14.4" y="7.199999999999999" width="5" height="4.2" fill="#888"/><rect x="1.6" y="12.799999999999999" width="5" height="4.2" fill="#555"/><rect x="8.0" y="12.799999999999999" width="5" height="4.2" fill="#555"/><rect x="14.4" y="12.799999999999999" width="5" height="4.2" fill="#555"/><path d="M7.4 1 V18 M13.8 1 V18 M1 6.6 H21 M1 12.2 H21" stroke="#dcdcdc" stroke-width="1.3"/></svg>
<div style="position:absolute;left:1484px;top:179px;width:47px;height:2px;background:#3c3c3c;"></div>
<div style="position:absolute;left:1546px;top:68px;font-size:13px;line-height:13px;color:#c4c4c4;font-weight:bold;white-space:nowrap;letter-spacing:0.2px;">Character</div>
<div style="position:absolute;left:1633px;top:68px;font-size:13px;line-height:13px;color:#ffffff;font-weight:bold;white-space:nowrap;letter-spacing:0.2px;">Paragraph</div>
<div style="position:absolute;left:1723.6px;top:68px;font-size:13px;line-height:13px;color:#c4c4c4;font-weight:bold;white-space:nowrap;letter-spacing:0.2px;">Glyphs</div>
<svg style="position:absolute;left:1851px;top:70.4px;overflow:visible;" width="13" height="10" viewBox="0 0 13 10"><path d="M0 0.8 H13 M0 3.6 H13 M0 6.4 H13 M0 9.2 H13" stroke="#c8c8c8" stroke-width="1.1"/></svg>
<div style="position:absolute;left:1546px;top:108.6px;font-size:13px;line-height:13px;color:#ffffff;font-weight:bold;white-space:nowrap;letter-spacing:0.2px;">Properties</div>
<div style="position:absolute;left:1636px;top:108.6px;font-size:13px;line-height:13px;color:#c4c4c4;font-weight:bold;white-space:nowrap;letter-spacing:0.2px;">Libraries</div>
<div style="position:absolute;left:1717px;top:108.6px;font-size:13px;line-height:13px;color:#c4c4c4;font-weight:bold;white-space:nowrap;letter-spacing:0.2px;">Layer Comps</div>
<svg style="position:absolute;left:1851px;top:111px;overflow:visible;" width="13" height="10" viewBox="0 0 13 10"><path d="M0 0.8 H13 M0 3.6 H13 M0 6.4 H13 M0 9.2 H13" stroke="#c8c8c8" stroke-width="1.1"/></svg>
<div style="position:absolute;left:1546px;top:149.4px;font-size:13px;line-height:13px;color:#ffffff;font-weight:bold;white-space:nowrap;letter-spacing:0.2px;">Layers</div>
<svg style="position:absolute;left:1851px;top:151.6px;overflow:visible;" width="13" height="10" viewBox="0 0 13 10"><path d="M0 0.8 H13 M0 3.6 H13 M0 6.4 H13 M0 9.2 H13" stroke="#c8c8c8" stroke-width="1.1"/></svg>
<div style="position:absolute;left:1539px;top:185.6px;width:112px;height:24px;background:#454545;border:1px solid #686868;border-radius:4px;box-sizing:border-box;"></div>
<svg style="position:absolute;left:1550px;top:190.6px;overflow:visible;" width="14" height="14" viewBox="0 0 14 14"><circle cx="5.6" cy="5.6" r="4.4" fill="none" stroke="#e0e0e0" stroke-width="1.4"/><path d="M8.8 8.8 L13 13" stroke="#e0e0e0" stroke-width="2" stroke-linecap="round"/></svg>
<div style="position:absolute;left:1566px;top:190.6px;font-size:13.2px;line-height:13.2px;color:#ececec;font-weight:normal;white-space:nowrap;letter-spacing:0.05px;text-shadow:0 0 .4px #ececec;">Kind</div>
<svg style="position:absolute;left:1636.5px;top:196.75px;overflow:visible;" width="9" height="5.5" viewBox="0 0 10 6"><path d="M1 1 L5 5 L9 1" fill="none" stroke="#e0e0e0" stroke-width="1.5"/></svg>
<svg style="position:absolute;left:1664.6px;top:191px;overflow:visible;" width="17" height="14" viewBox="0 0 17 14"><rect x="0.8" y="0.8" width="15.4" height="12.4" rx="0.8" fill="none" stroke="#e0e0e0" stroke-width="1.4"/><path d="M3 10.6 L6 5.6 L8.4 9 L10.4 6.6 L13.6 10.6 Z" fill="#e0e0e0"/></svg>
<svg style="position:absolute;left:1695.6px;top:190.6px;overflow:visible;" width="15" height="15" viewBox="0 0 15 15"><circle cx="7.5" cy="7.5" r="6.4" fill="none" stroke="#e0e0e0" stroke-width="1.4"/><path d="M12 3 A6.4 6.4 0 0 1 3 12 Z" fill="#e0e0e0"/></svg>
<div style="position:absolute;left:1725px;top:186px;width:17px;text-align:center;font-family:'Liberation Serif',serif;font-size:19px;line-height:24px;font-weight:bold;color:#e0e0e0">T</div>
<svg style="position:absolute;left:1756px;top:190.4px;overflow:visible;" width="16" height="16" viewBox="0 0 16 16"><rect x="2.4" y="2.4" width="11.2" height="11.2" fill="none" stroke="#e0e0e0" stroke-width="1.4"/><rect x="0.6" y="0.6" width="3.6" height="3.6" fill="#535353" stroke="#e0e0e0" stroke-width="1"/><rect x="11.8" y="0.6" width="3.6" height="3.6" fill="#535353" stroke="#e0e0e0" stroke-width="1"/><rect x="0.6" y="11.8" width="3.6" height="3.6" fill="#535353" stroke="#e0e0e0" stroke-width="1"/><rect x="11.8" y="11.8" width="3.6" height="3.6" fill="#535353" stroke="#e0e0e0" stroke-width="1"/></svg>
<svg style="position:absolute;left:1788px;top:190px;overflow:visible;" width="15" height="16" viewBox="0 0 15 16"><path d="M4.6 0.8 H10.4 L13.8 4.2 V13 H4.6 Z" fill="none" stroke="#e0e0e0" stroke-width="1.4"/><path d="M10 0.8 V4.6 H13.8" fill="none" stroke="#e0e0e0" stroke-width="1.1"/><rect x="0.6" y="8" width="7" height="7.4" fill="#e0e0e0"/></svg>
<div style="position:absolute;left:1816.6px;top:188.8px;width:12px;height:21px;background:#404040;border:1px solid #666;border-radius:6px;box-sizing:border-box;"></div>
<div style="position:absolute;left:1817.2px;top:186.6px;width:10.8px;height:10.8px;background:#dedede;border-radius:50%;"></div>
<div style="position:absolute;left:1535px;top:214px;width:336px;height:1px;background:#3e3e3e;"></div>
<div style="position:absolute;left:1535px;top:249px;width:336px;height:1px;background:#3e3e3e;"></div>
<div style="position:absolute;left:1539px;top:221px;width:165px;height:23.4px;background:#4e4e4e;border:1px solid #5e5e5e;border-radius:4px;box-sizing:border-box;"></div>
<div style="position:absolute;left:1548.6px;top:226px;font-size:13px;line-height:13px;color:#8e8e8e;font-weight:normal;white-space:nowrap;letter-spacing:0.25px;">Normal</div>
<svg style="position:absolute;left:1690.7px;top:231.45px;overflow:visible;" width="8.6" height="5.3" viewBox="0 0 10 6"><path d="M1 1 L5 5 L9 1" fill="none" stroke="#7a7a7a" stroke-width="1.2"/></svg>
<div style="position:absolute;left:1709px;top:226px;font-size:13px;line-height:13px;color:#8e8e8e;font-weight:normal;white-space:nowrap;letter-spacing:0.35px;">Opacity:</div>
<div style="position:absolute;left:1762.6px;top:221px;width:64.4px;height:22.4px;background:#4e4e4e;border:1px solid #5e5e5e;border-radius:4px;box-sizing:border-box;"></div>
<div style="position:absolute;left:1808.6px;top:221.6px;width:1px;height:21px;background:#5e5e5e;"></div>
<div style="position:absolute;left:1767.4px;top:226px;font-size:13px;line-height:13px;color:#7a7a7a;font-weight:normal;white-space:nowrap;letter-spacing:-0.05px;">100%</div>
<svg style="position:absolute;left:1813.7px;top:231.45px;overflow:visible;" width="8.6" height="5.3" viewBox="0 0 10 6"><path d="M1 1 L5 5 L9 1" fill="none" stroke="#7a7a7a" stroke-width="1.2"/></svg>
<div style="position:absolute;left:1541.4px;top:262.2px;font-size:13px;line-height:13px;color:#8e8e8e;font-weight:normal;white-space:nowrap;letter-spacing:0.12px;">Lock:</div>
<svg style="position:absolute;left:1582px;top:261.4px;overflow:visible;" width="14" height="14" viewBox="0 0 14 14"><rect x="0.6" y="0.6" width="12.8" height="12.8" fill="none" stroke="#8e8e8e" stroke-width="1.2"/><rect x="1" y="1" width="4" height="4" fill="#8e8e8e"/><rect x="9" y="1" width="4" height="4" fill="#8e8e8e"/><rect x="5" y="5" width="4" height="4" fill="#8e8e8e"/><rect x="1" y="9" width="4" height="4" fill="#8e8e8e"/><rect x="9" y="9" width="4" height="4" fill="#8e8e8e"/></svg>
<svg style="position:absolute;left:1609px;top:259.4px;overflow:visible;" width="18" height="18" viewBox="0 0 18 18"><path d="M16.4 0.8 C17.4 1.6 17 2.8 16.2 3.8 L9.6 12 L7.2 10 L14.2 1.6 C14.8 0.8 15.6 0.2 16.4 0.8 Z M6.4 11 L8.8 13 C8.6 15.4 6 17.2 1.4 17 C3.6 15.2 2.8 12.2 6.4 11 Z" fill="#8e8e8e"/></svg>
<svg style="position:absolute;left:1636.0px;top:260.4px;overflow:visible;" width="16" height="16" viewBox="0 0 20 20"><path d="M10 3.4 V16.6 M3.4 10 H16.6" stroke="#8e8e8e" stroke-width="1.3" fill="none"/><path d="M10 0.4 L13.4 4.6 H6.6 Z M10 19.6 L13.4 15.4 H6.6 Z M0.4 10 L4.6 6.6 V13.4 Z M19.6 10 L15.4 6.6 V13.4 Z" fill="#8e8e8e"/></svg>
<svg style="position:absolute;left:1663.6px;top:260px;overflow:visible;" width="18" height="17" viewBox="0 0 18 17"><path d="M3.6 3.6 H11 L14.4 7 V13.4 H3.6 Z" fill="none" stroke="#8e8e8e" stroke-width="1.3"/><path d="M10.6 3.6 V7.4 H14.4" fill="none" stroke="#8e8e8e" stroke-width="1"/><path d="M0.4 3.6 H2 M3.6 0.4 V2 M16 3.6 H17.6 M14.4 0.4 V2 M0.4 13.4 H2 M3.6 15 V16.6 M16 13.4 H17.6 M14.4 15 V16.6" stroke="#8e8e8e" stroke-width="1.1"/></svg>
<svg style="position:absolute;left:1694px;top:259.6px;overflow:visible;" width="14" height="17" viewBox="0 0 14 17"><path d="M3.6 7 V4.6 C3.6 0.2 10.4 0.2 10.4 4.6 V7" fill="none" stroke="#8e8e8e" stroke-width="1.7"/><rect x="0.6" y="6.6" width="12.8" height="9.8" rx="1" fill="#8e8e8e"/><circle cx="7" cy="11.4" r="1.4" fill="#535353"/></svg>
<div style="position:absolute;left:1738.6px;top:262.2px;font-size:13px;line-height:13px;color:#8e8e8e;font-weight:normal;white-space:nowrap;letter-spacing:0px;">Fill:</div>
<div style="position:absolute;left:1762.6px;top:256.6px;width:64.4px;height:22.4px;background:#4e4e4e;border:1px solid #5e5e5e;border-radius:4px;box-sizing:border-box;"></div>
<div style="position:absolute;left:1808.6px;top:257.2px;width:1px;height:21px;background:#5e5e5e;"></div>
<div style="position:absolute;left:1767.4px;top:262.2px;font-size:13px;line-height:13px;color:#7a7a7a;font-weight:normal;white-space:nowrap;letter-spacing:-0.05px;">100%</div>
<svg style="position:absolute;left:1813.7px;top:266.85px;overflow:visible;" width="8.6" height="5.3" viewBox="0 0 10 6"><path d="M1 1 L5 5 L9 1" fill="none" stroke="#7a7a7a" stroke-width="1.2"/></svg>
<div style="position:absolute;left:1535px;top:288.5px;width:316px;height:46px;background:#535353;"></div>
<div style="position:absolute;left:1535px;top:334.5px;width:316px;height:1px;background:#444;"></div>
<div style="position:absolute;left:1572.4px;top:288.5px;width:1px;height:46px;background:#444;"></div>
<svg style="position:absolute;left:1546px;top:306.5px;overflow:visible;" width="17" height="11" viewBox="0 0 17 11"><path d="M0.6 5.5 C3.6 -0.8 13.4 -0.8 16.4 5.5 C13.4 11.8 3.6 11.8 0.6 5.5 Z" fill="#e4e4e4"/><circle cx="8.5" cy="5.4" r="3.5" fill="#535353"/><circle cx="8.5" cy="5.4" r="2" fill="#e4e4e4"/><circle cx="9.4" cy="4.4" r="1.2" fill="#535353"/></svg>
<div style="position:absolute;left:1578px;top:294.9px;width:40.4px;height:35.4px;background:#222;border-radius:1px"></div><div style="position:absolute;left:1579px;top:295.9px;width:38.4px;height:33.4px;background:repeating-conic-gradient(#d2d2d2 0 25%,#fff 0 50%) 0 0/4px 4px"></div>
<svg style="position:absolute;left:1579px;top:295.9px;overflow:visible;" width="38.4" height="33.4" viewBox="0 0 38.4 33.4"><rect x="2" y="3" width="6" height="8" fill="#fff"/><rect x="3" y="9" width="4" height="1" fill="#222"/><rect x="4" y="12" width="3" height="2" fill="#68a"/></svg>
<div style="position:absolute;left:1599px;top:310.9px;width:19.4px;height:19.4px;background:#3a3a3a;border:1px solid #1e1e1e;box-sizing:border-box;"></div>
<svg style="position:absolute;left:1601px;top:313.1px;overflow:visible;" width="16" height="15" viewBox="0 0 16 15"><rect x="0.4" y="8" width="6.4" height="6.4" fill="#d8d8d8"/><path d="M4.6 0.6 H10 L13 3.6 V12.4 H8.6" fill="none" stroke="#e4e4e4" stroke-width="1.5"/><path d="M4.6 0.6 V6" stroke="#e4e4e4" stroke-width="1.5"/><path d="M9.4 0.8 V4.2 H12.8" fill="none" stroke="#e4e4e4" stroke-width="1"/></svg>
<div style="position:absolute;left:1628.6px;top:305.9px;font-size:13px;line-height:13px;color:#e6e6e6;font-weight:normal;white-space:nowrap;letter-spacing:0.13px;">Layer 1 copy 4</div>
<div style="position:absolute;left:1535px;top:335.4px;width:316px;height:46px;background:#535353;"></div>
<div style="position:absolute;left:1535px;top:381.4px;width:316px;height:1px;background:#444;"></div>
<div style="position:absolute;left:1572.4px;top:335.4px;width:1px;height:46px;background:#444;"></div>
<svg style="position:absolute;left:1546px;top:353.4px;overflow:visible;" width="17" height="11" viewBox="0 0 17 11"><path d="M0.6 5.5 C3.6 -0.8 13.4 -0.8 16.4 5.5 C13.4 11.8 3.6 11.8 0.6 5.5 Z" fill="#e4e4e4"/><circle cx="8.5" cy="5.4" r="3.5" fill="#535353"/><circle cx="8.5" cy="5.4" r="2" fill="#e4e4e4"/><circle cx="9.4" cy="4.4" r="1.2" fill="#535353"/></svg>
<div style="position:absolute;left:1578px;top:341.8px;width:40.4px;height:35.4px;background:#222;border-radius:1px"></div><div style="position:absolute;left:1579px;top:342.8px;width:38.4px;height:33.4px;background:repeating-conic-gradient(#d2d2d2 0 25%,#fff 0 50%) 0 0/4px 4px"></div>
<svg style="position:absolute;left:1579px;top:342.8px;overflow:visible;" width="38.4" height="33.4" viewBox="0 0 38.4 33.4"><rect x="11" y="2" width="6" height="12" fill="#fff"/><rect x="12" y="6" width="4" height="2" fill="#246"/><rect x="12" y="12" width="5" height="1.4" fill="#34b"/></svg>
<div style="position:absolute;left:1599px;top:357.8px;width:19.4px;height:19.4px;background:#3a3a3a;border:1px solid #1e1e1e;box-sizing:border-box;"></div>
<svg style="position:absolute;left:1601px;top:360.0px;overflow:visible;" width="16" height="15" viewBox="0 0 16 15"><rect x="0.4" y="8" width="6.4" height="6.4" fill="#d8d8d8"/><path d="M4.6 0.6 H10 L13 3.6 V12.4 H8.6" fill="none" stroke="#e4e4e4" stroke-width="1.5"/><path d="M4.6 0.6 V6" stroke="#e4e4e4" stroke-width="1.5"/><path d="M9.4 0.8 V4.2 H12.8" fill="none" stroke="#e4e4e4" stroke-width="1"/></svg>
<div style="position:absolute;left:1628.6px;top:352.8px;font-size:13px;line-height:13px;color:#e6e6e6;font-weight:normal;white-space:nowrap;letter-spacing:0.13px;">Layer 1 copy 6</div>
<div style="position:absolute;left:1535px;top:382.3px;width:316px;height:46px;background:#535353;"></div>
<div style="position:absolute;left:1535px;top:428.3px;width:316px;height:1px;background:#444;"></div>
<div style="position:absolute;left:1572.4px;top:382.3px;width:1px;height:46px;background:#444;"></div>
<svg style="position:absolute;left:1546px;top:400.3px;overflow:visible;" width="17" height="11" viewBox="0 0 17 11"><path d="M0.6 5.5 C3.6 -0.8 13.4 -0.8 16.4 5.5 C13.4 11.8 3.6 11.8 0.6 5.5 Z" fill="#e4e4e4"/><circle cx="8.5" cy="5.4" r="3.5" fill="#535353"/><circle cx="8.5" cy="5.4" r="2" fill="#e4e4e4"/><circle cx="9.4" cy="4.4" r="1.2" fill="#535353"/></svg>
<div style="position:absolute;left:1578px;top:388.7px;width:40.4px;height:35.4px;background:#222;border-radius:1px"></div><div style="position:absolute;left:1579px;top:389.7px;width:38.4px;height:33.4px;background:repeating-conic-gradient(#d2d2d2 0 25%,#fff 0 50%) 0 0/4px 4px"></div>
<svg style="position:absolute;left:1579px;top:389.7px;overflow:visible;" width="38.4" height="33.4" viewBox="0 0 38.4 33.4"><rect x="22" y="2" width="6" height="10" fill="#fff"/><rect x="22.6" y="12" width="5" height="1.4" fill="#111"/></svg>
<div style="position:absolute;left:1599px;top:404.7px;width:19.4px;height:19.4px;background:#3a3a3a;border:1px solid #1e1e1e;box-sizing:border-box;"></div>
<svg style="position:absolute;left:1601px;top:406.9px;overflow:visible;" width="16" height="15" viewBox="0 0 16 15"><rect x="0.4" y="8" width="6.4" height="6.4" fill="#d8d8d8"/><path d="M4.6 0.6 H10 L13 3.6 V12.4 H8.6" fill="none" stroke="#e4e4e4" stroke-width="1.5"/><path d="M4.6 0.6 V6" stroke="#e4e4e4" stroke-width="1.5"/><path d="M9.4 0.8 V4.2 H12.8" fill="none" stroke="#e4e4e4" stroke-width="1"/></svg>
<div style="position:absolute;left:1628.6px;top:399.7px;font-size:13px;line-height:13px;color:#e6e6e6;font-weight:normal;white-space:nowrap;letter-spacing:0.13px;">Layer 1 copy 7</div>
<div style="position:absolute;left:1535px;top:429.2px;width:316px;height:46px;background:#535353;"></div>
<div style="position:absolute;left:1535px;top:475.2px;width:316px;height:1px;background:#444;"></div>
<div style="position:absolute;left:1572.4px;top:429.2px;width:1px;height:46px;background:#444;"></div>
<svg style="position:absolute;left:1546px;top:447.2px;overflow:visible;" width="17" height="11" viewBox="0 0 17 11"><path d="M0.6 5.5 C3.6 -0.8 13.4 -0.8 16.4 5.5 C13.4 11.8 3.6 11.8 0.6 5.5 Z" fill="#e4e4e4"/><circle cx="8.5" cy="5.4" r="3.5" fill="#535353"/><circle cx="8.5" cy="5.4" r="2" fill="#e4e4e4"/><circle cx="9.4" cy="4.4" r="1.2" fill="#535353"/></svg>
<div style="position:absolute;left:1578px;top:435.6px;width:40.4px;height:35.4px;background:#222;border-radius:1px"></div><div style="position:absolute;left:1579px;top:436.6px;width:38.4px;height:33.4px;background:repeating-conic-gradient(#d2d2d2 0 25%,#fff 0 50%) 0 0/4px 4px"></div>
<svg style="position:absolute;left:1579px;top:436.6px;overflow:visible;" width="38.4" height="33.4" viewBox="0 0 38.4 33.4"><rect x="32" y="2" width="6" height="8" fill="#fff"/><rect x="32.6" y="11" width="5" height="1.4" fill="#126"/></svg>
<div style="position:absolute;left:1599px;top:451.6px;width:19.4px;height:19.4px;background:#3a3a3a;border:1px solid #1e1e1e;box-sizing:border-box;"></div>
<svg style="position:absolute;left:1601px;top:453.8px;overflow:visible;" width="16" height="15" viewBox="0 0 16 15"><rect x="0.4" y="8" width="6.4" height="6.4" fill="#d8d8d8"/><path d="M4.6 0.6 H10 L13 3.6 V12.4 H8.6" fill="none" stroke="#e4e4e4" stroke-width="1.5"/><path d="M4.6 0.6 V6" stroke="#e4e4e4" stroke-width="1.5"/><path d="M9.4 0.8 V4.2 H12.8" fill="none" stroke="#e4e4e4" stroke-width="1"/></svg>
<div style="position:absolute;left:1628.6px;top:446.6px;font-size:13px;line-height:13px;color:#e6e6e6;font-weight:normal;white-space:nowrap;letter-spacing:0.13px;">Layer 1 copy 8</div>
<div style="position:absolute;left:1535px;top:476.1px;width:316px;height:46px;background:#535353;"></div>
<div style="position:absolute;left:1535px;top:522.1px;width:316px;height:1px;background:#444;"></div>
<div style="position:absolute;left:1572.4px;top:476.1px;width:1px;height:46px;background:#444;"></div>
<svg style="position:absolute;left:1546px;top:494.1px;overflow:visible;" width="17" height="11" viewBox="0 0 17 11"><path d="M0.6 5.5 C3.6 -0.8 13.4 -0.8 16.4 5.5 C13.4 11.8 3.6 11.8 0.6 5.5 Z" fill="#e4e4e4"/><circle cx="8.5" cy="5.4" r="3.5" fill="#535353"/><circle cx="8.5" cy="5.4" r="2" fill="#e4e4e4"/><circle cx="9.4" cy="4.4" r="1.2" fill="#535353"/></svg>
<div style="position:absolute;left:1578px;top:482.5px;width:40.4px;height:35.4px;background:#222;border-radius:1px"></div><div style="position:absolute;left:1579px;top:483.5px;width:38.4px;height:33.4px;background:repeating-conic-gradient(#d2d2d2 0 25%,#fff 0 50%) 0 0/4px 4px"></div>
<svg style="position:absolute;left:1579px;top:483.5px;overflow:visible;" width="38.4" height="33.4" viewBox="0 0 38.4 33.4"></svg>
<div style="position:absolute;left:1599px;top:498.5px;width:19.4px;height:19.4px;background:#3a3a3a;border:1px solid #1e1e1e;box-sizing:border-box;"></div>
<svg style="position:absolute;left:1601px;top:500.7px;overflow:visible;" width="16" height="15" viewBox="0 0 16 15"><rect x="0.4" y="8" width="6.4" height="6.4" fill="#d8d8d8"/><path d="M4.6 0.6 H10 L13 3.6 V12.4 H8.6" fill="none" stroke="#e4e4e4" stroke-width="1.5"/><path d="M4.6 0.6 V6" stroke="#e4e4e4" stroke-width="1.5"/><path d="M9.4 0.8 V4.2 H12.8" fill="none" stroke="#e4e4e4" stroke-width="1"/></svg>
<div style="position:absolute;left:1628.6px;top:493.5px;font-size:13px;line-height:13px;color:#e6e6e6;font-weight:normal;white-space:nowrap;letter-spacing:0.13px;">Layer 1 copy 9</div>
<div style="position:absolute;left:1535px;top:523.0px;width:316px;height:46px;background:#535353;"></div>
<div style="position:absolute;left:1535px;top:569.0px;width:316px;height:1px;background:#444;"></div>
<div style="position:absolute;left:1572.4px;top:523.0px;width:1px;height:46px;background:#444;"></div>
<svg style="position:absolute;left:1546px;top:541.0px;overflow:visible;" width="17" height="11" viewBox="0 0 17 11"><path d="M0.6 5.5 C3.6 -0.8 13.4 -0.8 16.4 5.5 C13.4 11.8 3.6 11.8 0.6 5.5 Z" fill="#e4e4e4"/><circle cx="8.5" cy="5.4" r="3.5" fill="#535353"/><circle cx="8.5" cy="5.4" r="2" fill="#e4e4e4"/><circle cx="9.4" cy="4.4" r="1.2" fill="#535353"/></svg>
<div style="position:absolute;left:1578px;top:529.4px;width:40.4px;height:35.4px;background:#222;border-radius:1px"></div><div style="position:absolute;left:1579px;top:530.4px;width:38.4px;height:33.4px;background:repeating-conic-gradient(#d2d2d2 0 25%,#fff 0 50%) 0 0/4px 4px"></div>
<svg style="position:absolute;left:1579px;top:530.4px;overflow:visible;" width="38.4" height="33.4" viewBox="0 0 38.4 33.4"><rect x="11" y="19" width="6" height="8" fill="#fff"/><rect x="12" y="20" width="5" height="1" fill="#333"/><rect x="12" y="27" width="5" height="1.6" fill="#111"/></svg>
<div style="position:absolute;left:1599px;top:545.4px;width:19.4px;height:19.4px;background:#3a3a3a;border:1px solid #1e1e1e;box-sizing:border-box;"></div>
<svg style="position:absolute;left:1601px;top:547.6px;overflow:visible;" width="16" height="15" viewBox="0 0 16 15"><rect x="0.4" y="8" width="6.4" height="6.4" fill="#d8d8d8"/><path d="M4.6 0.6 H10 L13 3.6 V12.4 H8.6" fill="none" stroke="#e4e4e4" stroke-width="1.5"/><path d="M4.6 0.6 V6" stroke="#e4e4e4" stroke-width="1.5"/><path d="M9.4 0.8 V4.2 H12.8" fill="none" stroke="#e4e4e4" stroke-width="1"/></svg>
<div style="position:absolute;left:1628.6px;top:540.4px;font-size:13px;line-height:13px;color:#e6e6e6;font-weight:normal;white-space:nowrap;letter-spacing:0.13px;">Layer 1 copy 10</div>
<div style="position:absolute;left:1535px;top:569.9px;width:316px;height:46px;background:#535353;"></div>
<div style="position:absolute;left:1535px;top:615.9px;width:316px;height:1px;background:#444;"></div>
<div style="position:absolute;left:1572.4px;top:569.9px;width:1px;height:46px;background:#444;"></div>
<svg style="position:absolute;left:1546px;top:587.9px;overflow:visible;" width="17" height="11" viewBox="0 0 17 11"><path d="M0.6 5.5 C3.6 -0.8 13.4 -0.8 16.4 5.5 C13.4 11.8 3.6 11.8 0.6 5.5 Z" fill="#e4e4e4"/><circle cx="8.5" cy="5.4" r="3.5" fill="#535353"/><circle cx="8.5" cy="5.4" r="2" fill="#e4e4e4"/><circle cx="9.4" cy="4.4" r="1.2" fill="#535353"/></svg>
<div style="position:absolute;left:1578px;top:576.3px;width:40.4px;height:35.4px;background:#222;border-radius:1px"></div><div style="position:absolute;left:1579px;top:577.3px;width:38.4px;height:33.4px;background:repeating-conic-gradient(#d2d2d2 0 25%,#fff 0 50%) 0 0/4px 4px"></div>
<svg style="position:absolute;left:1579px;top:577.3px;overflow:visible;" width="38.4" height="33.4" viewBox="0 0 38.4 33.4"></svg>
<div style="position:absolute;left:1599px;top:592.3px;width:19.4px;height:19.4px;background:#3a3a3a;border:1px solid #1e1e1e;box-sizing:border-box;"></div>
<svg style="position:absolute;left:1601px;top:594.5px;overflow:visible;" width="16" height="15" viewBox="0 0 16 15"><rect x="0.4" y="8" width="6.4" height="6.4" fill="#d8d8d8"/><path d="M4.6 0.6 H10 L13 3.6 V12.4 H8.6" fill="none" stroke="#e4e4e4" stroke-width="1.5"/><path d="M4.6 0.6 V6" stroke="#e4e4e4" stroke-width="1.5"/><path d="M9.4 0.8 V4.2 H12.8" fill="none" stroke="#e4e4e4" stroke-width="1"/></svg>
<div style="position:absolute;left:1628.6px;top:587.3px;font-size:13px;line-height:13px;color:#e6e6e6;font-weight:normal;white-space:nowrap;letter-spacing:0.13px;">Layer 1 copy 11</div>
<div style="position:absolute;left:1535px;top:616.8px;width:316px;height:46px;background:#535353;"></div>
<div style="position:absolute;left:1535px;top:662.8px;width:316px;height:1px;background:#444;"></div>
<div style="position:absolute;left:1572.4px;top:616.8px;width:1px;height:46px;background:#444;"></div>
<svg style="position:absolute;left:1546px;top:634.8px;overflow:visible;" width="17" height="11" viewBox="0 0 17 11"><path d="M0.6 5.5 C3.6 -0.8 13.4 -0.8 16.4 5.5 C13.4 11.8 3.6 11.8 0.6 5.5 Z" fill="#e4e4e4"/><circle cx="8.5" cy="5.4" r="3.5" fill="#535353"/><circle cx="8.5" cy="5.4" r="2" fill="#e4e4e4"/><circle cx="9.4" cy="4.4" r="1.2" fill="#535353"/></svg>
<div style="position:absolute;left:1578px;top:623.2px;width:40.4px;height:35.4px;background:#222;border-radius:1px"></div><div style="position:absolute;left:1579px;top:624.2px;width:38.4px;height:33.4px;background:repeating-conic-gradient(#d2d2d2 0 25%,#fff 0 50%) 0 0/4px 4px"></div>
<svg style="position:absolute;left:1579px;top:624.2px;overflow:visible;" width="38.4" height="33.4" viewBox="0 0 38.4 33.4"><rect x="1.6" y="19" width="6" height="12" fill="#2c48a8"/></svg>
<div style="position:absolute;left:1599px;top:639.2px;width:19.4px;height:19.4px;background:#3a3a3a;border:1px solid #1e1e1e;box-sizing:border-box;"></div>
<svg style="position:absolute;left:1601px;top:641.4px;overflow:visible;" width="16" height="15" viewBox="0 0 16 15"><rect x="0.4" y="8" width="6.4" height="6.4" fill="#d8d8d8"/><path d="M4.6 0.6 H10 L13 3.6 V12.4 H8.6" fill="none" stroke="#e4e4e4" stroke-width="1.5"/><path d="M4.6 0.6 V6" stroke="#e4e4e4" stroke-width="1.5"/><path d="M9.4 0.8 V4.2 H12.8" fill="none" stroke="#e4e4e4" stroke-width="1"/></svg>
<div style="position:absolute;left:1628.6px;top:634.2px;font-size:13px;line-height:13px;color:#e6e6e6;font-weight:normal;white-space:nowrap;letter-spacing:0.13px;">Layer 1 copy 12</div>
<div style="position:absolute;left:1535px;top:1046px;width:336px;height:1px;background:#3e3e3e;"></div>
<svg style="position:absolute;left:1614px;top:1057px;overflow:visible;" width="18" height="10" viewBox="0 0 18 10"><path d="M7.4 1.2 H4.6 C-0.4 1.2 -0.4 8.8 4.6 8.8 H7.4 M10.6 1.2 H13.4 C18.4 1.2 18.4 8.8 13.4 8.8 H10.6 M5 5 H13" fill="none" stroke="#bdbdbd" stroke-width="1.4"/></svg>
<div style="position:absolute;left:1650.4px;top:1051.6px;font-size:15px;line-height:18px;font-style:italic;color:#bdbdbd;letter-spacing:0px"><span style="font-size:16.5px">f</span>x</div>
<svg style="position:absolute;left:1665px;top:1067.6px;overflow:visible;" width="4" height="3" viewBox="0 0 4 3"><path d="M0 0 H4 L2 3 Z" fill="#777"/></svg>
<svg style="position:absolute;left:1683.6px;top:1055.6px;overflow:visible;" width="17" height="12" viewBox="0 0 17 12"><rect x="0.4" y="0.4" width="16.2" height="11.2" rx="0.8" fill="#a4a4a4"/><circle cx="8.5" cy="6" r="3.4" fill="#535353"/></svg>
<svg style="position:absolute;left:1719px;top:1054.6px;overflow:visible;" width="15" height="15" viewBox="0 0 15 15"><circle cx="7.5" cy="7.5" r="6.4" fill="none" stroke="#e4e4e4" stroke-width="1.3"/><path d="M12 3 A6.4 6.4 0 0 1 3 12 Z" fill="#e4e4e4"/></svg>
<svg style="position:absolute;left:1733.4px;top:1069px;overflow:visible;" width="4" height="3" viewBox="0 0 4 3"><path d="M0 0 H4 L2 3 Z" fill="#e4e4e4"/></svg>
<svg style="position:absolute;left:1752px;top:1055px;overflow:visible;" width="17" height="13" viewBox="0 0 17 13"><path d="M0.6 2 C0.6 1 1.2 0.6 2 0.6 H6 L7.6 2.4 H15.4 C16 2.4 16.4 2.8 16.4 3.6 V11.4 C16.4 12 16 12.4 15.4 12.4 H1.6 C1 12.4 0.6 12 0.6 11.4 Z" fill="#dcdcdc"/><path d="M0.6 3.6 H16.4" stroke="#535353" stroke-width="0.7"/></svg>
<svg style="position:absolute;left:1787px;top:1055px;overflow:visible;" width="15" height="15" viewBox="0 0 15 15"><rect x="0.8" y="0.8" width="13.4" height="13.4" rx="1" fill="none" stroke="#e4e4e4" stroke-width="1.4"/><path d="M7.5 4.2 V10.8 M4.2 7.5 H10.8" stroke="#e4e4e4" stroke-width="1.5"/></svg>
<svg style="position:absolute;left:1821.6px;top:1054px;overflow:visible;" width="14" height="16" viewBox="0 0 14 16"><path d="M0.6 3 H13.4 M4.6 2.8 V1.2 H9.4 V2.8" fill="none" stroke="#8c8c8c" stroke-width="1.2"/><path d="M1.8 4.6 H12.2 V14 C12.2 15 11.6 15.4 10.8 15.4 H3.2 C2.4 15.4 1.8 15 1.8 14 Z" fill="none" stroke="#8c8c8c" stroke-width="1.2"/><path d="M4.8 6.6 V13 M7 6.6 V13 M9.2 6.6 V13" stroke="#8c8c8c" stroke-width="1"/></svg>
</body></html>
